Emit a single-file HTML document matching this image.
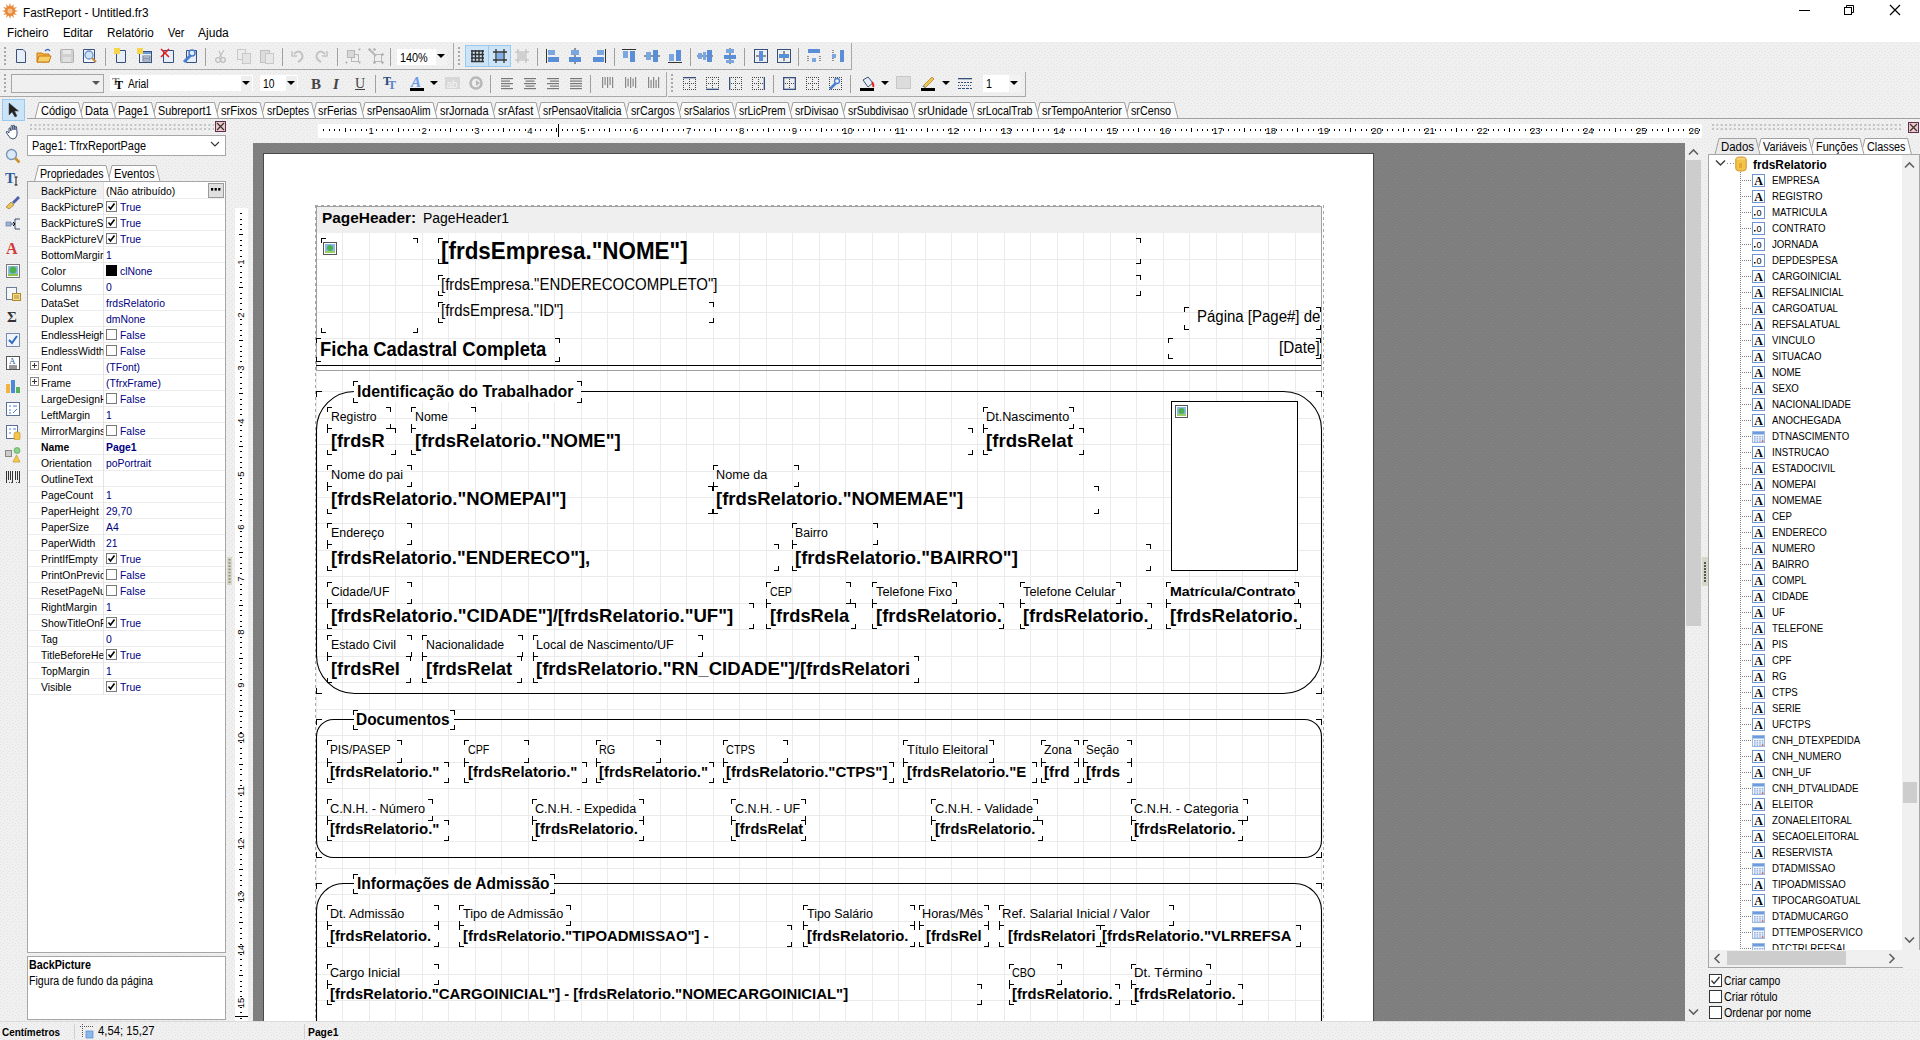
<!DOCTYPE html><html><head><meta charset="utf-8"><style>
html,body{margin:0;padding:0;width:1920px;height:1040px;overflow:hidden;background:#f0f0f0;position:relative;font-family:'Liberation Sans', sans-serif;}
</style></head><body>
<div style="position:absolute;left:0px;top:0px;width:1920px;height:42px;background:#ffffff;z-index:0;"></div><svg style="position:absolute;left:2px;top:3px;z-index:3;" width="16" height="16" viewBox="0 0 16 16"><g fill="#e8893c"><circle cx="8" cy="8" r="5"/><polygon points="8,0 9.5,5 6.5,5" transform="rotate(0 8 8)"/><polygon points="8,0 9.5,5 6.5,5" transform="rotate(30 8 8)"/><polygon points="8,0 9.5,5 6.5,5" transform="rotate(60 8 8)"/><polygon points="8,0 9.5,5 6.5,5" transform="rotate(90 8 8)"/><polygon points="8,0 9.5,5 6.5,5" transform="rotate(120 8 8)"/><polygon points="8,0 9.5,5 6.5,5" transform="rotate(150 8 8)"/><polygon points="8,0 9.5,5 6.5,5" transform="rotate(180 8 8)"/><polygon points="8,0 9.5,5 6.5,5" transform="rotate(210 8 8)"/><polygon points="8,0 9.5,5 6.5,5" transform="rotate(240 8 8)"/><polygon points="8,0 9.5,5 6.5,5" transform="rotate(270 8 8)"/><polygon points="8,0 9.5,5 6.5,5" transform="rotate(300 8 8)"/><polygon points="8,0 9.5,5 6.5,5" transform="rotate(330 8 8)"/></g><circle cx="8" cy="8" r="2.5" fill="#f6c28f"/></svg><div style="position:absolute;left:23px;top:7.14px;font:normal 12px 'Liberation Sans', sans-serif;line-height:13.40px;color:#000;white-space:pre;z-index:5;transform:scaleX(0.9801);transform-origin:0 0;">FastReport - Untitled.fr3</div><div style="position:absolute;left:1799px;top:10px;width:11px;height:1px;background:#000;z-index:2;"></div><svg style="position:absolute;left:1843px;top:4px;z-index:3;" width="12" height="12" viewBox="0 0 12 12"><rect x="1.5" y="3.5" width="7" height="7" fill="none" stroke="#000"/><path d="M3.5 3.5V1.5H10.5V8.5H8.5" fill="none" stroke="#000"/></svg><svg style="position:absolute;left:1889px;top:4px;z-index:3;" width="12" height="12" viewBox="0 0 12 12"><path d="M1 1L11 11M11 1L1 11" stroke="#000" stroke-width="1.2"/></svg><div style="position:absolute;left:7.3px;top:27.14px;font:normal 12px 'Liberation Sans', sans-serif;line-height:13.40px;color:#000;white-space:pre;z-index:5;transform:scaleX(0.9722);transform-origin:0 0;">Ficheiro</div><div style="position:absolute;left:63.3px;top:27.14px;font:normal 12px 'Liberation Sans', sans-serif;line-height:13.40px;color:#000;white-space:pre;z-index:5;transform:scaleX(0.9503);transform-origin:0 0;">Editar</div><div style="position:absolute;left:107px;top:27.14px;font:normal 12px 'Liberation Sans', sans-serif;line-height:13.40px;color:#000;white-space:pre;z-index:5;transform:scaleX(0.9744);transform-origin:0 0;">Relatório</div><div style="position:absolute;left:168px;top:27.14px;font:normal 12px 'Liberation Sans', sans-serif;line-height:13.40px;color:#000;white-space:pre;z-index:5;transform:scaleX(0.9048);transform-origin:0 0;">Ver</div><div style="position:absolute;left:198px;top:27.14px;font:normal 12px 'Liberation Sans', sans-serif;line-height:13.40px;color:#000;white-space:pre;z-index:5;transform:scaleX(1.0032);transform-origin:0 0;">Ajuda</div><div style="position:absolute;left:0px;top:42px;width:454px;height:28px;background:#f0f0f0;z-index:0;"></div><div style="position:absolute;left:0px;top:69px;width:454px;height:1px;background:#a9a9a9;z-index:1;"></div><div style="position:absolute;left:453px;top:43px;width:1px;height:27px;background:#a9a9a9;z-index:1;"></div><div style="position:absolute;left:455px;top:42px;width:397px;height:28px;background:#f0f0f0;z-index:0;"></div><div style="position:absolute;left:455px;top:69px;width:397px;height:1px;background:#a9a9a9;z-index:1;"></div><div style="position:absolute;left:851px;top:43px;width:1px;height:27px;background:#a9a9a9;z-index:1;"></div><div style="position:absolute;left:0px;top:71px;width:667px;height:26px;background:#f0f0f0;z-index:0;"></div><div style="position:absolute;left:0px;top:96px;width:667px;height:1px;background:#a9a9a9;z-index:1;"></div><div style="position:absolute;left:666px;top:72px;width:1px;height:25px;background:#a9a9a9;z-index:1;"></div><div style="position:absolute;left:668px;top:71px;width:358px;height:26px;background:#f0f0f0;z-index:0;"></div><div style="position:absolute;left:668px;top:96px;width:358px;height:1px;background:#a9a9a9;z-index:1;"></div><div style="position:absolute;left:1025px;top:72px;width:1px;height:25px;background:#a9a9a9;z-index:1;"></div><svg style="position:absolute;left:4px;top:47px;z-index:3;" width="3" height="20" viewBox="0 0 3 20"><rect x="0" y="0" width="2" height="2" fill="#a8a8a8"/><rect x="0" y="4" width="2" height="2" fill="#a8a8a8"/><rect x="0" y="8" width="2" height="2" fill="#a8a8a8"/><rect x="0" y="12" width="2" height="2" fill="#a8a8a8"/><rect x="0" y="16" width="2" height="2" fill="#a8a8a8"/></svg><svg style="position:absolute;left:458px;top:47px;z-index:3;" width="3" height="20" viewBox="0 0 3 20"><rect x="0" y="0" width="2" height="2" fill="#a8a8a8"/><rect x="0" y="4" width="2" height="2" fill="#a8a8a8"/><rect x="0" y="8" width="2" height="2" fill="#a8a8a8"/><rect x="0" y="12" width="2" height="2" fill="#a8a8a8"/><rect x="0" y="16" width="2" height="2" fill="#a8a8a8"/></svg><svg style="position:absolute;left:4px;top:74px;z-index:3;" width="3" height="20" viewBox="0 0 3 20"><rect x="0" y="0" width="2" height="2" fill="#a8a8a8"/><rect x="0" y="4" width="2" height="2" fill="#a8a8a8"/><rect x="0" y="8" width="2" height="2" fill="#a8a8a8"/><rect x="0" y="12" width="2" height="2" fill="#a8a8a8"/><rect x="0" y="16" width="2" height="2" fill="#a8a8a8"/></svg><svg style="position:absolute;left:671px;top:74px;z-index:3;" width="3" height="20" viewBox="0 0 3 20"><rect x="0" y="0" width="2" height="2" fill="#a8a8a8"/><rect x="0" y="4" width="2" height="2" fill="#a8a8a8"/><rect x="0" y="8" width="2" height="2" fill="#a8a8a8"/><rect x="0" y="12" width="2" height="2" fill="#a8a8a8"/><rect x="0" y="16" width="2" height="2" fill="#a8a8a8"/></svg><svg style="position:absolute;left:13px;top:48px;z-index:3;" width="16" height="16" viewBox="0 0 16 16"><path d="M3.5 1.5H10L12.5 4V14.5H3.5Z" fill="#e8eef8" stroke="#35507a"/></svg><svg style="position:absolute;left:36px;top:48px;z-index:3;" width="16" height="16" viewBox="0 0 16 16"><path d="M1 5H6L7 6H13V14H1Z" fill="#f3b43f" stroke="#c97a12"/><path d="M1 14L3 8H15L13 14Z" fill="#f8d06a" stroke="#c97a12"/><path d="M9 3Q12 0 14 3" fill="none" stroke="#3a6fc0" stroke-width="1.3"/></svg><svg style="position:absolute;left:59px;top:48px;z-index:3;" width="16" height="16" viewBox="0 0 16 16"><rect x="1.5" y="1.5" width="13" height="13" rx="1" fill="#d0d0d0" stroke="#b0b0b0"/><rect x="4" y="2" width="8" height="4" fill="#e8e8e8"/><rect x="4" y="9" width="8" height="5" fill="#e0e0e0"/></svg><svg style="position:absolute;left:82px;top:48px;z-index:3;" width="16" height="16" viewBox="0 0 16 16"><path d="M1.5 1.5H12.5V14.5H1.5Z" fill="#f4f7fc" stroke="#35507a"/><circle cx="7" cy="7" r="4" fill="#cfe3f8" stroke="#6b95c9" stroke-width="1.3"/><path d="M10 10L14 14" stroke="#c88a3a" stroke-width="2"/></svg><div style="position:absolute;left:105px;top:48px;width:1px;height:18px;background:#a0a0a0;z-index:2;"></div><svg style="position:absolute;left:113px;top:48px;z-index:3;" width="16" height="16" viewBox="0 0 16 16"><path d="M3.5 2.5H12.5V14.5H3.5Z" fill="#e8eef8" stroke="#35507a"/><rect x="1" y="0" width="6" height="6" fill="#f7d54a"/></svg><svg style="position:absolute;left:137px;top:48px;z-index:3;" width="16" height="16" viewBox="0 0 16 16"><rect x="2.5" y="3.5" width="12" height="11" fill="#e8eef8" stroke="#35507a"/><rect x="3" y="4" width="11" height="2" fill="#6b9bd8"/><rect x="6" y="8" width="7" height="2" fill="none" stroke="#6b7c95"/><rect x="6" y="11" width="7" height="2" fill="none" stroke="#6b7c95"/><rect x="0" y="0" width="6" height="6" fill="#f7d54a"/></svg><svg style="position:absolute;left:160px;top:48px;z-index:3;" width="16" height="16" viewBox="0 0 16 16"><path d="M3.5 2.5H13.5V14.5H3.5Z" fill="#e8eef8" stroke="#35507a"/><path d="M1 1L9 9M9 1L1 9" stroke="#e02020" stroke-width="1.6"/></svg><svg style="position:absolute;left:182px;top:48px;z-index:3;" width="16" height="16" viewBox="0 0 16 16"><path d="M4.5 2.5H14.5V14.5H4.5Z" fill="#e8eef8" stroke="#35507a"/><path d="M2 14L9 7" stroke="#4a7fd0" stroke-width="3"/><circle cx="10" cy="5" r="3" fill="none" stroke="#4a7fd0" stroke-width="1.5"/></svg><div style="position:absolute;left:205px;top:48px;width:1px;height:18px;background:#a0a0a0;z-index:2;"></div><svg style="position:absolute;left:213px;top:48px;z-index:3;" width="16" height="16" viewBox="0 0 16 16"><circle cx="5" cy="12" r="2.3" fill="none" stroke="#bdbdbd" stroke-width="1.3"/><circle cx="10" cy="12" r="2.3" fill="none" stroke="#bdbdbd" stroke-width="1.3"/><path d="M6 10L11 2M9 10L6 3" stroke="#c4c4c4" stroke-width="1.3"/></svg><svg style="position:absolute;left:236px;top:48px;z-index:3;" width="16" height="16" viewBox="0 0 16 16"><rect x="1.5" y="1.5" width="8" height="10" fill="#ececec" stroke="#c8c8c8"/><rect x="6.5" y="5.5" width="8" height="10" fill="#e4e4e4" stroke="#c8c8c8"/></svg><svg style="position:absolute;left:259px;top:48px;z-index:3;" width="16" height="16" viewBox="0 0 16 16"><rect x="1.5" y="2.5" width="9" height="12" fill="#dcdcdc" stroke="#c0c0c0"/><rect x="6.5" y="5.5" width="8" height="10" fill="#e8e8e8" stroke="#c8c8c8"/></svg><div style="position:absolute;left:282px;top:48px;width:1px;height:18px;background:#a0a0a0;z-index:2;"></div><svg style="position:absolute;left:290px;top:48px;z-index:3;" width="16" height="16" viewBox="0 0 16 16"><path d="M4 6Q9 1 12 6Q14 11 8 14" fill="none" stroke="#c4c4c4" stroke-width="2"/><path d="M2 3V8H7" fill="none" stroke="#c4c4c4" stroke-width="1.5"/></svg><svg style="position:absolute;left:313px;top:48px;z-index:3;" width="16" height="16" viewBox="0 0 16 16"><path d="M12 6Q7 1 4 6Q2 11 8 14" fill="none" stroke="#c4c4c4" stroke-width="2"/><path d="M14 3V8H9" fill="none" stroke="#c4c4c4" stroke-width="1.5"/></svg><div style="position:absolute;left:337px;top:48px;width:1px;height:18px;background:#a0a0a0;z-index:2;"></div><svg style="position:absolute;left:345px;top:48px;z-index:3;" width="16" height="16" viewBox="0 0 16 16"><rect x="6.5" y="6.5" width="7" height="7" fill="none" stroke="#b8b8b8"/><rect x="2.5" y="2.5" width="7" height="7" fill="#d8d8d8" stroke="#b8b8b8"/><circle cx="1.5" cy="14.5" r="1" fill="#aaa"/><circle cx="14.5" cy="1.5" r="1" fill="#aaa"/><circle cx="14.5" cy="14.5" r="1" fill="#aaa"/></svg><svg style="position:absolute;left:368px;top:48px;z-index:3;" width="16" height="16" viewBox="0 0 16 16"><rect x="6.5" y="6.5" width="7" height="7" fill="none" stroke="#b8b8b8"/><path d="M2 2L8 8" stroke="#b8b8b8" stroke-width="2"/><circle cx="1.5" cy="1.5" r="1.2" fill="#aaa"/><circle cx="6.5" cy="1.5" r="1.2" fill="#aaa"/><circle cx="6.5" cy="14.5" r="1.2" fill="#aaa"/><circle cx="14.5" cy="14.5" r="1.2" fill="#aaa"/><circle cx="14.5" cy="6.5" r="1.2" fill="#aaa"/></svg><div style="position:absolute;left:390px;top:48px;width:1px;height:18px;background:#a0a0a0;z-index:2;"></div><div style="position:absolute;left:397px;top:49px;width:50px;height:16px;background:#ffffff;z-index:1;"></div><div style="position:absolute;left:436px;top:49px;width:11px;height:16px;background:#f2f2f2;z-index:1;"></div><div style="position:absolute;left:400px;top:52.14px;font:normal 12px 'Liberation Sans', sans-serif;line-height:13.40px;color:#000;white-space:pre;z-index:5;transform:scaleX(0.9022);transform-origin:0 0;">140%</div><svg style="position:absolute;left:437px;top:54px;z-index:3;" width="8" height="5" viewBox="0 0 8 5"><path d="M0 0H8L4 4Z" fill="#000"/></svg><div style="position:absolute;left:465px;top:45px;width:46px;height:22px;background:#cce4f7;border:1px solid #99c9ef;box-sizing:border-box;z-index:1;"></div><div style="position:absolute;left:488px;top:45px;width:1px;height:22px;background:#99c9ef;z-index:2;"></div><svg style="position:absolute;left:469px;top:48px;z-index:3;" width="16" height="16" viewBox="0 0 16 16"><path d="M3 2V14M6.5 2V14M10 2V14M13.5 2V14M2 3H15M2 6.5H15M2 10H15M2 13.5H15" stroke="#333" stroke-width="1.4"/></svg><svg style="position:absolute;left:492px;top:48px;z-index:3;" width="16" height="16" viewBox="0 0 16 16"><path d="M1 4H15M1 12H15M4 1V15M12 1V15" stroke="#333" stroke-width="1.3"/><rect x="5" y="5" width="6" height="6" fill="#7fb0ea"/></svg><svg style="position:absolute;left:514px;top:48px;z-index:3;" width="16" height="16" viewBox="0 0 16 16"><path d="M1 4H15M1 12H15M4 1V15M12 1V15" stroke="#b8b8b8" stroke-width="1"/><rect x="5" y="5" width="6" height="6" fill="#d0d0d0"/></svg><div style="position:absolute;left:537px;top:48px;width:1px;height:18px;background:#a0a0a0;z-index:2;"></div><svg style="position:absolute;left:545px;top:48px;z-index:3;" width="16" height="16" viewBox="0 0 16 16"><path d="M1.5 1V15" stroke="#333"/><rect x="3" y="2" width="7" height="5" fill="#7aa7e0"/><rect x="3" y="9" width="11" height="5" fill="#5a8ed6"/></svg><svg style="position:absolute;left:567px;top:48px;z-index:3;" width="16" height="16" viewBox="0 0 16 16"><path d="M8 0V16" stroke="#333"/><rect x="4" y="2" width="8" height="5" fill="#7aa7e0"/><rect x="2" y="9" width="12" height="5" fill="#5a8ed6"/></svg><svg style="position:absolute;left:591px;top:48px;z-index:3;" width="16" height="16" viewBox="0 0 16 16"><path d="M14.5 1V15" stroke="#333"/><rect x="6" y="2" width="7" height="5" fill="#7aa7e0"/><rect x="2" y="9" width="11" height="5" fill="#5a8ed6"/></svg><div style="position:absolute;left:614px;top:48px;width:1px;height:18px;background:#a0a0a0;z-index:2;"></div><svg style="position:absolute;left:621px;top:48px;z-index:3;" width="16" height="16" viewBox="0 0 16 16"><path d="M1 1.5H15" stroke="#333"/><rect x="2" y="3" width="5" height="7" fill="#7aa7e0"/><rect x="9" y="3" width="5" height="11" fill="#5a8ed6"/></svg><svg style="position:absolute;left:644px;top:48px;z-index:3;" width="16" height="16" viewBox="0 0 16 16"><path d="M0 8H16" stroke="#333"/><rect x="2" y="4" width="5" height="8" fill="#7aa7e0"/><rect x="9" y="2" width="5" height="12" fill="#5a8ed6"/></svg><svg style="position:absolute;left:667px;top:48px;z-index:3;" width="16" height="16" viewBox="0 0 16 16"><path d="M1 14.5H15" stroke="#333"/><rect x="2" y="6" width="5" height="7" fill="#7aa7e0"/><rect x="9" y="2" width="5" height="11" fill="#5a8ed6"/></svg><div style="position:absolute;left:690px;top:48px;width:1px;height:18px;background:#a0a0a0;z-index:2;"></div><svg style="position:absolute;left:697px;top:48px;z-index:3;" width="16" height="16" viewBox="0 0 16 16"><path d="M0 8H16" stroke="#333"/><rect x="1" y="5" width="4" height="6" fill="#7aa7e0"/><rect x="10" y="2" width="5" height="12" fill="#5a8ed6"/><rect x="6" y="4" width="3" height="8" fill="#7aa7e0"/></svg><svg style="position:absolute;left:722px;top:48px;z-index:3;" width="16" height="16" viewBox="0 0 16 16"><path d="M8 0V16" stroke="#333"/><rect x="4" y="1" width="8" height="4" fill="#7aa7e0"/><rect x="2" y="7" width="12" height="4" fill="#5a8ed6"/><rect x="4" y="12" width="8" height="3" fill="#7aa7e0"/></svg><div style="position:absolute;left:744px;top:48px;width:1px;height:18px;background:#a0a0a0;z-index:2;"></div><svg style="position:absolute;left:753px;top:48px;z-index:3;" width="16" height="16" viewBox="0 0 16 16"><rect x="1.5" y="1.5" width="13" height="13" fill="none" stroke="#35507a"/><path d="M3 8H13" stroke="#333"/><rect x="6" y="3" width="4" height="10" fill="#5a8ed6"/></svg><svg style="position:absolute;left:776px;top:48px;z-index:3;" width="16" height="16" viewBox="0 0 16 16"><rect x="1.5" y="1.5" width="13" height="13" fill="none" stroke="#35507a"/><path d="M8 3V13" stroke="#333"/><rect x="3" y="6" width="10" height="4" fill="#5a8ed6"/></svg><div style="position:absolute;left:798px;top:48px;width:1px;height:18px;background:#a0a0a0;z-index:2;"></div><svg style="position:absolute;left:806px;top:48px;z-index:3;" width="16" height="16" viewBox="0 0 16 16"><rect x="2" y="1" width="12" height="4" fill="#5a8ed6"/><path d="M2 8V14M14 8V14" stroke="#333" stroke-dasharray="1 1"/><rect x="6" y="10" width="4" height="4" fill="#7aa7e0"/></svg><svg style="position:absolute;left:830px;top:48px;z-index:3;" width="16" height="16" viewBox="0 0 16 16"><rect x="10" y="2" width="4" height="12" fill="#5a8ed6"/><path d="M3 2V14" stroke="#333" stroke-dasharray="1 1"/><rect x="2" y="6" width="4" height="4" fill="#7aa7e0"/></svg><div style="position:absolute;left:11px;top:74px;width:93px;height:19px;background:#f0f0f0;border:1px solid #a6a6a6;box-sizing:border-box;z-index:1;"></div><svg style="position:absolute;left:92px;top:81px;z-index:3;" width="8" height="5" viewBox="0 0 8 5"><path d="M0 0H8L4 4Z" fill="#555"/></svg><div style="position:absolute;left:110px;top:75px;width:143px;height:16px;background:#ffffff;z-index:1;"></div><div style="position:absolute;left:241px;top:76px;width:11px;height:15px;background:#eeeeee;z-index:1;"></div><svg style="position:absolute;left:242px;top:81px;z-index:3;" width="8" height="5" viewBox="0 0 8 5"><path d="M0 0H8L4 4Z" fill="#000"/></svg><svg style="position:absolute;left:112px;top:75px;z-index:3;" width="14" height="15" viewBox="0 0 14 15"><text x="0" y="10" font-family="Liberation Serif" font-weight="bold" font-size="11" fill="#777">T</text><text x="3" y="14" font-family="Liberation Serif" font-weight="bold" font-size="12" fill="#000">T</text></svg><div style="position:absolute;left:128px;top:78.14px;font:normal 12px 'Liberation Sans', sans-serif;line-height:13.40px;color:#000;white-space:pre;z-index:5;transform:scaleX(0.8536);transform-origin:0 0;">Arial</div><div style="position:absolute;left:260px;top:75px;width:38px;height:16px;background:#ffffff;z-index:1;"></div><div style="position:absolute;left:286px;top:76px;width:11px;height:15px;background:#eeeeee;z-index:1;"></div><svg style="position:absolute;left:287px;top:81px;z-index:3;" width="8" height="5" viewBox="0 0 8 5"><path d="M0 0H8L4 4Z" fill="#000"/></svg><div style="position:absolute;left:262.5px;top:78.14px;font:normal 12px 'Liberation Sans', sans-serif;line-height:13.40px;color:#000;white-space:pre;z-index:5;transform:scaleX(0.8608);transform-origin:0 0;">10</div><div style="position:absolute;left:311px;top:76.42px;font:bold 15px 'Liberation Serif', serif;line-height:16.75px;color:#444;white-space:pre;z-index:5;">B</div><div style="position:absolute;left:333px;top:76.42px;font:italic bold 15px 'Liberation Serif', serif;line-height:16.75px;color:#444;white-space:pre;z-index:5;">I</div><div style="position:absolute;left:355px;top:76.33px;font:normal 14px 'Liberation Serif', serif;line-height:15.64px;color:#444;white-space:pre;z-index:5;">U</div><div style="position:absolute;left:355px;top:89px;width:10px;height:1px;background:#444;z-index:4;"></div><div style="position:absolute;left:375px;top:75px;width:1px;height:18px;background:#a0a0a0;z-index:2;"></div><svg style="position:absolute;left:383px;top:75px;z-index:3;" width="16" height="16" viewBox="0 0 16 16"><text x="0" y="10" font-family="Liberation Serif" font-weight="bold" font-size="12" fill="#2a4a7a">T</text><text x="5" y="14" font-family="Liberation Serif" font-weight="bold" font-size="12" fill="#5a86c4">T</text></svg><svg style="position:absolute;left:409px;top:75px;z-index:3;" width="16" height="17" viewBox="0 0 16 17"><text x="2" y="12" font-family="Liberation Serif" font-style="italic" font-weight="bold" font-size="15" fill="#6a9be8">A</text><rect x="1" y="13" width="14" height="3" fill="#000"/></svg><svg style="position:absolute;left:430px;top:81px;z-index:3;" width="8" height="5" viewBox="0 0 8 5"><path d="M0 0H8L4 4Z" fill="#000"/></svg><div style="position:absolute;left:445px;top:77px;width:15px;height:12px;background:#d8d8d8;z-index:2;"></div><div style="position:absolute;left:446.5px;top:78.95px;font:normal 10px 'Liberation Sans', sans-serif;line-height:11.17px;color:#f4f4f4;white-space:pre;z-index:5;">ab</div><svg style="position:absolute;left:468px;top:75px;z-index:3;" width="16" height="16" viewBox="0 0 16 16"><circle cx="8" cy="8" r="5.5" fill="none" stroke="#b8b8b8" stroke-width="2.5"/><path d="M8 5L12 8L8 11Z" fill="#b8b8b8"/></svg><div style="position:absolute;left:490px;top:75px;width:1px;height:18px;background:#a0a0a0;z-index:2;"></div><svg style="position:absolute;left:499px;top:75px;z-index:3;" width="16" height="16" viewBox="0 0 16 16"><rect x="2" y="3.0" width="12" height="1.2" fill="#777"/><rect x="2" y="5.5" width="9" height="1.2" fill="#777"/><rect x="2" y="8.0" width="12" height="1.2" fill="#777"/><rect x="2" y="10.5" width="9" height="1.2" fill="#777"/><rect x="2" y="13.0" width="12" height="1.2" fill="#777"/></svg><svg style="position:absolute;left:522px;top:75px;z-index:3;" width="16" height="16" viewBox="0 0 16 16"><rect x="2.0" y="3.0" width="12" height="1.2" fill="#777"/><rect x="3.5" y="5.5" width="9" height="1.2" fill="#777"/><rect x="2.0" y="8.0" width="12" height="1.2" fill="#777"/><rect x="3.5" y="10.5" width="9" height="1.2" fill="#777"/><rect x="2.0" y="13.0" width="12" height="1.2" fill="#777"/></svg><svg style="position:absolute;left:545px;top:75px;z-index:3;" width="16" height="16" viewBox="0 0 16 16"><rect x="2" y="3.0" width="12" height="1.2" fill="#777"/><rect x="5" y="5.5" width="9" height="1.2" fill="#777"/><rect x="2" y="8.0" width="12" height="1.2" fill="#777"/><rect x="5" y="10.5" width="9" height="1.2" fill="#777"/><rect x="2" y="13.0" width="12" height="1.2" fill="#777"/></svg><svg style="position:absolute;left:568px;top:75px;z-index:3;" width="16" height="16" viewBox="0 0 16 16"><rect x="2" y="3.0" width="12" height="1.2" fill="#777"/><rect x="2" y="5.5" width="12" height="1.2" fill="#777"/><rect x="2" y="8.0" width="12" height="1.2" fill="#777"/><rect x="2" y="10.5" width="12" height="1.2" fill="#777"/><rect x="2" y="13.0" width="12" height="1.2" fill="#777"/></svg><div style="position:absolute;left:590px;top:75px;width:1px;height:18px;background:#a0a0a0;z-index:2;"></div><svg style="position:absolute;left:599px;top:75px;z-index:3;" width="16" height="16" viewBox="0 0 16 16"><rect x="3.0" y="2" width="1.2" height="11" fill="#888"/><rect x="5.5" y="2" width="1.2" height="8" fill="#888"/><rect x="8.0" y="2" width="1.2" height="11" fill="#888"/><rect x="10.5" y="2" width="1.2" height="8" fill="#888"/><rect x="13.0" y="2" width="1.2" height="11" fill="#888"/></svg><svg style="position:absolute;left:622px;top:75px;z-index:3;" width="16" height="16" viewBox="0 0 16 16"><rect x="3.0" y="2.0" width="1.2" height="11" fill="#888"/><rect x="5.5" y="3.5" width="1.2" height="8" fill="#888"/><rect x="8.0" y="2.0" width="1.2" height="11" fill="#888"/><rect x="10.5" y="3.5" width="1.2" height="8" fill="#888"/><rect x="13.0" y="2.0" width="1.2" height="11" fill="#888"/></svg><svg style="position:absolute;left:645px;top:75px;z-index:3;" width="16" height="16" viewBox="0 0 16 16"><rect x="3.0" y="2" width="1.2" height="11" fill="#888"/><rect x="5.5" y="5" width="1.2" height="8" fill="#888"/><rect x="8.0" y="2" width="1.2" height="11" fill="#888"/><rect x="10.5" y="5" width="1.2" height="8" fill="#888"/><rect x="13.0" y="2" width="1.2" height="11" fill="#888"/></svg><svg style="position:absolute;left:681px;top:75px;z-index:3;" width="16" height="16" viewBox="0 0 16 16"><rect x="2" y="2" width="1" height="1" fill="#444"/><rect x="2" y="14" width="1" height="1" fill="#444"/><rect x="2" y="2" width="1" height="1" fill="#444"/><rect x="14" y="2" width="1" height="1" fill="#444"/><rect x="2" y="8" width="1" height="1" fill="#444"/><rect x="8" y="2" width="1" height="1" fill="#444"/><rect x="4" y="2" width="1" height="1" fill="#444"/><rect x="4" y="14" width="1" height="1" fill="#444"/><rect x="2" y="4" width="1" height="1" fill="#444"/><rect x="14" y="4" width="1" height="1" fill="#444"/><rect x="4" y="8" width="1" height="1" fill="#444"/><rect x="8" y="4" width="1" height="1" fill="#444"/><rect x="6" y="2" width="1" height="1" fill="#444"/><rect x="6" y="14" width="1" height="1" fill="#444"/><rect x="2" y="6" width="1" height="1" fill="#444"/><rect x="14" y="6" width="1" height="1" fill="#444"/><rect x="6" y="8" width="1" height="1" fill="#444"/><rect x="8" y="6" width="1" height="1" fill="#444"/><rect x="8" y="2" width="1" height="1" fill="#444"/><rect x="8" y="14" width="1" height="1" fill="#444"/><rect x="2" y="8" width="1" height="1" fill="#444"/><rect x="14" y="8" width="1" height="1" fill="#444"/><rect x="8" y="8" width="1" height="1" fill="#444"/><rect x="8" y="8" width="1" height="1" fill="#444"/><rect x="10" y="2" width="1" height="1" fill="#444"/><rect x="10" y="14" width="1" height="1" fill="#444"/><rect x="2" y="10" width="1" height="1" fill="#444"/><rect x="14" y="10" width="1" height="1" fill="#444"/><rect x="10" y="8" width="1" height="1" fill="#444"/><rect x="8" y="10" width="1" height="1" fill="#444"/><rect x="12" y="2" width="1" height="1" fill="#444"/><rect x="12" y="14" width="1" height="1" fill="#444"/><rect x="2" y="12" width="1" height="1" fill="#444"/><rect x="14" y="12" width="1" height="1" fill="#444"/><rect x="12" y="8" width="1" height="1" fill="#444"/><rect x="8" y="12" width="1" height="1" fill="#444"/><rect x="14" y="2" width="1" height="1" fill="#444"/><rect x="14" y="14" width="1" height="1" fill="#444"/><rect x="2" y="14" width="1" height="1" fill="#444"/><rect x="14" y="14" width="1" height="1" fill="#444"/><rect x="14" y="8" width="1" height="1" fill="#444"/><rect x="8" y="14" width="1" height="1" fill="#444"/><rect x="2" y="2" width="13" height="1.3" fill="#3a5080"/></svg><svg style="position:absolute;left:704px;top:75px;z-index:3;" width="16" height="16" viewBox="0 0 16 16"><rect x="2" y="2" width="1" height="1" fill="#444"/><rect x="2" y="14" width="1" height="1" fill="#444"/><rect x="2" y="2" width="1" height="1" fill="#444"/><rect x="14" y="2" width="1" height="1" fill="#444"/><rect x="2" y="8" width="1" height="1" fill="#444"/><rect x="8" y="2" width="1" height="1" fill="#444"/><rect x="4" y="2" width="1" height="1" fill="#444"/><rect x="4" y="14" width="1" height="1" fill="#444"/><rect x="2" y="4" width="1" height="1" fill="#444"/><rect x="14" y="4" width="1" height="1" fill="#444"/><rect x="4" y="8" width="1" height="1" fill="#444"/><rect x="8" y="4" width="1" height="1" fill="#444"/><rect x="6" y="2" width="1" height="1" fill="#444"/><rect x="6" y="14" width="1" height="1" fill="#444"/><rect x="2" y="6" width="1" height="1" fill="#444"/><rect x="14" y="6" width="1" height="1" fill="#444"/><rect x="6" y="8" width="1" height="1" fill="#444"/><rect x="8" y="6" width="1" height="1" fill="#444"/><rect x="8" y="2" width="1" height="1" fill="#444"/><rect x="8" y="14" width="1" height="1" fill="#444"/><rect x="2" y="8" width="1" height="1" fill="#444"/><rect x="14" y="8" width="1" height="1" fill="#444"/><rect x="8" y="8" width="1" height="1" fill="#444"/><rect x="8" y="8" width="1" height="1" fill="#444"/><rect x="10" y="2" width="1" height="1" fill="#444"/><rect x="10" y="14" width="1" height="1" fill="#444"/><rect x="2" y="10" width="1" height="1" fill="#444"/><rect x="14" y="10" width="1" height="1" fill="#444"/><rect x="10" y="8" width="1" height="1" fill="#444"/><rect x="8" y="10" width="1" height="1" fill="#444"/><rect x="12" y="2" width="1" height="1" fill="#444"/><rect x="12" y="14" width="1" height="1" fill="#444"/><rect x="2" y="12" width="1" height="1" fill="#444"/><rect x="14" y="12" width="1" height="1" fill="#444"/><rect x="12" y="8" width="1" height="1" fill="#444"/><rect x="8" y="12" width="1" height="1" fill="#444"/><rect x="14" y="2" width="1" height="1" fill="#444"/><rect x="14" y="14" width="1" height="1" fill="#444"/><rect x="2" y="14" width="1" height="1" fill="#444"/><rect x="14" y="14" width="1" height="1" fill="#444"/><rect x="14" y="8" width="1" height="1" fill="#444"/><rect x="8" y="14" width="1" height="1" fill="#444"/><rect x="2" y="13.7" width="13" height="1.3" fill="#3a5080"/></svg><svg style="position:absolute;left:727px;top:75px;z-index:3;" width="16" height="16" viewBox="0 0 16 16"><rect x="2" y="2" width="1" height="1" fill="#444"/><rect x="2" y="14" width="1" height="1" fill="#444"/><rect x="2" y="2" width="1" height="1" fill="#444"/><rect x="14" y="2" width="1" height="1" fill="#444"/><rect x="2" y="8" width="1" height="1" fill="#444"/><rect x="8" y="2" width="1" height="1" fill="#444"/><rect x="4" y="2" width="1" height="1" fill="#444"/><rect x="4" y="14" width="1" height="1" fill="#444"/><rect x="2" y="4" width="1" height="1" fill="#444"/><rect x="14" y="4" width="1" height="1" fill="#444"/><rect x="4" y="8" width="1" height="1" fill="#444"/><rect x="8" y="4" width="1" height="1" fill="#444"/><rect x="6" y="2" width="1" height="1" fill="#444"/><rect x="6" y="14" width="1" height="1" fill="#444"/><rect x="2" y="6" width="1" height="1" fill="#444"/><rect x="14" y="6" width="1" height="1" fill="#444"/><rect x="6" y="8" width="1" height="1" fill="#444"/><rect x="8" y="6" width="1" height="1" fill="#444"/><rect x="8" y="2" width="1" height="1" fill="#444"/><rect x="8" y="14" width="1" height="1" fill="#444"/><rect x="2" y="8" width="1" height="1" fill="#444"/><rect x="14" y="8" width="1" height="1" fill="#444"/><rect x="8" y="8" width="1" height="1" fill="#444"/><rect x="8" y="8" width="1" height="1" fill="#444"/><rect x="10" y="2" width="1" height="1" fill="#444"/><rect x="10" y="14" width="1" height="1" fill="#444"/><rect x="2" y="10" width="1" height="1" fill="#444"/><rect x="14" y="10" width="1" height="1" fill="#444"/><rect x="10" y="8" width="1" height="1" fill="#444"/><rect x="8" y="10" width="1" height="1" fill="#444"/><rect x="12" y="2" width="1" height="1" fill="#444"/><rect x="12" y="14" width="1" height="1" fill="#444"/><rect x="2" y="12" width="1" height="1" fill="#444"/><rect x="14" y="12" width="1" height="1" fill="#444"/><rect x="12" y="8" width="1" height="1" fill="#444"/><rect x="8" y="12" width="1" height="1" fill="#444"/><rect x="14" y="2" width="1" height="1" fill="#444"/><rect x="14" y="14" width="1" height="1" fill="#444"/><rect x="2" y="14" width="1" height="1" fill="#444"/><rect x="14" y="14" width="1" height="1" fill="#444"/><rect x="14" y="8" width="1" height="1" fill="#444"/><rect x="8" y="14" width="1" height="1" fill="#444"/><rect x="2" y="2" width="1.3" height="13" fill="#3a5080"/></svg><svg style="position:absolute;left:750px;top:75px;z-index:3;" width="16" height="16" viewBox="0 0 16 16"><rect x="2" y="2" width="1" height="1" fill="#444"/><rect x="2" y="14" width="1" height="1" fill="#444"/><rect x="2" y="2" width="1" height="1" fill="#444"/><rect x="14" y="2" width="1" height="1" fill="#444"/><rect x="2" y="8" width="1" height="1" fill="#444"/><rect x="8" y="2" width="1" height="1" fill="#444"/><rect x="4" y="2" width="1" height="1" fill="#444"/><rect x="4" y="14" width="1" height="1" fill="#444"/><rect x="2" y="4" width="1" height="1" fill="#444"/><rect x="14" y="4" width="1" height="1" fill="#444"/><rect x="4" y="8" width="1" height="1" fill="#444"/><rect x="8" y="4" width="1" height="1" fill="#444"/><rect x="6" y="2" width="1" height="1" fill="#444"/><rect x="6" y="14" width="1" height="1" fill="#444"/><rect x="2" y="6" width="1" height="1" fill="#444"/><rect x="14" y="6" width="1" height="1" fill="#444"/><rect x="6" y="8" width="1" height="1" fill="#444"/><rect x="8" y="6" width="1" height="1" fill="#444"/><rect x="8" y="2" width="1" height="1" fill="#444"/><rect x="8" y="14" width="1" height="1" fill="#444"/><rect x="2" y="8" width="1" height="1" fill="#444"/><rect x="14" y="8" width="1" height="1" fill="#444"/><rect x="8" y="8" width="1" height="1" fill="#444"/><rect x="8" y="8" width="1" height="1" fill="#444"/><rect x="10" y="2" width="1" height="1" fill="#444"/><rect x="10" y="14" width="1" height="1" fill="#444"/><rect x="2" y="10" width="1" height="1" fill="#444"/><rect x="14" y="10" width="1" height="1" fill="#444"/><rect x="10" y="8" width="1" height="1" fill="#444"/><rect x="8" y="10" width="1" height="1" fill="#444"/><rect x="12" y="2" width="1" height="1" fill="#444"/><rect x="12" y="14" width="1" height="1" fill="#444"/><rect x="2" y="12" width="1" height="1" fill="#444"/><rect x="14" y="12" width="1" height="1" fill="#444"/><rect x="12" y="8" width="1" height="1" fill="#444"/><rect x="8" y="12" width="1" height="1" fill="#444"/><rect x="14" y="2" width="1" height="1" fill="#444"/><rect x="14" y="14" width="1" height="1" fill="#444"/><rect x="2" y="14" width="1" height="1" fill="#444"/><rect x="14" y="14" width="1" height="1" fill="#444"/><rect x="14" y="8" width="1" height="1" fill="#444"/><rect x="8" y="14" width="1" height="1" fill="#444"/><rect x="13.7" y="2" width="1.3" height="13" fill="#3a5080"/></svg><div style="position:absolute;left:773px;top:75px;width:1px;height:18px;background:#a0a0a0;z-index:2;"></div><svg style="position:absolute;left:781px;top:75px;z-index:3;" width="16" height="16" viewBox="0 0 16 16"><rect x="2" y="2" width="1" height="1" fill="#444"/><rect x="2" y="14" width="1" height="1" fill="#444"/><rect x="2" y="2" width="1" height="1" fill="#444"/><rect x="14" y="2" width="1" height="1" fill="#444"/><rect x="2" y="8" width="1" height="1" fill="#444"/><rect x="8" y="2" width="1" height="1" fill="#444"/><rect x="4" y="2" width="1" height="1" fill="#444"/><rect x="4" y="14" width="1" height="1" fill="#444"/><rect x="2" y="4" width="1" height="1" fill="#444"/><rect x="14" y="4" width="1" height="1" fill="#444"/><rect x="4" y="8" width="1" height="1" fill="#444"/><rect x="8" y="4" width="1" height="1" fill="#444"/><rect x="6" y="2" width="1" height="1" fill="#444"/><rect x="6" y="14" width="1" height="1" fill="#444"/><rect x="2" y="6" width="1" height="1" fill="#444"/><rect x="14" y="6" width="1" height="1" fill="#444"/><rect x="6" y="8" width="1" height="1" fill="#444"/><rect x="8" y="6" width="1" height="1" fill="#444"/><rect x="8" y="2" width="1" height="1" fill="#444"/><rect x="8" y="14" width="1" height="1" fill="#444"/><rect x="2" y="8" width="1" height="1" fill="#444"/><rect x="14" y="8" width="1" height="1" fill="#444"/><rect x="8" y="8" width="1" height="1" fill="#444"/><rect x="8" y="8" width="1" height="1" fill="#444"/><rect x="10" y="2" width="1" height="1" fill="#444"/><rect x="10" y="14" width="1" height="1" fill="#444"/><rect x="2" y="10" width="1" height="1" fill="#444"/><rect x="14" y="10" width="1" height="1" fill="#444"/><rect x="10" y="8" width="1" height="1" fill="#444"/><rect x="8" y="10" width="1" height="1" fill="#444"/><rect x="12" y="2" width="1" height="1" fill="#444"/><rect x="12" y="14" width="1" height="1" fill="#444"/><rect x="2" y="12" width="1" height="1" fill="#444"/><rect x="14" y="12" width="1" height="1" fill="#444"/><rect x="12" y="8" width="1" height="1" fill="#444"/><rect x="8" y="12" width="1" height="1" fill="#444"/><rect x="14" y="2" width="1" height="1" fill="#444"/><rect x="14" y="14" width="1" height="1" fill="#444"/><rect x="2" y="14" width="1" height="1" fill="#444"/><rect x="14" y="14" width="1" height="1" fill="#444"/><rect x="14" y="8" width="1" height="1" fill="#444"/><rect x="8" y="14" width="1" height="1" fill="#444"/><rect x="2" y="2" width="13" height="1.3" fill="#3a5080"/><rect x="2" y="13.7" width="13" height="1.3" fill="#3a5080"/><rect x="2" y="2" width="1.3" height="13" fill="#3a5080"/><rect x="13.7" y="2" width="1.3" height="13" fill="#3a5080"/></svg><svg style="position:absolute;left:804px;top:75px;z-index:3;" width="16" height="16" viewBox="0 0 16 16"><rect x="2" y="2" width="1" height="1" fill="#444"/><rect x="2" y="14" width="1" height="1" fill="#444"/><rect x="2" y="2" width="1" height="1" fill="#444"/><rect x="14" y="2" width="1" height="1" fill="#444"/><rect x="2" y="8" width="1" height="1" fill="#444"/><rect x="8" y="2" width="1" height="1" fill="#444"/><rect x="4" y="2" width="1" height="1" fill="#444"/><rect x="4" y="14" width="1" height="1" fill="#444"/><rect x="2" y="4" width="1" height="1" fill="#444"/><rect x="14" y="4" width="1" height="1" fill="#444"/><rect x="4" y="8" width="1" height="1" fill="#444"/><rect x="8" y="4" width="1" height="1" fill="#444"/><rect x="6" y="2" width="1" height="1" fill="#444"/><rect x="6" y="14" width="1" height="1" fill="#444"/><rect x="2" y="6" width="1" height="1" fill="#444"/><rect x="14" y="6" width="1" height="1" fill="#444"/><rect x="6" y="8" width="1" height="1" fill="#444"/><rect x="8" y="6" width="1" height="1" fill="#444"/><rect x="8" y="2" width="1" height="1" fill="#444"/><rect x="8" y="14" width="1" height="1" fill="#444"/><rect x="2" y="8" width="1" height="1" fill="#444"/><rect x="14" y="8" width="1" height="1" fill="#444"/><rect x="8" y="8" width="1" height="1" fill="#444"/><rect x="8" y="8" width="1" height="1" fill="#444"/><rect x="10" y="2" width="1" height="1" fill="#444"/><rect x="10" y="14" width="1" height="1" fill="#444"/><rect x="2" y="10" width="1" height="1" fill="#444"/><rect x="14" y="10" width="1" height="1" fill="#444"/><rect x="10" y="8" width="1" height="1" fill="#444"/><rect x="8" y="10" width="1" height="1" fill="#444"/><rect x="12" y="2" width="1" height="1" fill="#444"/><rect x="12" y="14" width="1" height="1" fill="#444"/><rect x="2" y="12" width="1" height="1" fill="#444"/><rect x="14" y="12" width="1" height="1" fill="#444"/><rect x="12" y="8" width="1" height="1" fill="#444"/><rect x="8" y="12" width="1" height="1" fill="#444"/><rect x="14" y="2" width="1" height="1" fill="#444"/><rect x="14" y="14" width="1" height="1" fill="#444"/><rect x="2" y="14" width="1" height="1" fill="#444"/><rect x="14" y="14" width="1" height="1" fill="#444"/><rect x="14" y="8" width="1" height="1" fill="#444"/><rect x="8" y="14" width="1" height="1" fill="#444"/></svg><svg style="position:absolute;left:827px;top:75px;z-index:3;" width="16" height="16" viewBox="0 0 16 16"><rect x="2" y="2" width="1" height="1" fill="#444"/><rect x="2" y="14" width="1" height="1" fill="#444"/><rect x="2" y="2" width="1" height="1" fill="#444"/><rect x="14" y="2" width="1" height="1" fill="#444"/><rect x="4" y="2" width="1" height="1" fill="#444"/><rect x="4" y="14" width="1" height="1" fill="#444"/><rect x="2" y="4" width="1" height="1" fill="#444"/><rect x="14" y="4" width="1" height="1" fill="#444"/><rect x="6" y="2" width="1" height="1" fill="#444"/><rect x="6" y="14" width="1" height="1" fill="#444"/><rect x="2" y="6" width="1" height="1" fill="#444"/><rect x="14" y="6" width="1" height="1" fill="#444"/><rect x="8" y="2" width="1" height="1" fill="#444"/><rect x="8" y="14" width="1" height="1" fill="#444"/><rect x="2" y="8" width="1" height="1" fill="#444"/><rect x="14" y="8" width="1" height="1" fill="#444"/><rect x="10" y="2" width="1" height="1" fill="#444"/><rect x="10" y="14" width="1" height="1" fill="#444"/><rect x="2" y="10" width="1" height="1" fill="#444"/><rect x="14" y="10" width="1" height="1" fill="#444"/><rect x="12" y="2" width="1" height="1" fill="#444"/><rect x="12" y="14" width="1" height="1" fill="#444"/><rect x="2" y="12" width="1" height="1" fill="#444"/><rect x="14" y="12" width="1" height="1" fill="#444"/><rect x="14" y="2" width="1" height="1" fill="#444"/><rect x="14" y="14" width="1" height="1" fill="#444"/><rect x="2" y="14" width="1" height="1" fill="#444"/><rect x="14" y="14" width="1" height="1" fill="#444"/><path d="M3 14L9 8" stroke="#4a7fd0" stroke-width="2.5"/><circle cx="10" cy="6" r="2.5" fill="none" stroke="#4a7fd0" stroke-width="1.3"/></svg><div style="position:absolute;left:850px;top:75px;width:1px;height:18px;background:#a0a0a0;z-index:2;"></div><svg style="position:absolute;left:859px;top:75px;z-index:3;" width="16" height="16" viewBox="0 0 16 16"><path d="M4 5L9 2L14 8L9 12Z" fill="#e8eef8" stroke="#35507a"/><path d="M13 7Q15 10 14 12" stroke="#e02020" stroke-width="2" fill="none"/><rect x="1" y="13" width="14" height="3" fill="#000"/></svg><svg style="position:absolute;left:881px;top:81px;z-index:3;" width="8" height="5" viewBox="0 0 8 5"><path d="M0 0H8L4 4Z" fill="#000"/></svg><div style="position:absolute;left:896px;top:76px;width:15px;height:13px;background:#dcdcdc;border:1px solid #c8c8c8;box-sizing:border-box;z-index:2;"></div><svg style="position:absolute;left:920px;top:75px;z-index:3;" width="16" height="16" viewBox="0 0 16 16"><path d="M3 11L12 2L14 4L5 13Z" fill="#f3c64a" stroke="#8a6a20" stroke-width=".6"/><path d="M2 12L4 10L5 12Z" fill="#6b95c9"/><rect x="1" y="13" width="14" height="3" fill="#000"/></svg><svg style="position:absolute;left:942px;top:81px;z-index:3;" width="8" height="5" viewBox="0 0 8 5"><path d="M0 0H8L4 4Z" fill="#000"/></svg><svg style="position:absolute;left:957px;top:75px;z-index:3;" width="16" height="16" viewBox="0 0 16 16"><rect x="1" y="3" width="14" height="1.3" fill="#35507a"/><path d="M1 7.5H15" stroke="#35507a" stroke-dasharray="2 1"/><path d="M1 10.5H15" stroke="#35507a" stroke-dasharray="1 1"/><path d="M1 13.5H15" stroke="#35507a" stroke-dasharray="3 1"/></svg><div style="position:absolute;left:983px;top:75px;width:38px;height:17px;background:#ffffff;z-index:1;"></div><div style="position:absolute;left:1009px;top:75px;width:12px;height:17px;background:#f2f2f2;z-index:1;"></div><svg style="position:absolute;left:1010px;top:81px;z-index:3;" width="8" height="5" viewBox="0 0 8 5"><path d="M0 0H8L4 4Z" fill="#000"/></svg><div style="position:absolute;left:985.5px;top:78.14px;font:normal 12px 'Liberation Sans', sans-serif;line-height:13.40px;color:#000;white-space:pre;z-index:5;transform:scaleX(0.8972);transform-origin:0 0;">1</div><div style="position:absolute;left:0px;top:97px;width:1920px;height:24px;background:#f0f0f0;z-index:0;"></div><div style="position:absolute;left:27px;top:118px;width:1893px;height:1px;background:#a0a0a0;z-index:2;"></div><div style="position:absolute;left:2px;top:99px;width:23px;height:22px;background:#cce4f7;border:1px solid #99c9ef;box-sizing:border-box;z-index:1;"></div><svg style="position:absolute;left:6px;top:102px;z-index:3;" width="14" height="16" viewBox="0 0 14 16"><path d="M3 1V13L6 10L9 15L11 14L8.5 9H12.5Z" fill="#222" stroke="#444" stroke-width=".5"/></svg><svg style="position:absolute;left:27px;top:97px;z-index:1;" width="1152" height="23" viewBox="0 0 1152 23"><path d="M1098.5 21.5L1102.5 5.5H1147.0L1151.0 21.5" fill="#fcfcfc" stroke="#a0a0a0"/><path d="M1009.0 21.5L1013.0 5.5H1097.5L1101.5 21.5" fill="#fcfcfc" stroke="#a0a0a0"/><path d="M944.0 21.5L948.0 5.5H1008.0L1012.0 21.5" fill="#fcfcfc" stroke="#a0a0a0"/><path d="M885.0 21.5L889.0 5.5H943.0L947.0 21.5" fill="#fcfcfc" stroke="#a0a0a0"/><path d="M815.0 21.5L819.0 5.5H884.0L888.0 21.5" fill="#fcfcfc" stroke="#a0a0a0"/><path d="M762.0 21.5L766.0 5.5H814.0L818.0 21.5" fill="#fcfcfc" stroke="#a0a0a0"/><path d="M706.0 21.5L710.0 5.5H761.0L765.0 21.5" fill="#fcfcfc" stroke="#a0a0a0"/><path d="M651.0 21.5L655.0 5.5H705.0L709.0 21.5" fill="#fcfcfc" stroke="#a0a0a0"/><path d="M598.0 21.5L602.0 5.5H650.0L654.0 21.5" fill="#fcfcfc" stroke="#a0a0a0"/><path d="M510.0 21.5L514.0 5.5H597.0L601.0 21.5" fill="#fcfcfc" stroke="#a0a0a0"/><path d="M465.0 21.5L469.0 5.5H509.0L513.0 21.5" fill="#fcfcfc" stroke="#a0a0a0"/><path d="M407.0 21.5L411.0 5.5H464.0L468.0 21.5" fill="#fcfcfc" stroke="#a0a0a0"/><path d="M334.0 21.5L338.0 5.5H406.0L410.0 21.5" fill="#fcfcfc" stroke="#a0a0a0"/><path d="M285.5 21.5L289.5 5.5H333.0L337.0 21.5" fill="#fcfcfc" stroke="#a0a0a0"/><path d="M234.0 21.5L238.0 5.5H284.5L288.5 21.5" fill="#fcfcfc" stroke="#a0a0a0"/><path d="M188.5 21.5L192.5 5.5H233.0L237.0 21.5" fill="#fcfcfc" stroke="#a0a0a0"/><path d="M125.5 21.5L129.5 5.5H187.5L191.5 21.5" fill="#fcfcfc" stroke="#a0a0a0"/><path d="M85.5 21.5L89.5 5.5H124.5L128.5 21.5" fill="#fcfcfc" stroke="#a0a0a0"/><path d="M52.5 21.5L56.5 5.5H84.5L88.5 21.5" fill="#fcfcfc" stroke="#a0a0a0"/><path d="M8.0 21.5L12.0 5.5H51.5L55.5 21.5" fill="#fcfcfc" stroke="#a0a0a0"/></svg><div style="position:absolute;left:40.5px;top:105.14px;font:normal 12px 'Liberation Sans', sans-serif;line-height:13.40px;color:#000;white-space:pre;z-index:4;transform:scaleX(0.9203);transform-origin:0 0;">Código</div><div style="position:absolute;left:85.0px;top:105.14px;font:normal 12px 'Liberation Sans', sans-serif;line-height:13.40px;color:#000;white-space:pre;z-index:4;transform:scaleX(0.9267);transform-origin:0 0;">Data</div><div style="position:absolute;left:118.0px;top:105.14px;font:normal 12px 'Liberation Sans', sans-serif;line-height:13.40px;color:#000;white-space:pre;z-index:4;transform:scaleX(0.8789);transform-origin:0 0;">Page1</div><div style="position:absolute;left:158.0px;top:105.14px;font:normal 12px 'Liberation Sans', sans-serif;line-height:13.40px;color:#000;white-space:pre;z-index:4;transform:scaleX(0.9011);transform-origin:0 0;">Subreport1</div><div style="position:absolute;left:221.0px;top:105.14px;font:normal 12px 'Liberation Sans', sans-serif;line-height:13.40px;color:#000;white-space:pre;z-index:4;transform:scaleX(0.9309);transform-origin:0 0;">srFixos</div><div style="position:absolute;left:266.5px;top:105.14px;font:normal 12px 'Liberation Sans', sans-serif;line-height:13.40px;color:#000;white-space:pre;z-index:4;transform:scaleX(0.8744);transform-origin:0 0;">srDeptes</div><div style="position:absolute;left:318.0px;top:105.14px;font:normal 12px 'Liberation Sans', sans-serif;line-height:13.40px;color:#000;white-space:pre;z-index:4;transform:scaleX(0.8998);transform-origin:0 0;">srFerias</div><div style="position:absolute;left:366.5px;top:105.14px;font:normal 12px 'Liberation Sans', sans-serif;line-height:13.40px;color:#000;white-space:pre;z-index:4;transform:scaleX(0.8577);transform-origin:0 0;">srPensaoAlim</div><div style="position:absolute;left:439.5px;top:105.14px;font:normal 12px 'Liberation Sans', sans-serif;line-height:13.40px;color:#000;white-space:pre;z-index:4;transform:scaleX(0.9087);transform-origin:0 0;">srJornada</div><div style="position:absolute;left:497.5px;top:105.14px;font:normal 12px 'Liberation Sans', sans-serif;line-height:13.40px;color:#000;white-space:pre;z-index:4;transform:scaleX(0.9506);transform-origin:0 0;">srAfast</div><div style="position:absolute;left:542.5px;top:105.14px;font:normal 12px 'Liberation Sans', sans-serif;line-height:13.40px;color:#000;white-space:pre;z-index:4;transform:scaleX(0.8549);transform-origin:0 0;">srPensaoVitalicia</div><div style="position:absolute;left:630.5px;top:105.14px;font:normal 12px 'Liberation Sans', sans-serif;line-height:13.40px;color:#000;white-space:pre;z-index:4;transform:scaleX(0.8935);transform-origin:0 0;">srCargos</div><div style="position:absolute;left:683.5px;top:105.14px;font:normal 12px 'Liberation Sans', sans-serif;line-height:13.40px;color:#000;white-space:pre;z-index:4;transform:scaleX(0.8527);transform-origin:0 0;">srSalarios</div><div style="position:absolute;left:738.5px;top:105.14px;font:normal 12px 'Liberation Sans', sans-serif;line-height:13.40px;color:#000;white-space:pre;z-index:4;transform:scaleX(0.8609);transform-origin:0 0;">srLicPrem</div><div style="position:absolute;left:794.5px;top:105.14px;font:normal 12px 'Liberation Sans', sans-serif;line-height:13.40px;color:#000;white-space:pre;z-index:4;transform:scaleX(0.8816);transform-origin:0 0;">srDivisao</div><div style="position:absolute;left:847.5px;top:105.14px;font:normal 12px 'Liberation Sans', sans-serif;line-height:13.40px;color:#000;white-space:pre;z-index:4;transform:scaleX(0.8806);transform-origin:0 0;">srSubdivisao</div><div style="position:absolute;left:917.5px;top:105.14px;font:normal 12px 'Liberation Sans', sans-serif;line-height:13.40px;color:#000;white-space:pre;z-index:4;transform:scaleX(0.9049);transform-origin:0 0;">srUnidade</div><div style="position:absolute;left:976.5px;top:105.14px;font:normal 12px 'Liberation Sans', sans-serif;line-height:13.40px;color:#000;white-space:pre;z-index:4;transform:scaleX(0.8820);transform-origin:0 0;">srLocalTrab</div><div style="position:absolute;left:1041.5px;top:105.14px;font:normal 12px 'Liberation Sans', sans-serif;line-height:13.40px;color:#000;white-space:pre;z-index:4;transform:scaleX(0.9088);transform-origin:0 0;">srTempoAnterior</div><div style="position:absolute;left:1131.0px;top:105.14px;font:normal 12px 'Liberation Sans', sans-serif;line-height:13.40px;color:#000;white-space:pre;z-index:4;transform:scaleX(0.8951);transform-origin:0 0;">srCenso</div><div style="position:absolute;left:0px;top:121px;width:26px;height:900px;background:#f0f0f0;z-index:0;"></div><svg style="position:absolute;left:5px;top:124px;z-index:3;" width="16" height="16" viewBox="0 0 16 16"><path d="M4 9V5Q4 3.5 5 4L6 7V2.5Q6 1 7.3 1.5L8 6V2Q8 .8 9.3 1.3L10 6V3Q10.5 2 11.5 2.7L12 8V11Q11 15 8 15Q5 15 3 11L1 8Q1.5 7 3 8Z" fill="#fff" stroke="#3a4f73"/></svg><svg style="position:absolute;left:5px;top:148px;z-index:3;" width="16" height="16" viewBox="0 0 16 16"><circle cx="6.5" cy="6.5" r="5" fill="#dbe9f8" stroke="#7a96b8" stroke-width="1.4"/><path d="M10 10L14.5 14.5" stroke="#c8952f" stroke-width="2.6"/></svg><svg style="position:absolute;left:5px;top:170px;z-index:3;" width="16" height="16" viewBox="0 0 16 16"><text x="0" y="13" font-family="Liberation Serif" font-weight="bold" font-size="15" fill="#2c5d9c">T</text><path d="M11 7V15M9.5 7H12.5M9.5 15H12.5" stroke="#000" stroke-width=".9"/></svg><svg style="position:absolute;left:5px;top:194px;z-index:3;" width="16" height="16" viewBox="0 0 16 16"><path d="M1 13L6 8L9 11L4 15Z" fill="#e8c45a" stroke="#8a6a20" stroke-width=".6"/><path d="M7 8L13 2L15 4L9 10Z" fill="#4a5fa8"/></svg><svg style="position:absolute;left:5px;top:216px;z-index:3;" width="16" height="16" viewBox="0 0 16 16"><rect x="1" y="6" width="5" height="4" fill="#9fb4d8" stroke="#5a6f98" stroke-width=".6"/><path d="M6 8H10M10 3V13M10 3H15M10 13H15" stroke="#3a4f73"/><path d="M8 6L10 8L8 10" fill="none" stroke="#000"/></svg><svg style="position:absolute;left:5px;top:240px;z-index:3;" width="16" height="16" viewBox="0 0 16 16"><text x="1" y="14" font-family="Liberation Serif" font-weight="bold" font-size="16" fill="#d03a3a">A</text></svg><svg style="position:absolute;left:5px;top:263px;z-index:3;" width="16" height="16" viewBox="0 0 16 16"><rect x="1.5" y="1.5" width="13" height="13" fill="#fff" stroke="#777"/><rect x="3" y="3" width="10" height="10" fill="#8ab8e8"/><circle cx="8" cy="7" r="3.5" fill="#4caf50"/><rect x="3" y="11" width="10" height="2" fill="#8bc34a"/></svg><svg style="position:absolute;left:5px;top:286px;z-index:3;" width="16" height="16" viewBox="0 0 16 16"><rect x="1.5" y="1.5" width="10" height="12" fill="#f4f6fa" stroke="#6b7c95"/><rect x="7.5" y="7.5" width="8" height="7" fill="#f7dc8a" stroke="#b08a2a"/><path d="M9 10H14M9 12H14" stroke="#8a6a20" stroke-width=".7"/></svg><svg style="position:absolute;left:5px;top:309px;z-index:3;" width="16" height="16" viewBox="0 0 16 16"><text x="2" y="13" font-family="Liberation Serif" font-weight="bold" font-size="15" fill="#333">Σ</text></svg><svg style="position:absolute;left:5px;top:332px;z-index:3;" width="16" height="16" viewBox="0 0 16 16"><rect x="1.5" y="1.5" width="13" height="13" fill="#f0f4fa" stroke="#7a8aa8"/><path d="M4 8L7 11L12 4" fill="none" stroke="#2d6cc0" stroke-width="2"/></svg><svg style="position:absolute;left:5px;top:355px;z-index:3;" width="16" height="16" viewBox="0 0 16 16"><rect x="1.5" y="1.5" width="13" height="13" fill="#fff" stroke="#555"/><text x="4" y="9" font-family="Liberation Serif" font-size="9" fill="#2c5d9c">A</text><path d="M4 11H12M4 13H12" stroke="#333"/></svg><svg style="position:absolute;left:5px;top:378px;z-index:3;" width="16" height="16" viewBox="0 0 16 16"><rect x="1" y="6" width="4" height="9" fill="#f3b43f"/><rect x="6" y="2" width="4" height="13" fill="#4a8ad8"/><rect x="11" y="9" width="4" height="6" fill="#5bb05b"/></svg><svg style="position:absolute;left:5px;top:401px;z-index:3;" width="16" height="16" viewBox="0 0 16 16"><rect x="1.5" y="1.5" width="13" height="13" fill="#fff" stroke="#5a6f98"/><path d="M4 5H6M8 5H12M4 9H6M4 12H6M8 12L12 8" stroke="#4a7fd0"/></svg><svg style="position:absolute;left:5px;top:424px;z-index:3;" width="16" height="16" viewBox="0 0 16 16"><rect x="1.5" y="1.5" width="11" height="13" fill="#fff" stroke="#5a6f98"/><path d="M4 5H6M8 5H11M4 9H6" stroke="#4a7fd0"/><rect x="9" y="8" width="6" height="8" rx="2" fill="#f3c64a" stroke="#b08a2a" stroke-width=".6"/></svg><svg style="position:absolute;left:5px;top:447px;z-index:3;" width="16" height="16" viewBox="0 0 16 16"><rect x="0.5" y="3.5" width="6" height="6" fill="#ccc" stroke="#888"/><circle cx="12" cy="3.5" r="3" fill="#8bd08b" stroke="#4a9a4a" stroke-width=".6"/><path d="M8 15L11.5 8L15 15Z" fill="#f7c94a" stroke="#c08a20" stroke-width=".6"/></svg><svg style="position:absolute;left:5px;top:469px;z-index:3;" width="16" height="16" viewBox="0 0 16 16"><path d="M1.5 2V14M3.5 2V11M5.5 2V11M7.5 2V14M10.5 2V11M12.5 2V11M14.5 2V14" stroke="#333" stroke-width="1"/><path d="M4.5 13V14M6.5 13V14M11.5 13V14M13.5 13V14" stroke="#555"/></svg><div style="position:absolute;left:26px;top:121px;width:204px;height:900px;background:#f0f0f0;z-index:0;"></div><svg style="position:absolute;left:30px;top:123px;z-index:3;" width="184" height="8" viewBox="0 0 184 8"><rect x="0.0" y="1" width="2" height="2" fill="#c4c4c4"/><rect x="0.0" y="5" width="2" height="2" fill="#c4c4c4"/><rect x="4.35" y="1" width="2" height="2" fill="#c4c4c4"/><rect x="4.35" y="5" width="2" height="2" fill="#c4c4c4"/><rect x="8.7" y="1" width="2" height="2" fill="#c4c4c4"/><rect x="8.7" y="5" width="2" height="2" fill="#c4c4c4"/><rect x="13.049999999999999" y="1" width="2" height="2" fill="#c4c4c4"/><rect x="13.049999999999999" y="5" width="2" height="2" fill="#c4c4c4"/><rect x="17.4" y="1" width="2" height="2" fill="#c4c4c4"/><rect x="17.4" y="5" width="2" height="2" fill="#c4c4c4"/><rect x="21.75" y="1" width="2" height="2" fill="#c4c4c4"/><rect x="21.75" y="5" width="2" height="2" fill="#c4c4c4"/><rect x="26.099999999999998" y="1" width="2" height="2" fill="#c4c4c4"/><rect x="26.099999999999998" y="5" width="2" height="2" fill="#c4c4c4"/><rect x="30.449999999999996" y="1" width="2" height="2" fill="#c4c4c4"/><rect x="30.449999999999996" y="5" width="2" height="2" fill="#c4c4c4"/><rect x="34.8" y="1" width="2" height="2" fill="#c4c4c4"/><rect x="34.8" y="5" width="2" height="2" fill="#c4c4c4"/><rect x="39.15" y="1" width="2" height="2" fill="#c4c4c4"/><rect x="39.15" y="5" width="2" height="2" fill="#c4c4c4"/><rect x="43.5" y="1" width="2" height="2" fill="#c4c4c4"/><rect x="43.5" y="5" width="2" height="2" fill="#c4c4c4"/><rect x="47.849999999999994" y="1" width="2" height="2" fill="#c4c4c4"/><rect x="47.849999999999994" y="5" width="2" height="2" fill="#c4c4c4"/><rect x="52.199999999999996" y="1" width="2" height="2" fill="#c4c4c4"/><rect x="52.199999999999996" y="5" width="2" height="2" fill="#c4c4c4"/><rect x="56.55" y="1" width="2" height="2" fill="#c4c4c4"/><rect x="56.55" y="5" width="2" height="2" fill="#c4c4c4"/><rect x="60.89999999999999" y="1" width="2" height="2" fill="#c4c4c4"/><rect x="60.89999999999999" y="5" width="2" height="2" fill="#c4c4c4"/><rect x="65.25" y="1" width="2" height="2" fill="#c4c4c4"/><rect x="65.25" y="5" width="2" height="2" fill="#c4c4c4"/><rect x="69.6" y="1" width="2" height="2" fill="#c4c4c4"/><rect x="69.6" y="5" width="2" height="2" fill="#c4c4c4"/><rect x="73.94999999999999" y="1" width="2" height="2" fill="#c4c4c4"/><rect x="73.94999999999999" y="5" width="2" height="2" fill="#c4c4c4"/><rect x="78.3" y="1" width="2" height="2" fill="#c4c4c4"/><rect x="78.3" y="5" width="2" height="2" fill="#c4c4c4"/><rect x="82.64999999999999" y="1" width="2" height="2" fill="#c4c4c4"/><rect x="82.64999999999999" y="5" width="2" height="2" fill="#c4c4c4"/><rect x="87.0" y="1" width="2" height="2" fill="#c4c4c4"/><rect x="87.0" y="5" width="2" height="2" fill="#c4c4c4"/><rect x="91.35" y="1" width="2" height="2" fill="#c4c4c4"/><rect x="91.35" y="5" width="2" height="2" fill="#c4c4c4"/><rect x="95.69999999999999" y="1" width="2" height="2" fill="#c4c4c4"/><rect x="95.69999999999999" y="5" width="2" height="2" fill="#c4c4c4"/><rect x="100.05" y="1" width="2" height="2" fill="#c4c4c4"/><rect x="100.05" y="5" width="2" height="2" fill="#c4c4c4"/><rect x="104.39999999999999" y="1" width="2" height="2" fill="#c4c4c4"/><rect x="104.39999999999999" y="5" width="2" height="2" fill="#c4c4c4"/><rect x="108.74999999999999" y="1" width="2" height="2" fill="#c4c4c4"/><rect x="108.74999999999999" y="5" width="2" height="2" fill="#c4c4c4"/><rect x="113.1" y="1" width="2" height="2" fill="#c4c4c4"/><rect x="113.1" y="5" width="2" height="2" fill="#c4c4c4"/><rect x="117.44999999999999" y="1" width="2" height="2" fill="#c4c4c4"/><rect x="117.44999999999999" y="5" width="2" height="2" fill="#c4c4c4"/><rect x="121.79999999999998" y="1" width="2" height="2" fill="#c4c4c4"/><rect x="121.79999999999998" y="5" width="2" height="2" fill="#c4c4c4"/><rect x="126.14999999999999" y="1" width="2" height="2" fill="#c4c4c4"/><rect x="126.14999999999999" y="5" width="2" height="2" fill="#c4c4c4"/><rect x="130.5" y="1" width="2" height="2" fill="#c4c4c4"/><rect x="130.5" y="5" width="2" height="2" fill="#c4c4c4"/><rect x="134.85" y="1" width="2" height="2" fill="#c4c4c4"/><rect x="134.85" y="5" width="2" height="2" fill="#c4c4c4"/><rect x="139.2" y="1" width="2" height="2" fill="#c4c4c4"/><rect x="139.2" y="5" width="2" height="2" fill="#c4c4c4"/><rect x="143.54999999999998" y="1" width="2" height="2" fill="#c4c4c4"/><rect x="143.54999999999998" y="5" width="2" height="2" fill="#c4c4c4"/><rect x="147.89999999999998" y="1" width="2" height="2" fill="#c4c4c4"/><rect x="147.89999999999998" y="5" width="2" height="2" fill="#c4c4c4"/><rect x="152.25" y="1" width="2" height="2" fill="#c4c4c4"/><rect x="152.25" y="5" width="2" height="2" fill="#c4c4c4"/><rect x="156.6" y="1" width="2" height="2" fill="#c4c4c4"/><rect x="156.6" y="5" width="2" height="2" fill="#c4c4c4"/><rect x="160.95" y="1" width="2" height="2" fill="#c4c4c4"/><rect x="160.95" y="5" width="2" height="2" fill="#c4c4c4"/><rect x="165.29999999999998" y="1" width="2" height="2" fill="#c4c4c4"/><rect x="165.29999999999998" y="5" width="2" height="2" fill="#c4c4c4"/><rect x="169.64999999999998" y="1" width="2" height="2" fill="#c4c4c4"/><rect x="169.64999999999998" y="5" width="2" height="2" fill="#c4c4c4"/><rect x="174.0" y="1" width="2" height="2" fill="#c4c4c4"/><rect x="174.0" y="5" width="2" height="2" fill="#c4c4c4"/><rect x="178.35" y="1" width="2" height="2" fill="#c4c4c4"/><rect x="178.35" y="5" width="2" height="2" fill="#c4c4c4"/><rect x="182.7" y="1" width="2" height="2" fill="#c4c4c4"/><rect x="182.7" y="5" width="2" height="2" fill="#c4c4c4"/></svg><svg style="position:absolute;left:215px;top:121px;z-index:3;" width="11" height="11" viewBox="0 0 11 11"><rect x=".5" y=".5" width="10" height="10" fill="#f0c8c8" stroke="#5a3050"/><path d="M2 2L9 9M9 2L2 9" stroke="#333" stroke-width="1.2"/></svg><div style="position:absolute;left:27px;top:135px;width:199px;height:21px;background:#ffffff;border:1px solid #a6a6a6;box-sizing:border-box;z-index:1;"></div><div style="position:absolute;left:31.5px;top:140.14px;font:normal 12px 'Liberation Sans', sans-serif;line-height:13.40px;color:#000;white-space:pre;z-index:5;transform:scaleX(0.9058);transform-origin:0 0;">Page1: TfrxReportPage</div><svg style="position:absolute;left:210px;top:141px;z-index:3;" width="10" height="7" viewBox="0 0 10 7"><path d="M1 1L5 5L9 1" fill="none" stroke="#333" stroke-width="1.1"/></svg><svg style="position:absolute;left:27px;top:163px;z-index:1;" width="140" height="19" viewBox="0 0 140 19"><path d="M81 18.5L85 2.5H129L133 18.5" fill="#fcfcfc" stroke="#a0a0a0"/><path d="M7.5 18.5L11.5 2.5H79L83 18.5" fill="#fcfcfc" stroke="#a0a0a0"/></svg><div style="position:absolute;left:40px;top:168.14px;font:normal 12px 'Liberation Sans', sans-serif;line-height:13.40px;color:#000;white-space:pre;z-index:5;transform:scaleX(0.8895);transform-origin:0 0;">Propriedades</div><div style="position:absolute;left:113.5px;top:168.14px;font:normal 12px 'Liberation Sans', sans-serif;line-height:13.40px;color:#000;white-space:pre;z-index:5;transform:scaleX(0.9341);transform-origin:0 0;">Eventos</div><div style="position:absolute;left:27px;top:181px;width:199px;height:772px;background:#ffffff;border:1px solid #a6a6a6;box-sizing:border-box;z-index:1;"></div><div style="position:absolute;left:28px;top:182px;width:75px;height:16px;background:#f0f0f0;z-index:2;"></div><div style="position:absolute;left:28px;top:198px;width:197px;height:1px;background:#ececec;z-index:2;"></div><div style="position:absolute;left:103px;top:182px;width:1px;height:16px;background:#e4e4e4;z-index:2;"></div><div style="position:absolute;left:41px;top:185.04px;font:normal 11px 'Liberation Sans', sans-serif;line-height:12.29px;color:#000;white-space:pre;z-index:5;transform:scaleX(0.9450);transform-origin:0 0;width:66px;overflow:hidden;">BackPicture</div><div style="position:absolute;left:106px;top:185.04px;font:normal 11px 'Liberation Sans', sans-serif;line-height:12.29px;color:#000;white-space:pre;z-index:5;transform:scaleX(0.9450);transform-origin:0 0;">(Não atribuído)</div><div style="position:absolute;left:208px;top:183px;width:16px;height:15px;background:#e0e0e0;border:1px solid #9a9a9a;box-sizing:border-box;z-index:4;"></div><svg style="position:absolute;left:211px;top:188px;z-index:5;" width="10" height="4" viewBox="0 0 10 4"><rect x="0" y="0" width="2.2" height="2.6" fill="#000"/><rect x="3.6" y="0" width="2.2" height="2.6" fill="#000"/><rect x="7.2" y="0" width="2.2" height="2.6" fill="#000"/></svg><div style="position:absolute;left:28px;top:214px;width:197px;height:1px;background:#ececec;z-index:2;"></div><div style="position:absolute;left:103px;top:198px;width:1px;height:16px;background:#e4e4e4;z-index:2;"></div><div style="position:absolute;left:41px;top:201.04px;font:normal 11px 'Liberation Sans', sans-serif;line-height:12.29px;color:#000;white-space:pre;z-index:5;transform:scaleX(0.9450);transform-origin:0 0;width:66px;overflow:hidden;">BackPicturePrint</div><svg style="position:absolute;left:106px;top:201px;z-index:4;" width="11" height="11" viewBox="0 0 11 11"><rect x=".5" y=".5" width="10" height="10" fill="#fff" stroke="#777"/><path d="M2.5 5.5L4.5 8L8.5 2.5" fill="none" stroke="#000" stroke-width="1.6"/></svg><div style="position:absolute;left:119.5px;top:201.04px;font:normal 11px 'Liberation Sans', sans-serif;line-height:12.29px;color:#00007f;white-space:pre;z-index:5;transform:scaleX(0.9450);transform-origin:0 0;">True</div><div style="position:absolute;left:28px;top:230px;width:197px;height:1px;background:#ececec;z-index:2;"></div><div style="position:absolute;left:103px;top:214px;width:1px;height:16px;background:#e4e4e4;z-index:2;"></div><div style="position:absolute;left:41px;top:217.04px;font:normal 11px 'Liberation Sans', sans-serif;line-height:12.29px;color:#000;white-space:pre;z-index:5;transform:scaleX(0.9450);transform-origin:0 0;width:66px;overflow:hidden;">BackPictureStretched</div><svg style="position:absolute;left:106px;top:217px;z-index:4;" width="11" height="11" viewBox="0 0 11 11"><rect x=".5" y=".5" width="10" height="10" fill="#fff" stroke="#777"/><path d="M2.5 5.5L4.5 8L8.5 2.5" fill="none" stroke="#000" stroke-width="1.6"/></svg><div style="position:absolute;left:119.5px;top:217.04px;font:normal 11px 'Liberation Sans', sans-serif;line-height:12.29px;color:#00007f;white-space:pre;z-index:5;transform:scaleX(0.9450);transform-origin:0 0;">True</div><div style="position:absolute;left:28px;top:246px;width:197px;height:1px;background:#ececec;z-index:2;"></div><div style="position:absolute;left:103px;top:230px;width:1px;height:16px;background:#e4e4e4;z-index:2;"></div><div style="position:absolute;left:41px;top:233.04px;font:normal 11px 'Liberation Sans', sans-serif;line-height:12.29px;color:#000;white-space:pre;z-index:5;transform:scaleX(0.9450);transform-origin:0 0;width:66px;overflow:hidden;">BackPictureVisible</div><svg style="position:absolute;left:106px;top:233px;z-index:4;" width="11" height="11" viewBox="0 0 11 11"><rect x=".5" y=".5" width="10" height="10" fill="#fff" stroke="#777"/><path d="M2.5 5.5L4.5 8L8.5 2.5" fill="none" stroke="#000" stroke-width="1.6"/></svg><div style="position:absolute;left:119.5px;top:233.04px;font:normal 11px 'Liberation Sans', sans-serif;line-height:12.29px;color:#00007f;white-space:pre;z-index:5;transform:scaleX(0.9450);transform-origin:0 0;">True</div><div style="position:absolute;left:28px;top:262px;width:197px;height:1px;background:#ececec;z-index:2;"></div><div style="position:absolute;left:103px;top:246px;width:1px;height:16px;background:#e4e4e4;z-index:2;"></div><div style="position:absolute;left:41px;top:249.04px;font:normal 11px 'Liberation Sans', sans-serif;line-height:12.29px;color:#000;white-space:pre;z-index:5;transform:scaleX(0.9450);transform-origin:0 0;width:66px;overflow:hidden;">BottomMargin</div><div style="position:absolute;left:106px;top:249.04px;font:normal 11px 'Liberation Sans', sans-serif;line-height:12.29px;color:#00007f;white-space:pre;z-index:5;transform:scaleX(0.9450);transform-origin:0 0;">1</div><div style="position:absolute;left:28px;top:278px;width:197px;height:1px;background:#ececec;z-index:2;"></div><div style="position:absolute;left:103px;top:262px;width:1px;height:16px;background:#e4e4e4;z-index:2;"></div><div style="position:absolute;left:41px;top:265.04px;font:normal 11px 'Liberation Sans', sans-serif;line-height:12.29px;color:#000;white-space:pre;z-index:5;transform:scaleX(0.9450);transform-origin:0 0;width:66px;overflow:hidden;">Color</div><div style="position:absolute;left:106px;top:265px;width:11px;height:11px;background:#000;z-index:4;"></div><div style="position:absolute;left:119.5px;top:265.04px;font:normal 11px 'Liberation Sans', sans-serif;line-height:12.29px;color:#00007f;white-space:pre;z-index:5;transform:scaleX(0.9450);transform-origin:0 0;">clNone</div><div style="position:absolute;left:28px;top:294px;width:197px;height:1px;background:#ececec;z-index:2;"></div><div style="position:absolute;left:103px;top:278px;width:1px;height:16px;background:#e4e4e4;z-index:2;"></div><div style="position:absolute;left:41px;top:281.04px;font:normal 11px 'Liberation Sans', sans-serif;line-height:12.29px;color:#000;white-space:pre;z-index:5;transform:scaleX(0.9450);transform-origin:0 0;width:66px;overflow:hidden;">Columns</div><div style="position:absolute;left:106px;top:281.04px;font:normal 11px 'Liberation Sans', sans-serif;line-height:12.29px;color:#00007f;white-space:pre;z-index:5;transform:scaleX(0.9450);transform-origin:0 0;">0</div><div style="position:absolute;left:28px;top:310px;width:197px;height:1px;background:#ececec;z-index:2;"></div><div style="position:absolute;left:103px;top:294px;width:1px;height:16px;background:#e4e4e4;z-index:2;"></div><div style="position:absolute;left:41px;top:297.04px;font:normal 11px 'Liberation Sans', sans-serif;line-height:12.29px;color:#000;white-space:pre;z-index:5;transform:scaleX(0.9450);transform-origin:0 0;width:66px;overflow:hidden;">DataSet</div><div style="position:absolute;left:106px;top:297.04px;font:normal 11px 'Liberation Sans', sans-serif;line-height:12.29px;color:#00007f;white-space:pre;z-index:5;transform:scaleX(0.9450);transform-origin:0 0;">frdsRelatorio</div><div style="position:absolute;left:28px;top:326px;width:197px;height:1px;background:#ececec;z-index:2;"></div><div style="position:absolute;left:103px;top:310px;width:1px;height:16px;background:#e4e4e4;z-index:2;"></div><div style="position:absolute;left:41px;top:313.04px;font:normal 11px 'Liberation Sans', sans-serif;line-height:12.29px;color:#000;white-space:pre;z-index:5;transform:scaleX(0.9450);transform-origin:0 0;width:66px;overflow:hidden;">Duplex</div><div style="position:absolute;left:106px;top:313.04px;font:normal 11px 'Liberation Sans', sans-serif;line-height:12.29px;color:#00007f;white-space:pre;z-index:5;transform:scaleX(0.9450);transform-origin:0 0;">dmNone</div><div style="position:absolute;left:28px;top:342px;width:197px;height:1px;background:#ececec;z-index:2;"></div><div style="position:absolute;left:103px;top:326px;width:1px;height:16px;background:#e4e4e4;z-index:2;"></div><div style="position:absolute;left:41px;top:329.04px;font:normal 11px 'Liberation Sans', sans-serif;line-height:12.29px;color:#000;white-space:pre;z-index:5;transform:scaleX(0.9450);transform-origin:0 0;width:66px;overflow:hidden;">EndlessHeight</div><svg style="position:absolute;left:106px;top:329px;z-index:4;" width="11" height="11" viewBox="0 0 11 11"><rect x=".5" y=".5" width="10" height="10" fill="#fff" stroke="#777"/></svg><div style="position:absolute;left:119.5px;top:329.04px;font:normal 11px 'Liberation Sans', sans-serif;line-height:12.29px;color:#00007f;white-space:pre;z-index:5;transform:scaleX(0.9450);transform-origin:0 0;">False</div><div style="position:absolute;left:28px;top:358px;width:197px;height:1px;background:#ececec;z-index:2;"></div><div style="position:absolute;left:103px;top:342px;width:1px;height:16px;background:#e4e4e4;z-index:2;"></div><div style="position:absolute;left:41px;top:345.04px;font:normal 11px 'Liberation Sans', sans-serif;line-height:12.29px;color:#000;white-space:pre;z-index:5;transform:scaleX(0.9450);transform-origin:0 0;width:66px;overflow:hidden;">EndlessWidth</div><svg style="position:absolute;left:106px;top:345px;z-index:4;" width="11" height="11" viewBox="0 0 11 11"><rect x=".5" y=".5" width="10" height="10" fill="#fff" stroke="#777"/></svg><div style="position:absolute;left:119.5px;top:345.04px;font:normal 11px 'Liberation Sans', sans-serif;line-height:12.29px;color:#00007f;white-space:pre;z-index:5;transform:scaleX(0.9450);transform-origin:0 0;">False</div><div style="position:absolute;left:28px;top:374px;width:197px;height:1px;background:#ececec;z-index:2;"></div><div style="position:absolute;left:103px;top:358px;width:1px;height:16px;background:#e4e4e4;z-index:2;"></div><div style="position:absolute;left:41px;top:361.04px;font:normal 11px 'Liberation Sans', sans-serif;line-height:12.29px;color:#000;white-space:pre;z-index:5;transform:scaleX(0.9450);transform-origin:0 0;width:66px;overflow:hidden;">Font</div><svg style="position:absolute;left:30px;top:361px;z-index:4;" width="9" height="9" viewBox="0 0 9 9"><rect x=".5" y=".5" width="8" height="8" fill="#fff" stroke="#888"/><path d="M2 4.5H7M4.5 2V7" stroke="#333"/></svg><div style="position:absolute;left:106px;top:361.04px;font:normal 11px 'Liberation Sans', sans-serif;line-height:12.29px;color:#00007f;white-space:pre;z-index:5;transform:scaleX(0.9450);transform-origin:0 0;">(TFont)</div><div style="position:absolute;left:28px;top:390px;width:197px;height:1px;background:#ececec;z-index:2;"></div><div style="position:absolute;left:103px;top:374px;width:1px;height:16px;background:#e4e4e4;z-index:2;"></div><div style="position:absolute;left:41px;top:377.04px;font:normal 11px 'Liberation Sans', sans-serif;line-height:12.29px;color:#000;white-space:pre;z-index:5;transform:scaleX(0.9450);transform-origin:0 0;width:66px;overflow:hidden;">Frame</div><svg style="position:absolute;left:30px;top:377px;z-index:4;" width="9" height="9" viewBox="0 0 9 9"><rect x=".5" y=".5" width="8" height="8" fill="#fff" stroke="#888"/><path d="M2 4.5H7M4.5 2V7" stroke="#333"/></svg><div style="position:absolute;left:106px;top:377.04px;font:normal 11px 'Liberation Sans', sans-serif;line-height:12.29px;color:#00007f;white-space:pre;z-index:5;transform:scaleX(0.9450);transform-origin:0 0;">(TfrxFrame)</div><div style="position:absolute;left:28px;top:406px;width:197px;height:1px;background:#ececec;z-index:2;"></div><div style="position:absolute;left:103px;top:390px;width:1px;height:16px;background:#e4e4e4;z-index:2;"></div><div style="position:absolute;left:41px;top:393.04px;font:normal 11px 'Liberation Sans', sans-serif;line-height:12.29px;color:#000;white-space:pre;z-index:5;transform:scaleX(0.9450);transform-origin:0 0;width:66px;overflow:hidden;">LargeDesignHeight</div><svg style="position:absolute;left:106px;top:393px;z-index:4;" width="11" height="11" viewBox="0 0 11 11"><rect x=".5" y=".5" width="10" height="10" fill="#fff" stroke="#777"/></svg><div style="position:absolute;left:119.5px;top:393.04px;font:normal 11px 'Liberation Sans', sans-serif;line-height:12.29px;color:#00007f;white-space:pre;z-index:5;transform:scaleX(0.9450);transform-origin:0 0;">False</div><div style="position:absolute;left:28px;top:422px;width:197px;height:1px;background:#ececec;z-index:2;"></div><div style="position:absolute;left:103px;top:406px;width:1px;height:16px;background:#e4e4e4;z-index:2;"></div><div style="position:absolute;left:41px;top:409.04px;font:normal 11px 'Liberation Sans', sans-serif;line-height:12.29px;color:#000;white-space:pre;z-index:5;transform:scaleX(0.9450);transform-origin:0 0;width:66px;overflow:hidden;">LeftMargin</div><div style="position:absolute;left:106px;top:409.04px;font:normal 11px 'Liberation Sans', sans-serif;line-height:12.29px;color:#00007f;white-space:pre;z-index:5;transform:scaleX(0.9450);transform-origin:0 0;">1</div><div style="position:absolute;left:28px;top:438px;width:197px;height:1px;background:#ececec;z-index:2;"></div><div style="position:absolute;left:103px;top:422px;width:1px;height:16px;background:#e4e4e4;z-index:2;"></div><div style="position:absolute;left:41px;top:425.04px;font:normal 11px 'Liberation Sans', sans-serif;line-height:12.29px;color:#000;white-space:pre;z-index:5;transform:scaleX(0.9450);transform-origin:0 0;width:66px;overflow:hidden;">MirrorMargins</div><svg style="position:absolute;left:106px;top:425px;z-index:4;" width="11" height="11" viewBox="0 0 11 11"><rect x=".5" y=".5" width="10" height="10" fill="#fff" stroke="#777"/></svg><div style="position:absolute;left:119.5px;top:425.04px;font:normal 11px 'Liberation Sans', sans-serif;line-height:12.29px;color:#00007f;white-space:pre;z-index:5;transform:scaleX(0.9450);transform-origin:0 0;">False</div><div style="position:absolute;left:28px;top:454px;width:197px;height:1px;background:#ececec;z-index:2;"></div><div style="position:absolute;left:103px;top:438px;width:1px;height:16px;background:#e4e4e4;z-index:2;"></div><div style="position:absolute;left:41px;top:441.04px;font:bold 11px 'Liberation Sans', sans-serif;line-height:12.29px;color:#000;white-space:pre;z-index:5;transform:scaleX(0.9450);transform-origin:0 0;width:66px;overflow:hidden;">Name</div><div style="position:absolute;left:106px;top:441.04px;font:bold 11px 'Liberation Sans', sans-serif;line-height:12.29px;color:#00007f;white-space:pre;z-index:5;transform:scaleX(0.9450);transform-origin:0 0;">Page1</div><div style="position:absolute;left:28px;top:470px;width:197px;height:1px;background:#ececec;z-index:2;"></div><div style="position:absolute;left:103px;top:454px;width:1px;height:16px;background:#e4e4e4;z-index:2;"></div><div style="position:absolute;left:41px;top:457.04px;font:normal 11px 'Liberation Sans', sans-serif;line-height:12.29px;color:#000;white-space:pre;z-index:5;transform:scaleX(0.9450);transform-origin:0 0;width:66px;overflow:hidden;">Orientation</div><div style="position:absolute;left:106px;top:457.04px;font:normal 11px 'Liberation Sans', sans-serif;line-height:12.29px;color:#00007f;white-space:pre;z-index:5;transform:scaleX(0.9450);transform-origin:0 0;">poPortrait</div><div style="position:absolute;left:28px;top:486px;width:197px;height:1px;background:#ececec;z-index:2;"></div><div style="position:absolute;left:103px;top:470px;width:1px;height:16px;background:#e4e4e4;z-index:2;"></div><div style="position:absolute;left:41px;top:473.04px;font:normal 11px 'Liberation Sans', sans-serif;line-height:12.29px;color:#000;white-space:pre;z-index:5;transform:scaleX(0.9450);transform-origin:0 0;width:66px;overflow:hidden;">OutlineText</div><div style="position:absolute;left:28px;top:502px;width:197px;height:1px;background:#ececec;z-index:2;"></div><div style="position:absolute;left:103px;top:486px;width:1px;height:16px;background:#e4e4e4;z-index:2;"></div><div style="position:absolute;left:41px;top:489.04px;font:normal 11px 'Liberation Sans', sans-serif;line-height:12.29px;color:#000;white-space:pre;z-index:5;transform:scaleX(0.9450);transform-origin:0 0;width:66px;overflow:hidden;">PageCount</div><div style="position:absolute;left:106px;top:489.04px;font:normal 11px 'Liberation Sans', sans-serif;line-height:12.29px;color:#00007f;white-space:pre;z-index:5;transform:scaleX(0.9450);transform-origin:0 0;">1</div><div style="position:absolute;left:28px;top:518px;width:197px;height:1px;background:#ececec;z-index:2;"></div><div style="position:absolute;left:103px;top:502px;width:1px;height:16px;background:#e4e4e4;z-index:2;"></div><div style="position:absolute;left:41px;top:505.04px;font:normal 11px 'Liberation Sans', sans-serif;line-height:12.29px;color:#000;white-space:pre;z-index:5;transform:scaleX(0.9450);transform-origin:0 0;width:66px;overflow:hidden;">PaperHeight</div><div style="position:absolute;left:106px;top:505.04px;font:normal 11px 'Liberation Sans', sans-serif;line-height:12.29px;color:#00007f;white-space:pre;z-index:5;transform:scaleX(0.9450);transform-origin:0 0;">29,70</div><div style="position:absolute;left:28px;top:534px;width:197px;height:1px;background:#ececec;z-index:2;"></div><div style="position:absolute;left:103px;top:518px;width:1px;height:16px;background:#e4e4e4;z-index:2;"></div><div style="position:absolute;left:41px;top:521.04px;font:normal 11px 'Liberation Sans', sans-serif;line-height:12.29px;color:#000;white-space:pre;z-index:5;transform:scaleX(0.9450);transform-origin:0 0;width:66px;overflow:hidden;">PaperSize</div><div style="position:absolute;left:106px;top:521.04px;font:normal 11px 'Liberation Sans', sans-serif;line-height:12.29px;color:#00007f;white-space:pre;z-index:5;transform:scaleX(0.9450);transform-origin:0 0;">A4</div><div style="position:absolute;left:28px;top:550px;width:197px;height:1px;background:#ececec;z-index:2;"></div><div style="position:absolute;left:103px;top:534px;width:1px;height:16px;background:#e4e4e4;z-index:2;"></div><div style="position:absolute;left:41px;top:537.04px;font:normal 11px 'Liberation Sans', sans-serif;line-height:12.29px;color:#000;white-space:pre;z-index:5;transform:scaleX(0.9450);transform-origin:0 0;width:66px;overflow:hidden;">PaperWidth</div><div style="position:absolute;left:106px;top:537.04px;font:normal 11px 'Liberation Sans', sans-serif;line-height:12.29px;color:#00007f;white-space:pre;z-index:5;transform:scaleX(0.9450);transform-origin:0 0;">21</div><div style="position:absolute;left:28px;top:566px;width:197px;height:1px;background:#ececec;z-index:2;"></div><div style="position:absolute;left:103px;top:550px;width:1px;height:16px;background:#e4e4e4;z-index:2;"></div><div style="position:absolute;left:41px;top:553.04px;font:normal 11px 'Liberation Sans', sans-serif;line-height:12.29px;color:#000;white-space:pre;z-index:5;transform:scaleX(0.9450);transform-origin:0 0;width:66px;overflow:hidden;">PrintIfEmpty</div><svg style="position:absolute;left:106px;top:553px;z-index:4;" width="11" height="11" viewBox="0 0 11 11"><rect x=".5" y=".5" width="10" height="10" fill="#fff" stroke="#777"/><path d="M2.5 5.5L4.5 8L8.5 2.5" fill="none" stroke="#000" stroke-width="1.6"/></svg><div style="position:absolute;left:119.5px;top:553.04px;font:normal 11px 'Liberation Sans', sans-serif;line-height:12.29px;color:#00007f;white-space:pre;z-index:5;transform:scaleX(0.9450);transform-origin:0 0;">True</div><div style="position:absolute;left:28px;top:582px;width:197px;height:1px;background:#ececec;z-index:2;"></div><div style="position:absolute;left:103px;top:566px;width:1px;height:16px;background:#e4e4e4;z-index:2;"></div><div style="position:absolute;left:41px;top:569.04px;font:normal 11px 'Liberation Sans', sans-serif;line-height:12.29px;color:#000;white-space:pre;z-index:5;transform:scaleX(0.9450);transform-origin:0 0;width:66px;overflow:hidden;">PrintOnPreviousPage</div><svg style="position:absolute;left:106px;top:569px;z-index:4;" width="11" height="11" viewBox="0 0 11 11"><rect x=".5" y=".5" width="10" height="10" fill="#fff" stroke="#777"/></svg><div style="position:absolute;left:119.5px;top:569.04px;font:normal 11px 'Liberation Sans', sans-serif;line-height:12.29px;color:#00007f;white-space:pre;z-index:5;transform:scaleX(0.9450);transform-origin:0 0;">False</div><div style="position:absolute;left:28px;top:598px;width:197px;height:1px;background:#ececec;z-index:2;"></div><div style="position:absolute;left:103px;top:582px;width:1px;height:16px;background:#e4e4e4;z-index:2;"></div><div style="position:absolute;left:41px;top:585.04px;font:normal 11px 'Liberation Sans', sans-serif;line-height:12.29px;color:#000;white-space:pre;z-index:5;transform:scaleX(0.9450);transform-origin:0 0;width:66px;overflow:hidden;">ResetPageNumbers</div><svg style="position:absolute;left:106px;top:585px;z-index:4;" width="11" height="11" viewBox="0 0 11 11"><rect x=".5" y=".5" width="10" height="10" fill="#fff" stroke="#777"/></svg><div style="position:absolute;left:119.5px;top:585.04px;font:normal 11px 'Liberation Sans', sans-serif;line-height:12.29px;color:#00007f;white-space:pre;z-index:5;transform:scaleX(0.9450);transform-origin:0 0;">False</div><div style="position:absolute;left:28px;top:614px;width:197px;height:1px;background:#ececec;z-index:2;"></div><div style="position:absolute;left:103px;top:598px;width:1px;height:16px;background:#e4e4e4;z-index:2;"></div><div style="position:absolute;left:41px;top:601.04px;font:normal 11px 'Liberation Sans', sans-serif;line-height:12.29px;color:#000;white-space:pre;z-index:5;transform:scaleX(0.9450);transform-origin:0 0;width:66px;overflow:hidden;">RightMargin</div><div style="position:absolute;left:106px;top:601.04px;font:normal 11px 'Liberation Sans', sans-serif;line-height:12.29px;color:#00007f;white-space:pre;z-index:5;transform:scaleX(0.9450);transform-origin:0 0;">1</div><div style="position:absolute;left:28px;top:630px;width:197px;height:1px;background:#ececec;z-index:2;"></div><div style="position:absolute;left:103px;top:614px;width:1px;height:16px;background:#e4e4e4;z-index:2;"></div><div style="position:absolute;left:41px;top:617.04px;font:normal 11px 'Liberation Sans', sans-serif;line-height:12.29px;color:#000;white-space:pre;z-index:5;transform:scaleX(0.9450);transform-origin:0 0;width:66px;overflow:hidden;">ShowTitleOnPreviousPage</div><svg style="position:absolute;left:106px;top:617px;z-index:4;" width="11" height="11" viewBox="0 0 11 11"><rect x=".5" y=".5" width="10" height="10" fill="#fff" stroke="#777"/><path d="M2.5 5.5L4.5 8L8.5 2.5" fill="none" stroke="#000" stroke-width="1.6"/></svg><div style="position:absolute;left:119.5px;top:617.04px;font:normal 11px 'Liberation Sans', sans-serif;line-height:12.29px;color:#00007f;white-space:pre;z-index:5;transform:scaleX(0.9450);transform-origin:0 0;">True</div><div style="position:absolute;left:28px;top:646px;width:197px;height:1px;background:#ececec;z-index:2;"></div><div style="position:absolute;left:103px;top:630px;width:1px;height:16px;background:#e4e4e4;z-index:2;"></div><div style="position:absolute;left:41px;top:633.04px;font:normal 11px 'Liberation Sans', sans-serif;line-height:12.29px;color:#000;white-space:pre;z-index:5;transform:scaleX(0.9450);transform-origin:0 0;width:66px;overflow:hidden;">Tag</div><div style="position:absolute;left:106px;top:633.04px;font:normal 11px 'Liberation Sans', sans-serif;line-height:12.29px;color:#00007f;white-space:pre;z-index:5;transform:scaleX(0.9450);transform-origin:0 0;">0</div><div style="position:absolute;left:28px;top:662px;width:197px;height:1px;background:#ececec;z-index:2;"></div><div style="position:absolute;left:103px;top:646px;width:1px;height:16px;background:#e4e4e4;z-index:2;"></div><div style="position:absolute;left:41px;top:649.04px;font:normal 11px 'Liberation Sans', sans-serif;line-height:12.29px;color:#000;white-space:pre;z-index:5;transform:scaleX(0.9450);transform-origin:0 0;width:66px;overflow:hidden;">TitleBeforeHeader</div><svg style="position:absolute;left:106px;top:649px;z-index:4;" width="11" height="11" viewBox="0 0 11 11"><rect x=".5" y=".5" width="10" height="10" fill="#fff" stroke="#777"/><path d="M2.5 5.5L4.5 8L8.5 2.5" fill="none" stroke="#000" stroke-width="1.6"/></svg><div style="position:absolute;left:119.5px;top:649.04px;font:normal 11px 'Liberation Sans', sans-serif;line-height:12.29px;color:#00007f;white-space:pre;z-index:5;transform:scaleX(0.9450);transform-origin:0 0;">True</div><div style="position:absolute;left:28px;top:678px;width:197px;height:1px;background:#ececec;z-index:2;"></div><div style="position:absolute;left:103px;top:662px;width:1px;height:16px;background:#e4e4e4;z-index:2;"></div><div style="position:absolute;left:41px;top:665.04px;font:normal 11px 'Liberation Sans', sans-serif;line-height:12.29px;color:#000;white-space:pre;z-index:5;transform:scaleX(0.9450);transform-origin:0 0;width:66px;overflow:hidden;">TopMargin</div><div style="position:absolute;left:106px;top:665.04px;font:normal 11px 'Liberation Sans', sans-serif;line-height:12.29px;color:#00007f;white-space:pre;z-index:5;transform:scaleX(0.9450);transform-origin:0 0;">1</div><div style="position:absolute;left:28px;top:694px;width:197px;height:1px;background:#ececec;z-index:2;"></div><div style="position:absolute;left:103px;top:678px;width:1px;height:16px;background:#e4e4e4;z-index:2;"></div><div style="position:absolute;left:41px;top:681.04px;font:normal 11px 'Liberation Sans', sans-serif;line-height:12.29px;color:#000;white-space:pre;z-index:5;transform:scaleX(0.9450);transform-origin:0 0;width:66px;overflow:hidden;">Visible</div><svg style="position:absolute;left:106px;top:681px;z-index:4;" width="11" height="11" viewBox="0 0 11 11"><rect x=".5" y=".5" width="10" height="10" fill="#fff" stroke="#777"/><path d="M2.5 5.5L4.5 8L8.5 2.5" fill="none" stroke="#000" stroke-width="1.6"/></svg><div style="position:absolute;left:119.5px;top:681.04px;font:normal 11px 'Liberation Sans', sans-serif;line-height:12.29px;color:#00007f;white-space:pre;z-index:5;transform:scaleX(0.9450);transform-origin:0 0;">True</div><svg style="position:absolute;left:227px;top:557px;z-index:2;" width="5" height="28" viewBox="0 0 5 28"><rect x="0" y="0" width="5" height="28" fill="#d8d8c8"/><rect x="1.5" y="2.0" width="2" height="1.5" fill="#8a8a7a"/><rect x="1.5" y="5.2" width="2" height="1.5" fill="#8a8a7a"/><rect x="1.5" y="8.4" width="2" height="1.5" fill="#8a8a7a"/><rect x="1.5" y="11.600000000000001" width="2" height="1.5" fill="#8a8a7a"/><rect x="1.5" y="14.8" width="2" height="1.5" fill="#8a8a7a"/><rect x="1.5" y="18.0" width="2" height="1.5" fill="#8a8a7a"/><rect x="1.5" y="21.200000000000003" width="2" height="1.5" fill="#8a8a7a"/><rect x="1.5" y="24.400000000000002" width="2" height="1.5" fill="#8a8a7a"/></svg><div style="position:absolute;left:27px;top:956px;width:199px;height:64px;background:#ffffff;border:1px solid #a6a6a6;box-sizing:border-box;z-index:1;"></div><div style="position:absolute;left:29px;top:959.14px;font:bold 12px 'Liberation Sans', sans-serif;line-height:13.40px;color:#000;white-space:pre;z-index:5;transform:scaleX(0.8937);transform-origin:0 0;">BackPicture</div><div style="position:absolute;left:29px;top:975.14px;font:normal 12px 'Liberation Sans', sans-serif;line-height:13.40px;color:#000;white-space:pre;z-index:5;transform:scaleX(0.8850);transform-origin:0 0;">Figura de fundo da página</div><div style="position:absolute;left:0px;top:1021px;width:1920px;height:19px;background:#f0f0f0;z-index:0;"></div><div style="position:absolute;left:0px;top:1021px;width:1920px;height:1px;background:#dadada;z-index:1;"></div><div style="position:absolute;left:2px;top:1026.04px;font:bold 11px 'Liberation Sans', sans-serif;line-height:12.29px;color:#000;white-space:pre;z-index:5;transform:scaleX(0.9036);transform-origin:0 0;">Centímetros</div><div style="position:absolute;left:74px;top:1024px;width:1px;height:15px;background:#d0d0d0;z-index:2;"></div><svg style="position:absolute;left:80px;top:1024px;z-index:3;" width="16" height="15" viewBox="0 0 16 15"><path d="M2.5 0V13M0 2.5H13" stroke="#555" stroke-dasharray="1 1"/><rect x="6" y="7" width="7" height="7" fill="#8ab8e8" stroke="#4a7fd0" stroke-width=".6"/></svg><div style="position:absolute;left:98.3px;top:1025.14px;font:normal 12px 'Liberation Sans', sans-serif;line-height:13.40px;color:#000;white-space:pre;z-index:5;transform:scaleX(0.9407);transform-origin:0 0;">4,54; 15,27</div><div style="position:absolute;left:304px;top:1024px;width:1px;height:15px;background:#d0d0d0;z-index:2;"></div><div style="position:absolute;left:308.3px;top:1026.04px;font:bold 11px 'Liberation Sans', sans-serif;line-height:12.29px;color:#000;white-space:pre;z-index:5;transform:scaleX(0.9376);transform-origin:0 0;">Page1</div><div style="position:absolute;left:318px;top:124px;width:1384px;height:14px;background:#ffffff;z-index:1;"></div><svg style="position:absolute;left:318px;top:124px;z-index:2;" width="1384" height="14" viewBox="0 0 1384 14"><rect x="5" y="5" width="1" height="2" fill="#000"/><rect x="11" y="5" width="1" height="2" fill="#000"/><rect x="16" y="5" width="1" height="2" fill="#000"/><rect x="21" y="5" width="1" height="2" fill="#000"/><rect x="27" y="4" width="1" height="4" fill="#000"/><rect x="32" y="5" width="1" height="2" fill="#000"/><rect x="37" y="5" width="1" height="2" fill="#000"/><rect x="43" y="5" width="1" height="2" fill="#000"/><rect x="48" y="5" width="1" height="2" fill="#000"/><rect x="58" y="5" width="1" height="2" fill="#000"/><rect x="64" y="5" width="1" height="2" fill="#000"/><rect x="69" y="5" width="1" height="2" fill="#000"/><rect x="74" y="5" width="1" height="2" fill="#000"/><rect x="80" y="4" width="1" height="4" fill="#000"/><rect x="85" y="5" width="1" height="2" fill="#000"/><rect x="90" y="5" width="1" height="2" fill="#000"/><rect x="95" y="5" width="1" height="2" fill="#000"/><rect x="101" y="5" width="1" height="2" fill="#000"/><rect x="111" y="5" width="1" height="2" fill="#000"/><rect x="117" y="5" width="1" height="2" fill="#000"/><rect x="122" y="5" width="1" height="2" fill="#000"/><rect x="127" y="5" width="1" height="2" fill="#000"/><rect x="132" y="4" width="1" height="4" fill="#000"/><rect x="138" y="5" width="1" height="2" fill="#000"/><rect x="143" y="5" width="1" height="2" fill="#000"/><rect x="148" y="5" width="1" height="2" fill="#000"/><rect x="154" y="5" width="1" height="2" fill="#000"/><rect x="164" y="5" width="1" height="2" fill="#000"/><rect x="170" y="5" width="1" height="2" fill="#000"/><rect x="175" y="5" width="1" height="2" fill="#000"/><rect x="180" y="5" width="1" height="2" fill="#000"/><rect x="185" y="4" width="1" height="4" fill="#000"/><rect x="191" y="5" width="1" height="2" fill="#000"/><rect x="196" y="5" width="1" height="2" fill="#000"/><rect x="201" y="5" width="1" height="2" fill="#000"/><rect x="207" y="5" width="1" height="2" fill="#000"/><rect x="217" y="5" width="1" height="2" fill="#000"/><rect x="222" y="5" width="1" height="2" fill="#000"/><rect x="228" y="5" width="1" height="2" fill="#000"/><rect x="233" y="5" width="1" height="2" fill="#000"/><rect x="238" y="4" width="1" height="4" fill="#000"/><rect x="244" y="5" width="1" height="2" fill="#000"/><rect x="249" y="5" width="1" height="2" fill="#000"/><rect x="254" y="5" width="1" height="2" fill="#000"/><rect x="259" y="5" width="1" height="2" fill="#000"/><rect x="270" y="5" width="1" height="2" fill="#000"/><rect x="275" y="5" width="1" height="2" fill="#000"/><rect x="281" y="5" width="1" height="2" fill="#000"/><rect x="286" y="5" width="1" height="2" fill="#000"/><rect x="291" y="4" width="1" height="4" fill="#000"/><rect x="297" y="5" width="1" height="2" fill="#000"/><rect x="302" y="5" width="1" height="2" fill="#000"/><rect x="307" y="5" width="1" height="2" fill="#000"/><rect x="312" y="5" width="1" height="2" fill="#000"/><rect x="323" y="5" width="1" height="2" fill="#000"/><rect x="328" y="5" width="1" height="2" fill="#000"/><rect x="334" y="5" width="1" height="2" fill="#000"/><rect x="339" y="5" width="1" height="2" fill="#000"/><rect x="344" y="4" width="1" height="4" fill="#000"/><rect x="349" y="5" width="1" height="2" fill="#000"/><rect x="355" y="5" width="1" height="2" fill="#000"/><rect x="360" y="5" width="1" height="2" fill="#000"/><rect x="365" y="5" width="1" height="2" fill="#000"/><rect x="376" y="5" width="1" height="2" fill="#000"/><rect x="381" y="5" width="1" height="2" fill="#000"/><rect x="386" y="5" width="1" height="2" fill="#000"/><rect x="392" y="5" width="1" height="2" fill="#000"/><rect x="397" y="4" width="1" height="4" fill="#000"/><rect x="402" y="5" width="1" height="2" fill="#000"/><rect x="408" y="5" width="1" height="2" fill="#000"/><rect x="413" y="5" width="1" height="2" fill="#000"/><rect x="418" y="5" width="1" height="2" fill="#000"/><rect x="429" y="5" width="1" height="2" fill="#000"/><rect x="434" y="5" width="1" height="2" fill="#000"/><rect x="439" y="5" width="1" height="2" fill="#000"/><rect x="445" y="5" width="1" height="2" fill="#000"/><rect x="450" y="4" width="1" height="4" fill="#000"/><rect x="455" y="5" width="1" height="2" fill="#000"/><rect x="461" y="5" width="1" height="2" fill="#000"/><rect x="466" y="5" width="1" height="2" fill="#000"/><rect x="471" y="5" width="1" height="2" fill="#000"/><rect x="482" y="5" width="1" height="2" fill="#000"/><rect x="487" y="5" width="1" height="2" fill="#000"/><rect x="492" y="5" width="1" height="2" fill="#000"/><rect x="498" y="5" width="1" height="2" fill="#000"/><rect x="503" y="4" width="1" height="4" fill="#000"/><rect x="508" y="5" width="1" height="2" fill="#000"/><rect x="513" y="5" width="1" height="2" fill="#000"/><rect x="519" y="5" width="1" height="2" fill="#000"/><rect x="524" y="5" width="1" height="2" fill="#000"/><rect x="535" y="5" width="1" height="2" fill="#000"/><rect x="540" y="5" width="1" height="2" fill="#000"/><rect x="545" y="5" width="1" height="2" fill="#000"/><rect x="551" y="5" width="1" height="2" fill="#000"/><rect x="556" y="4" width="1" height="4" fill="#000"/><rect x="561" y="5" width="1" height="2" fill="#000"/><rect x="566" y="5" width="1" height="2" fill="#000"/><rect x="572" y="5" width="1" height="2" fill="#000"/><rect x="577" y="5" width="1" height="2" fill="#000"/><rect x="588" y="5" width="1" height="2" fill="#000"/><rect x="593" y="5" width="1" height="2" fill="#000"/><rect x="598" y="5" width="1" height="2" fill="#000"/><rect x="603" y="5" width="1" height="2" fill="#000"/><rect x="609" y="4" width="1" height="4" fill="#000"/><rect x="614" y="5" width="1" height="2" fill="#000"/><rect x="619" y="5" width="1" height="2" fill="#000"/><rect x="625" y="5" width="1" height="2" fill="#000"/><rect x="630" y="5" width="1" height="2" fill="#000"/><rect x="640" y="5" width="1" height="2" fill="#000"/><rect x="646" y="5" width="1" height="2" fill="#000"/><rect x="651" y="5" width="1" height="2" fill="#000"/><rect x="656" y="5" width="1" height="2" fill="#000"/><rect x="662" y="4" width="1" height="4" fill="#000"/><rect x="667" y="5" width="1" height="2" fill="#000"/><rect x="672" y="5" width="1" height="2" fill="#000"/><rect x="678" y="5" width="1" height="2" fill="#000"/><rect x="683" y="5" width="1" height="2" fill="#000"/><rect x="693" y="5" width="1" height="2" fill="#000"/><rect x="699" y="5" width="1" height="2" fill="#000"/><rect x="704" y="5" width="1" height="2" fill="#000"/><rect x="709" y="5" width="1" height="2" fill="#000"/><rect x="715" y="4" width="1" height="4" fill="#000"/><rect x="720" y="5" width="1" height="2" fill="#000"/><rect x="725" y="5" width="1" height="2" fill="#000"/><rect x="730" y="5" width="1" height="2" fill="#000"/><rect x="736" y="5" width="1" height="2" fill="#000"/><rect x="746" y="5" width="1" height="2" fill="#000"/><rect x="752" y="5" width="1" height="2" fill="#000"/><rect x="757" y="5" width="1" height="2" fill="#000"/><rect x="762" y="5" width="1" height="2" fill="#000"/><rect x="767" y="4" width="1" height="4" fill="#000"/><rect x="773" y="5" width="1" height="2" fill="#000"/><rect x="778" y="5" width="1" height="2" fill="#000"/><rect x="783" y="5" width="1" height="2" fill="#000"/><rect x="789" y="5" width="1" height="2" fill="#000"/><rect x="799" y="5" width="1" height="2" fill="#000"/><rect x="805" y="5" width="1" height="2" fill="#000"/><rect x="810" y="5" width="1" height="2" fill="#000"/><rect x="815" y="5" width="1" height="2" fill="#000"/><rect x="820" y="4" width="1" height="4" fill="#000"/><rect x="826" y="5" width="1" height="2" fill="#000"/><rect x="831" y="5" width="1" height="2" fill="#000"/><rect x="836" y="5" width="1" height="2" fill="#000"/><rect x="842" y="5" width="1" height="2" fill="#000"/><rect x="852" y="5" width="1" height="2" fill="#000"/><rect x="857" y="5" width="1" height="2" fill="#000"/><rect x="863" y="5" width="1" height="2" fill="#000"/><rect x="868" y="5" width="1" height="2" fill="#000"/><rect x="873" y="4" width="1" height="4" fill="#000"/><rect x="879" y="5" width="1" height="2" fill="#000"/><rect x="884" y="5" width="1" height="2" fill="#000"/><rect x="889" y="5" width="1" height="2" fill="#000"/><rect x="894" y="5" width="1" height="2" fill="#000"/><rect x="905" y="5" width="1" height="2" fill="#000"/><rect x="910" y="5" width="1" height="2" fill="#000"/><rect x="916" y="5" width="1" height="2" fill="#000"/><rect x="921" y="5" width="1" height="2" fill="#000"/><rect x="926" y="4" width="1" height="4" fill="#000"/><rect x="932" y="5" width="1" height="2" fill="#000"/><rect x="937" y="5" width="1" height="2" fill="#000"/><rect x="942" y="5" width="1" height="2" fill="#000"/><rect x="947" y="5" width="1" height="2" fill="#000"/><rect x="958" y="5" width="1" height="2" fill="#000"/><rect x="963" y="5" width="1" height="2" fill="#000"/><rect x="969" y="5" width="1" height="2" fill="#000"/><rect x="974" y="5" width="1" height="2" fill="#000"/><rect x="979" y="4" width="1" height="4" fill="#000"/><rect x="984" y="5" width="1" height="2" fill="#000"/><rect x="990" y="5" width="1" height="2" fill="#000"/><rect x="995" y="5" width="1" height="2" fill="#000"/><rect x="1000" y="5" width="1" height="2" fill="#000"/><rect x="1011" y="5" width="1" height="2" fill="#000"/><rect x="1016" y="5" width="1" height="2" fill="#000"/><rect x="1021" y="5" width="1" height="2" fill="#000"/><rect x="1027" y="5" width="1" height="2" fill="#000"/><rect x="1032" y="4" width="1" height="4" fill="#000"/><rect x="1037" y="5" width="1" height="2" fill="#000"/><rect x="1043" y="5" width="1" height="2" fill="#000"/><rect x="1048" y="5" width="1" height="2" fill="#000"/><rect x="1053" y="5" width="1" height="2" fill="#000"/><rect x="1064" y="5" width="1" height="2" fill="#000"/><rect x="1069" y="5" width="1" height="2" fill="#000"/><rect x="1074" y="5" width="1" height="2" fill="#000"/><rect x="1080" y="5" width="1" height="2" fill="#000"/><rect x="1085" y="4" width="1" height="4" fill="#000"/><rect x="1090" y="5" width="1" height="2" fill="#000"/><rect x="1096" y="5" width="1" height="2" fill="#000"/><rect x="1101" y="5" width="1" height="2" fill="#000"/><rect x="1106" y="5" width="1" height="2" fill="#000"/><rect x="1117" y="5" width="1" height="2" fill="#000"/><rect x="1122" y="5" width="1" height="2" fill="#000"/><rect x="1127" y="5" width="1" height="2" fill="#000"/><rect x="1133" y="5" width="1" height="2" fill="#000"/><rect x="1138" y="4" width="1" height="4" fill="#000"/><rect x="1143" y="5" width="1" height="2" fill="#000"/><rect x="1148" y="5" width="1" height="2" fill="#000"/><rect x="1154" y="5" width="1" height="2" fill="#000"/><rect x="1159" y="5" width="1" height="2" fill="#000"/><rect x="1170" y="5" width="1" height="2" fill="#000"/><rect x="1175" y="5" width="1" height="2" fill="#000"/><rect x="1180" y="5" width="1" height="2" fill="#000"/><rect x="1186" y="5" width="1" height="2" fill="#000"/><rect x="1191" y="4" width="1" height="4" fill="#000"/><rect x="1196" y="5" width="1" height="2" fill="#000"/><rect x="1201" y="5" width="1" height="2" fill="#000"/><rect x="1207" y="5" width="1" height="2" fill="#000"/><rect x="1212" y="5" width="1" height="2" fill="#000"/><rect x="1223" y="5" width="1" height="2" fill="#000"/><rect x="1228" y="5" width="1" height="2" fill="#000"/><rect x="1233" y="5" width="1" height="2" fill="#000"/><rect x="1238" y="5" width="1" height="2" fill="#000"/><rect x="1244" y="4" width="1" height="4" fill="#000"/><rect x="1249" y="5" width="1" height="2" fill="#000"/><rect x="1254" y="5" width="1" height="2" fill="#000"/><rect x="1260" y="5" width="1" height="2" fill="#000"/><rect x="1265" y="5" width="1" height="2" fill="#000"/><rect x="1275" y="5" width="1" height="2" fill="#000"/><rect x="1281" y="5" width="1" height="2" fill="#000"/><rect x="1286" y="5" width="1" height="2" fill="#000"/><rect x="1291" y="5" width="1" height="2" fill="#000"/><rect x="1297" y="4" width="1" height="4" fill="#000"/><rect x="1302" y="5" width="1" height="2" fill="#000"/><rect x="1307" y="5" width="1" height="2" fill="#000"/><rect x="1313" y="5" width="1" height="2" fill="#000"/><rect x="1318" y="5" width="1" height="2" fill="#000"/><rect x="1328" y="5" width="1" height="2" fill="#000"/><rect x="1334" y="5" width="1" height="2" fill="#000"/><rect x="1339" y="5" width="1" height="2" fill="#000"/><rect x="1344" y="5" width="1" height="2" fill="#000"/><rect x="1350" y="4" width="1" height="4" fill="#000"/><rect x="1355" y="5" width="1" height="2" fill="#000"/><rect x="1360" y="5" width="1" height="2" fill="#000"/><rect x="1365" y="5" width="1" height="2" fill="#000"/><rect x="1371" y="5" width="1" height="2" fill="#000"/><rect x="1381" y="5" width="1" height="2" fill="#000"/></svg><div style="position:absolute;left:368.51699999999994px;top:126.40px;font:normal 9.5px 'Liberation Sans', sans-serif;line-height:10.61px;color:#000;white-space:pre;z-index:4;">1</div><div style="position:absolute;left:421.43399999999997px;top:126.40px;font:normal 9.5px 'Liberation Sans', sans-serif;line-height:10.61px;color:#000;white-space:pre;z-index:4;">2</div><div style="position:absolute;left:474.35099999999994px;top:126.40px;font:normal 9.5px 'Liberation Sans', sans-serif;line-height:10.61px;color:#000;white-space:pre;z-index:4;">3</div><div style="position:absolute;left:527.2679999999999px;top:126.40px;font:normal 9.5px 'Liberation Sans', sans-serif;line-height:10.61px;color:#000;white-space:pre;z-index:4;">4</div><div style="position:absolute;left:580.185px;top:126.40px;font:normal 9.5px 'Liberation Sans', sans-serif;line-height:10.61px;color:#000;white-space:pre;z-index:4;">5</div><div style="position:absolute;left:633.102px;top:126.40px;font:normal 9.5px 'Liberation Sans', sans-serif;line-height:10.61px;color:#000;white-space:pre;z-index:4;">6</div><div style="position:absolute;left:686.0189999999999px;top:126.40px;font:normal 9.5px 'Liberation Sans', sans-serif;line-height:10.61px;color:#000;white-space:pre;z-index:4;">7</div><div style="position:absolute;left:738.9359999999999px;top:126.40px;font:normal 9.5px 'Liberation Sans', sans-serif;line-height:10.61px;color:#000;white-space:pre;z-index:4;">8</div><div style="position:absolute;left:791.853px;top:126.40px;font:normal 9.5px 'Liberation Sans', sans-serif;line-height:10.61px;color:#000;white-space:pre;z-index:4;">9</div><div style="position:absolute;left:842.1699999999998px;top:126.40px;font:normal 9.5px 'Liberation Sans', sans-serif;line-height:10.61px;color:#000;white-space:pre;z-index:4;">10</div><div style="position:absolute;left:895.087px;top:126.40px;font:normal 9.5px 'Liberation Sans', sans-serif;line-height:10.61px;color:#000;white-space:pre;z-index:4;">11</div><div style="position:absolute;left:948.0039999999999px;top:126.40px;font:normal 9.5px 'Liberation Sans', sans-serif;line-height:10.61px;color:#000;white-space:pre;z-index:4;">12</div><div style="position:absolute;left:1000.9209999999998px;top:126.40px;font:normal 9.5px 'Liberation Sans', sans-serif;line-height:10.61px;color:#000;white-space:pre;z-index:4;">13</div><div style="position:absolute;left:1053.838px;top:126.40px;font:normal 9.5px 'Liberation Sans', sans-serif;line-height:10.61px;color:#000;white-space:pre;z-index:4;">14</div><div style="position:absolute;left:1106.7549999999999px;top:126.40px;font:normal 9.5px 'Liberation Sans', sans-serif;line-height:10.61px;color:#000;white-space:pre;z-index:4;">15</div><div style="position:absolute;left:1159.6719999999998px;top:126.40px;font:normal 9.5px 'Liberation Sans', sans-serif;line-height:10.61px;color:#000;white-space:pre;z-index:4;">16</div><div style="position:absolute;left:1212.589px;top:126.40px;font:normal 9.5px 'Liberation Sans', sans-serif;line-height:10.61px;color:#000;white-space:pre;z-index:4;">17</div><div style="position:absolute;left:1265.5059999999999px;top:126.40px;font:normal 9.5px 'Liberation Sans', sans-serif;line-height:10.61px;color:#000;white-space:pre;z-index:4;">18</div><div style="position:absolute;left:1318.4229999999998px;top:126.40px;font:normal 9.5px 'Liberation Sans', sans-serif;line-height:10.61px;color:#000;white-space:pre;z-index:4;">19</div><div style="position:absolute;left:1371.34px;top:126.40px;font:normal 9.5px 'Liberation Sans', sans-serif;line-height:10.61px;color:#000;white-space:pre;z-index:4;">20</div><div style="position:absolute;left:1424.2569999999998px;top:126.40px;font:normal 9.5px 'Liberation Sans', sans-serif;line-height:10.61px;color:#000;white-space:pre;z-index:4;">21</div><div style="position:absolute;left:1477.174px;top:126.40px;font:normal 9.5px 'Liberation Sans', sans-serif;line-height:10.61px;color:#000;white-space:pre;z-index:4;">22</div><div style="position:absolute;left:1530.091px;top:126.40px;font:normal 9.5px 'Liberation Sans', sans-serif;line-height:10.61px;color:#000;white-space:pre;z-index:4;">23</div><div style="position:absolute;left:1583.0079999999998px;top:126.40px;font:normal 9.5px 'Liberation Sans', sans-serif;line-height:10.61px;color:#000;white-space:pre;z-index:4;">24</div><div style="position:absolute;left:1635.925px;top:126.40px;font:normal 9.5px 'Liberation Sans', sans-serif;line-height:10.61px;color:#000;white-space:pre;z-index:4;">25</div><div style="position:absolute;left:1688.8419999999999px;top:126.40px;font:normal 9.5px 'Liberation Sans', sans-serif;line-height:10.61px;color:#000;white-space:pre;z-index:4;">26</div><div style="position:absolute;left:235px;top:208px;width:13px;height:813px;background:#ffffff;z-index:1;"></div><svg style="position:absolute;left:235px;top:208px;z-index:2;" width="14" height="813" viewBox="0 0 14 813"><rect x="5" y="5" width="2" height="1" fill="#000"/><rect x="5" y="11" width="2" height="1" fill="#000"/><rect x="5" y="16" width="2" height="1" fill="#000"/><rect x="5" y="21" width="2" height="1" fill="#000"/><rect x="4" y="26" width="4" height="1" fill="#000"/><rect x="5" y="32" width="2" height="1" fill="#000"/><rect x="5" y="37" width="2" height="1" fill="#000"/><rect x="5" y="42" width="2" height="1" fill="#000"/><rect x="5" y="48" width="2" height="1" fill="#000"/><rect x="5" y="58" width="2" height="1" fill="#000"/><rect x="5" y="64" width="2" height="1" fill="#000"/><rect x="5" y="69" width="2" height="1" fill="#000"/><rect x="5" y="74" width="2" height="1" fill="#000"/><rect x="4" y="79" width="4" height="1" fill="#000"/><rect x="5" y="85" width="2" height="1" fill="#000"/><rect x="5" y="90" width="2" height="1" fill="#000"/><rect x="5" y="95" width="2" height="1" fill="#000"/><rect x="5" y="101" width="2" height="1" fill="#000"/><rect x="5" y="111" width="2" height="1" fill="#000"/><rect x="5" y="116" width="2" height="1" fill="#000"/><rect x="5" y="122" width="2" height="1" fill="#000"/><rect x="5" y="127" width="2" height="1" fill="#000"/><rect x="4" y="132" width="4" height="1" fill="#000"/><rect x="5" y="138" width="2" height="1" fill="#000"/><rect x="5" y="143" width="2" height="1" fill="#000"/><rect x="5" y="148" width="2" height="1" fill="#000"/><rect x="5" y="153" width="2" height="1" fill="#000"/><rect x="5" y="164" width="2" height="1" fill="#000"/><rect x="5" y="169" width="2" height="1" fill="#000"/><rect x="5" y="175" width="2" height="1" fill="#000"/><rect x="5" y="180" width="2" height="1" fill="#000"/><rect x="4" y="185" width="4" height="1" fill="#000"/><rect x="5" y="191" width="2" height="1" fill="#000"/><rect x="5" y="196" width="2" height="1" fill="#000"/><rect x="5" y="201" width="2" height="1" fill="#000"/><rect x="5" y="206" width="2" height="1" fill="#000"/><rect x="5" y="217" width="2" height="1" fill="#000"/><rect x="5" y="222" width="2" height="1" fill="#000"/><rect x="5" y="228" width="2" height="1" fill="#000"/><rect x="5" y="233" width="2" height="1" fill="#000"/><rect x="4" y="238" width="4" height="1" fill="#000"/><rect x="5" y="243" width="2" height="1" fill="#000"/><rect x="5" y="249" width="2" height="1" fill="#000"/><rect x="5" y="254" width="2" height="1" fill="#000"/><rect x="5" y="259" width="2" height="1" fill="#000"/><rect x="5" y="270" width="2" height="1" fill="#000"/><rect x="5" y="275" width="2" height="1" fill="#000"/><rect x="5" y="280" width="2" height="1" fill="#000"/><rect x="5" y="286" width="2" height="1" fill="#000"/><rect x="4" y="291" width="4" height="1" fill="#000"/><rect x="5" y="296" width="2" height="1" fill="#000"/><rect x="5" y="302" width="2" height="1" fill="#000"/><rect x="5" y="307" width="2" height="1" fill="#000"/><rect x="5" y="312" width="2" height="1" fill="#000"/><rect x="5" y="323" width="2" height="1" fill="#000"/><rect x="5" y="328" width="2" height="1" fill="#000"/><rect x="5" y="333" width="2" height="1" fill="#000"/><rect x="5" y="339" width="2" height="1" fill="#000"/><rect x="4" y="344" width="4" height="1" fill="#000"/><rect x="5" y="349" width="2" height="1" fill="#000"/><rect x="5" y="355" width="2" height="1" fill="#000"/><rect x="5" y="360" width="2" height="1" fill="#000"/><rect x="5" y="365" width="2" height="1" fill="#000"/><rect x="5" y="376" width="2" height="1" fill="#000"/><rect x="5" y="381" width="2" height="1" fill="#000"/><rect x="5" y="386" width="2" height="1" fill="#000"/><rect x="5" y="392" width="2" height="1" fill="#000"/><rect x="4" y="397" width="4" height="1" fill="#000"/><rect x="5" y="402" width="2" height="1" fill="#000"/><rect x="5" y="407" width="2" height="1" fill="#000"/><rect x="5" y="413" width="2" height="1" fill="#000"/><rect x="5" y="418" width="2" height="1" fill="#000"/><rect x="5" y="429" width="2" height="1" fill="#000"/><rect x="5" y="434" width="2" height="1" fill="#000"/><rect x="5" y="439" width="2" height="1" fill="#000"/><rect x="5" y="445" width="2" height="1" fill="#000"/><rect x="4" y="450" width="4" height="1" fill="#000"/><rect x="5" y="455" width="2" height="1" fill="#000"/><rect x="5" y="460" width="2" height="1" fill="#000"/><rect x="5" y="466" width="2" height="1" fill="#000"/><rect x="5" y="471" width="2" height="1" fill="#000"/><rect x="5" y="482" width="2" height="1" fill="#000"/><rect x="5" y="487" width="2" height="1" fill="#000"/><rect x="5" y="492" width="2" height="1" fill="#000"/><rect x="5" y="497" width="2" height="1" fill="#000"/><rect x="4" y="503" width="4" height="1" fill="#000"/><rect x="5" y="508" width="2" height="1" fill="#000"/><rect x="5" y="513" width="2" height="1" fill="#000"/><rect x="5" y="519" width="2" height="1" fill="#000"/><rect x="5" y="524" width="2" height="1" fill="#000"/><rect x="5" y="534" width="2" height="1" fill="#000"/><rect x="5" y="540" width="2" height="1" fill="#000"/><rect x="5" y="545" width="2" height="1" fill="#000"/><rect x="5" y="550" width="2" height="1" fill="#000"/><rect x="4" y="556" width="4" height="1" fill="#000"/><rect x="5" y="561" width="2" height="1" fill="#000"/><rect x="5" y="566" width="2" height="1" fill="#000"/><rect x="5" y="572" width="2" height="1" fill="#000"/><rect x="5" y="577" width="2" height="1" fill="#000"/><rect x="5" y="587" width="2" height="1" fill="#000"/><rect x="5" y="593" width="2" height="1" fill="#000"/><rect x="5" y="598" width="2" height="1" fill="#000"/><rect x="5" y="603" width="2" height="1" fill="#000"/><rect x="4" y="609" width="4" height="1" fill="#000"/><rect x="5" y="614" width="2" height="1" fill="#000"/><rect x="5" y="619" width="2" height="1" fill="#000"/><rect x="5" y="624" width="2" height="1" fill="#000"/><rect x="5" y="630" width="2" height="1" fill="#000"/><rect x="5" y="640" width="2" height="1" fill="#000"/><rect x="5" y="646" width="2" height="1" fill="#000"/><rect x="5" y="651" width="2" height="1" fill="#000"/><rect x="5" y="656" width="2" height="1" fill="#000"/><rect x="4" y="661" width="4" height="1" fill="#000"/><rect x="5" y="667" width="2" height="1" fill="#000"/><rect x="5" y="672" width="2" height="1" fill="#000"/><rect x="5" y="677" width="2" height="1" fill="#000"/><rect x="5" y="683" width="2" height="1" fill="#000"/><rect x="5" y="693" width="2" height="1" fill="#000"/><rect x="5" y="699" width="2" height="1" fill="#000"/><rect x="5" y="704" width="2" height="1" fill="#000"/><rect x="5" y="709" width="2" height="1" fill="#000"/><rect x="4" y="714" width="4" height="1" fill="#000"/><rect x="5" y="720" width="2" height="1" fill="#000"/><rect x="5" y="725" width="2" height="1" fill="#000"/><rect x="5" y="730" width="2" height="1" fill="#000"/><rect x="5" y="736" width="2" height="1" fill="#000"/><rect x="5" y="746" width="2" height="1" fill="#000"/><rect x="5" y="751" width="2" height="1" fill="#000"/><rect x="5" y="757" width="2" height="1" fill="#000"/><rect x="5" y="762" width="2" height="1" fill="#000"/><rect x="4" y="767" width="4" height="1" fill="#000"/><rect x="5" y="773" width="2" height="1" fill="#000"/><rect x="5" y="778" width="2" height="1" fill="#000"/><rect x="5" y="783" width="2" height="1" fill="#000"/><rect x="5" y="788" width="2" height="1" fill="#000"/><rect x="5" y="799" width="2" height="1" fill="#000"/><rect x="5" y="804" width="2" height="1" fill="#000"/><rect x="5" y="810" width="2" height="1" fill="#000"/></svg><div style="position:absolute;left:235px;top:255.9px;width:12px;height:12px;z-index:4;"><div style="position:absolute;left:6px;top:6px;transform:translate(-50%,-50%) rotate(-90deg);font:9.5px 'Liberation Sans',sans-serif;line-height:10px;white-space:pre;color:#000;">1</div></div><div style="position:absolute;left:235px;top:308.8px;width:12px;height:12px;z-index:4;"><div style="position:absolute;left:6px;top:6px;transform:translate(-50%,-50%) rotate(-90deg);font:9.5px 'Liberation Sans',sans-serif;line-height:10px;white-space:pre;color:#000;">2</div></div><div style="position:absolute;left:235px;top:361.8px;width:12px;height:12px;z-index:4;"><div style="position:absolute;left:6px;top:6px;transform:translate(-50%,-50%) rotate(-90deg);font:9.5px 'Liberation Sans',sans-serif;line-height:10px;white-space:pre;color:#000;">3</div></div><div style="position:absolute;left:235px;top:414.7px;width:12px;height:12px;z-index:4;"><div style="position:absolute;left:6px;top:6px;transform:translate(-50%,-50%) rotate(-90deg);font:9.5px 'Liberation Sans',sans-serif;line-height:10px;white-space:pre;color:#000;">4</div></div><div style="position:absolute;left:235px;top:467.6px;width:12px;height:12px;z-index:4;"><div style="position:absolute;left:6px;top:6px;transform:translate(-50%,-50%) rotate(-90deg);font:9.5px 'Liberation Sans',sans-serif;line-height:10px;white-space:pre;color:#000;">5</div></div><div style="position:absolute;left:235px;top:520.5px;width:12px;height:12px;z-index:4;"><div style="position:absolute;left:6px;top:6px;transform:translate(-50%,-50%) rotate(-90deg);font:9.5px 'Liberation Sans',sans-serif;line-height:10px;white-space:pre;color:#000;">6</div></div><div style="position:absolute;left:235px;top:573.4px;width:12px;height:12px;z-index:4;"><div style="position:absolute;left:6px;top:6px;transform:translate(-50%,-50%) rotate(-90deg);font:9.5px 'Liberation Sans',sans-serif;line-height:10px;white-space:pre;color:#000;">7</div></div><div style="position:absolute;left:235px;top:626.3px;width:12px;height:12px;z-index:4;"><div style="position:absolute;left:6px;top:6px;transform:translate(-50%,-50%) rotate(-90deg);font:9.5px 'Liberation Sans',sans-serif;line-height:10px;white-space:pre;color:#000;">8</div></div><div style="position:absolute;left:235px;top:679.3px;width:12px;height:12px;z-index:4;"><div style="position:absolute;left:6px;top:6px;transform:translate(-50%,-50%) rotate(-90deg);font:9.5px 'Liberation Sans',sans-serif;line-height:10px;white-space:pre;color:#000;">9</div></div><div style="position:absolute;left:235px;top:732.2px;width:12px;height:12px;z-index:4;"><div style="position:absolute;left:6px;top:6px;transform:translate(-50%,-50%) rotate(-90deg);font:9.5px 'Liberation Sans',sans-serif;line-height:10px;white-space:pre;color:#000;">10</div></div><div style="position:absolute;left:235px;top:785.1px;width:12px;height:12px;z-index:4;"><div style="position:absolute;left:6px;top:6px;transform:translate(-50%,-50%) rotate(-90deg);font:9.5px 'Liberation Sans',sans-serif;line-height:10px;white-space:pre;color:#000;">11</div></div><div style="position:absolute;left:235px;top:838.0px;width:12px;height:12px;z-index:4;"><div style="position:absolute;left:6px;top:6px;transform:translate(-50%,-50%) rotate(-90deg);font:9.5px 'Liberation Sans',sans-serif;line-height:10px;white-space:pre;color:#000;">12</div></div><div style="position:absolute;left:235px;top:890.9px;width:12px;height:12px;z-index:4;"><div style="position:absolute;left:6px;top:6px;transform:translate(-50%,-50%) rotate(-90deg);font:9.5px 'Liberation Sans',sans-serif;line-height:10px;white-space:pre;color:#000;">13</div></div><div style="position:absolute;left:235px;top:943.8px;width:12px;height:12px;z-index:4;"><div style="position:absolute;left:6px;top:6px;transform:translate(-50%,-50%) rotate(-90deg);font:9.5px 'Liberation Sans',sans-serif;line-height:10px;white-space:pre;color:#000;">14</div></div><div style="position:absolute;left:235px;top:996.8px;width:12px;height:12px;z-index:4;"><div style="position:absolute;left:6px;top:6px;transform:translate(-50%,-50%) rotate(-90deg);font:9.5px 'Liberation Sans',sans-serif;line-height:10px;white-space:pre;color:#000;">15</div></div><div style="position:absolute;left:558px;top:124px;width:1px;height:13px;background:#000;z-index:3;"></div><div style="position:absolute;left:235px;top:1016px;width:13px;height:1px;background:#000;z-index:3;"></div><div style="position:absolute;left:253px;top:143px;width:1432px;height:878px;background:#808080;z-index:0;"></div><div style="position:absolute;left:263px;top:153px;width:1111px;height:868px;background:#ffffff;border:1px solid #4a4a4a;box-sizing:border-box;z-index:1;"></div><div style="position:absolute;left:264px;top:154px;width:1109px;height:867px;background:#ffffff;z-index:1;"></div><div style="position:absolute;left:1685px;top:143px;width:17px;height:878px;background:#f0f0f0;z-index:0;"></div><div style="position:absolute;left:1686px;top:160px;width:15px;height:466px;background:#cdcdcd;z-index:1;"></div><svg style="position:absolute;left:1688px;top:148px;z-index:3;" width="11" height="8" viewBox="0 0 11 8"><path d="M1 6.5L5.5 2L10 6.5" fill="none" stroke="#606060" stroke-width="1.6"/></svg><svg style="position:absolute;left:1688px;top:1008px;z-index:3;" width="11" height="8" viewBox="0 0 11 8"><path d="M1 1.5L5.5 6L10 1.5" fill="none" stroke="#606060" stroke-width="1.6"/></svg><div style="position:absolute;left:321.5px;top:211.33px;font:bold 14px 'Liberation Sans', sans-serif;line-height:15.64px;color:#000;white-space:pre;z-index:6;transform:scaleX(1.1005);transform-origin:0 0;">PageHeader:</div><div style="position:absolute;left:423px;top:211.33px;font:normal 14px 'Liberation Sans', sans-serif;line-height:15.64px;color:#000;white-space:pre;z-index:6;transform:scaleX(0.9965);transform-origin:0 0;">PageHeader1</div><svg style="position:absolute;left:323px;top:242px;z-index:6;" width="14" height="13" viewBox="0 0 14 13"><rect x=".5" y=".5" width="13" height="12" fill="#fff" stroke="#555"/><rect x="2" y="2" width="10" height="9" fill="#8ab8e8"/><circle cx="7" cy="6" r="3" fill="#4caf50"/><rect x="2" y="9" width="10" height="2" fill="#9ccc65"/></svg><svg style="position:absolute;left:1175px;top:405px;z-index:6;" width="13" height="13" viewBox="0 0 13 13"><rect x=".5" y=".5" width="12" height="12" fill="#fff" stroke="#555"/><rect x="2" y="2" width="9" height="9" fill="#8ab8e8"/><circle cx="6.5" cy="6" r="3" fill="#4caf50"/><rect x="2" y="9" width="9" height="2" fill="#9ccc65"/></svg><div style="position:absolute;left:441px;top:239.18px;font:bold 23px 'Liberation Sans', sans-serif;line-height:25.69px;color:#000;white-space:pre;z-index:6;transform:scaleX(0.9742);transform-origin:0 0;">[frdsEmpresa.&quot;NOME&quot;]</div><div style="position:absolute;left:441px;top:276.02px;font:normal 16px 'Liberation Sans', sans-serif;line-height:17.87px;color:#000;white-space:pre;z-index:6;transform:scaleX(0.9351);transform-origin:0 0;">[frdsEmpresa.&quot;ENDERECOCOMPLETO&quot;]</div><div style="position:absolute;left:441px;top:302.02px;font:normal 16px 'Liberation Sans', sans-serif;line-height:17.87px;color:#000;white-space:pre;z-index:6;transform:scaleX(0.9323);transform-origin:0 0;">[frdsEmpresa.&quot;ID&quot;]</div><div style="position:absolute;left:320px;top:338.44px;font:bold 20.5px 'Liberation Sans', sans-serif;line-height:22.90px;color:#000;white-space:pre;z-index:6;transform:scaleX(0.8989);transform-origin:0 0;">Ficha Cadastral Completa</div><div style="position:absolute;left:1196.7px;top:307.52px;font:normal 16px 'Liberation Sans', sans-serif;line-height:17.87px;color:#000;white-space:pre;z-index:6;transform:scaleX(0.9364);transform-origin:0 0;">Página [Page#] de</div><div style="position:absolute;left:1279.3px;top:338.52px;font:normal 16px 'Liberation Sans', sans-serif;line-height:17.87px;color:#000;white-space:pre;z-index:6;transform:scaleX(0.9534);transform-origin:0 0;">[Date]</div><div style="position:absolute;left:356.7px;top:383.42px;font:bold 16px 'Liberation Sans', sans-serif;line-height:17.87px;color:#000;white-space:pre;z-index:6;transform:scaleX(0.9939);transform-origin:0 0;">Identificação do Trabalhador</div><div style="position:absolute;left:330.8px;top:411.14px;font:normal 12px 'Liberation Sans', sans-serif;line-height:13.40px;color:#000;white-space:pre;z-index:6;transform:scaleX(1.0182);transform-origin:0 0;">Registro</div><div style="position:absolute;left:330.8px;top:430.40px;font:bold 19px 'Liberation Sans', sans-serif;line-height:21.22px;color:#000;white-space:pre;z-index:6;transform:scaleX(0.9579);transform-origin:0 0;">[frdsR</div><div style="position:absolute;left:414.6px;top:411.14px;font:normal 12px 'Liberation Sans', sans-serif;line-height:13.40px;color:#000;white-space:pre;z-index:6;transform:scaleX(1.0245);transform-origin:0 0;">Nome</div><div style="position:absolute;left:414.6px;top:430.40px;font:bold 19px 'Liberation Sans', sans-serif;line-height:21.22px;color:#000;white-space:pre;z-index:6;transform:scaleX(0.9735);transform-origin:0 0;">[frdsRelatorio.&quot;NOME&quot;]</div><div style="position:absolute;left:986.4px;top:411.14px;font:normal 12px 'Liberation Sans', sans-serif;line-height:13.40px;color:#000;white-space:pre;z-index:6;transform:scaleX(1.0571);transform-origin:0 0;">Dt.Nascimento</div><div style="position:absolute;left:986.4px;top:430.40px;font:bold 19px 'Liberation Sans', sans-serif;line-height:21.22px;color:#000;white-space:pre;z-index:6;transform:scaleX(0.9798);transform-origin:0 0;">[frdsRelat</div><div style="position:absolute;left:330.8px;top:469.14px;font:normal 12px 'Liberation Sans', sans-serif;line-height:13.40px;color:#000;white-space:pre;z-index:6;transform:scaleX(1.0610);transform-origin:0 0;">Nome do pai</div><div style="position:absolute;left:330.8px;top:488.40px;font:bold 19px 'Liberation Sans', sans-serif;line-height:21.22px;color:#000;white-space:pre;z-index:6;transform:scaleX(0.9741);transform-origin:0 0;">[frdsRelatorio.&quot;NOMEPAI&quot;]</div><div style="position:absolute;left:716.3px;top:469.14px;font:normal 12px 'Liberation Sans', sans-serif;line-height:13.40px;color:#000;white-space:pre;z-index:6;transform:scaleX(1.0554);transform-origin:0 0;">Nome da</div><div style="position:absolute;left:716.3px;top:488.40px;font:bold 19px 'Liberation Sans', sans-serif;line-height:21.22px;color:#000;white-space:pre;z-index:6;transform:scaleX(0.9754);transform-origin:0 0;">[frdsRelatorio.&quot;NOMEMAE&quot;]</div><div style="position:absolute;left:330.8px;top:527.14px;font:normal 12px 'Liberation Sans', sans-serif;line-height:13.40px;color:#000;white-space:pre;z-index:6;transform:scaleX(1.0355);transform-origin:0 0;">Endereço</div><div style="position:absolute;left:330.8px;top:546.80px;font:bold 19px 'Liberation Sans', sans-serif;line-height:21.22px;color:#000;white-space:pre;z-index:6;transform:scaleX(0.9702);transform-origin:0 0;">[frdsRelatorio.&quot;ENDERECO&quot;],</div><div style="position:absolute;left:795.4px;top:527.14px;font:normal 12px 'Liberation Sans', sans-serif;line-height:13.40px;color:#000;white-space:pre;z-index:6;transform:scaleX(1.0245);transform-origin:0 0;">Bairro</div><div style="position:absolute;left:795.4px;top:546.80px;font:bold 19px 'Liberation Sans', sans-serif;line-height:21.22px;color:#000;white-space:pre;z-index:6;transform:scaleX(0.9723);transform-origin:0 0;">[frdsRelatorio.&quot;BAIRRO&quot;]</div><div style="position:absolute;left:330.8px;top:586.34px;font:normal 12px 'Liberation Sans', sans-serif;line-height:13.40px;color:#000;white-space:pre;z-index:6;transform:scaleX(1.0181);transform-origin:0 0;">Cidade/UF</div><div style="position:absolute;left:330.8px;top:605.40px;font:bold 19px 'Liberation Sans', sans-serif;line-height:21.22px;color:#000;white-space:pre;z-index:6;transform:scaleX(0.9766);transform-origin:0 0;">[frdsRelatorio.&quot;CIDADE&quot;]/[frdsRelatorio.&quot;UF&quot;]</div><div style="position:absolute;left:769.5px;top:586.34px;font:normal 12px 'Liberation Sans', sans-serif;line-height:13.40px;color:#000;white-space:pre;z-index:6;transform:scaleX(0.8871);transform-origin:0 0;">CEP</div><div style="position:absolute;left:769.5px;top:605.40px;font:bold 19px 'Liberation Sans', sans-serif;line-height:21.22px;color:#000;white-space:pre;z-index:6;transform:scaleX(0.9616);transform-origin:0 0;">[frdsRela</div><div style="position:absolute;left:875.6px;top:586.34px;font:normal 12px 'Liberation Sans', sans-serif;line-height:13.40px;color:#000;white-space:pre;z-index:6;transform:scaleX(1.0662);transform-origin:0 0;">Telefone Fixo</div><div style="position:absolute;left:875.6px;top:605.40px;font:bold 19px 'Liberation Sans', sans-serif;line-height:21.22px;color:#000;white-space:pre;z-index:6;transform:scaleX(0.9687);transform-origin:0 0;">[frdsRelatorio.</div><div style="position:absolute;left:1023.3px;top:586.34px;font:normal 12px 'Liberation Sans', sans-serif;line-height:13.40px;color:#000;white-space:pre;z-index:6;transform:scaleX(1.0667);transform-origin:0 0;">Telefone Celular</div><div style="position:absolute;left:1023.3px;top:605.40px;font:bold 19px 'Liberation Sans', sans-serif;line-height:21.22px;color:#000;white-space:pre;z-index:6;transform:scaleX(0.9680);transform-origin:0 0;">[frdsRelatorio.</div><div style="position:absolute;left:1169.8px;top:586.34px;font:bold 12px 'Liberation Sans', sans-serif;line-height:13.40px;color:#000;white-space:pre;z-index:6;transform:scaleX(1.1828);transform-origin:0 0;">Matrícula/Contrato</div><div style="position:absolute;left:1169.8px;top:605.40px;font:bold 19px 'Liberation Sans', sans-serif;line-height:21.22px;color:#000;white-space:pre;z-index:6;transform:scaleX(0.9857);transform-origin:0 0;">[frdsRelatorio.</div><div style="position:absolute;left:330.8px;top:638.74px;font:normal 12px 'Liberation Sans', sans-serif;line-height:13.40px;color:#000;white-space:pre;z-index:6;transform:scaleX(1.0259);transform-origin:0 0;">Estado Civil</div><div style="position:absolute;left:330.8px;top:658.30px;font:bold 19px 'Liberation Sans', sans-serif;line-height:21.22px;color:#000;white-space:pre;z-index:6;transform:scaleX(0.9597);transform-origin:0 0;">[frdsRel</div><div style="position:absolute;left:425.5px;top:638.74px;font:normal 12px 'Liberation Sans', sans-serif;line-height:13.40px;color:#000;white-space:pre;z-index:6;transform:scaleX(1.0268);transform-origin:0 0;">Nacionalidade</div><div style="position:absolute;left:425.5px;top:658.30px;font:bold 19px 'Liberation Sans', sans-serif;line-height:21.22px;color:#000;white-space:pre;z-index:6;transform:scaleX(0.9720);transform-origin:0 0;">[frdsRelat</div><div style="position:absolute;left:536.4px;top:638.74px;font:normal 12px 'Liberation Sans', sans-serif;line-height:13.40px;color:#000;white-space:pre;z-index:6;transform:scaleX(1.0488);transform-origin:0 0;">Local de Nascimento/UF</div><div style="position:absolute;left:536.4px;top:658.30px;font:bold 19px 'Liberation Sans', sans-serif;line-height:21.22px;color:#000;white-space:pre;z-index:6;transform:scaleX(0.9763);transform-origin:0 0;">[frdsRelatorio.&quot;RN_CIDADE&quot;]/[frdsRelatori</div><div style="position:absolute;left:356.4px;top:711.22px;font:bold 16px 'Liberation Sans', sans-serif;line-height:17.87px;color:#000;white-space:pre;z-index:6;transform:scaleX(0.9659);transform-origin:0 0;">Documentos</div><div style="position:absolute;left:330.3px;top:743.74px;font:normal 12px 'Liberation Sans', sans-serif;line-height:13.40px;color:#000;white-space:pre;z-index:6;transform:scaleX(0.9804);transform-origin:0 0;">PIS/PASEP</div><div style="position:absolute;left:330.3px;top:763.87px;font:bold 14.5px 'Liberation Sans', sans-serif;line-height:16.20px;color:#000;white-space:pre;z-index:6;transform:scaleX(1.0324);transform-origin:0 0;">[frdsRelatorio.&quot;</div><div style="position:absolute;left:467.5px;top:743.74px;font:normal 12px 'Liberation Sans', sans-serif;line-height:13.40px;color:#000;white-space:pre;z-index:6;transform:scaleX(0.8917);transform-origin:0 0;">CPF</div><div style="position:absolute;left:467.5px;top:763.87px;font:bold 14.5px 'Liberation Sans', sans-serif;line-height:16.20px;color:#000;white-space:pre;z-index:6;transform:scaleX(1.0324);transform-origin:0 0;">[frdsRelatorio.&quot;</div><div style="position:absolute;left:599px;top:743.74px;font:normal 12px 'Liberation Sans', sans-serif;line-height:13.40px;color:#000;white-space:pre;z-index:6;transform:scaleX(0.9056);transform-origin:0 0;">RG</div><div style="position:absolute;left:599.4px;top:763.87px;font:bold 14.5px 'Liberation Sans', sans-serif;line-height:16.20px;color:#000;white-space:pre;z-index:6;transform:scaleX(1.0286);transform-origin:0 0;">[frdsRelatorio.&quot;</div><div style="position:absolute;left:726.3px;top:743.74px;font:normal 12px 'Liberation Sans', sans-serif;line-height:13.40px;color:#000;white-space:pre;z-index:6;transform:scaleX(0.9089);transform-origin:0 0;">CTPS</div><div style="position:absolute;left:726.3px;top:763.87px;font:bold 14.5px 'Liberation Sans', sans-serif;line-height:16.20px;color:#000;white-space:pre;z-index:6;transform:scaleX(1.0323);transform-origin:0 0;">[frdsRelatorio.&quot;CTPS&quot;]</div><div style="position:absolute;left:906.7px;top:743.74px;font:normal 12px 'Liberation Sans', sans-serif;line-height:13.40px;color:#000;white-space:pre;z-index:6;transform:scaleX(1.0560);transform-origin:0 0;">Título Eleitoral</div><div style="position:absolute;left:906.7px;top:763.87px;font:bold 14.5px 'Liberation Sans', sans-serif;line-height:16.20px;color:#000;white-space:pre;z-index:6;transform:scaleX(1.0316);transform-origin:0 0;">[frdsRelatorio.&quot;E</div><div style="position:absolute;left:1044.1px;top:743.74px;font:normal 12px 'Liberation Sans', sans-serif;line-height:13.40px;color:#000;white-space:pre;z-index:6;transform:scaleX(1.0161);transform-origin:0 0;">Zona</div><div style="position:absolute;left:1044.1px;top:763.87px;font:bold 14.5px 'Liberation Sans', sans-serif;line-height:16.20px;color:#000;white-space:pre;z-index:6;transform:scaleX(1.0549);transform-origin:0 0;">[frd</div><div style="position:absolute;left:1086.1px;top:743.74px;font:normal 12px 'Liberation Sans', sans-serif;line-height:13.40px;color:#000;white-space:pre;z-index:6;transform:scaleX(0.9697);transform-origin:0 0;">Seção</div><div style="position:absolute;left:1086.1px;top:763.87px;font:bold 14.5px 'Liberation Sans', sans-serif;line-height:16.20px;color:#000;white-space:pre;z-index:6;transform:scaleX(1.0548);transform-origin:0 0;">[frds</div><div style="position:absolute;left:330.3px;top:802.84px;font:normal 12px 'Liberation Sans', sans-serif;line-height:13.40px;color:#000;white-space:pre;z-index:6;transform:scaleX(1.0633);transform-origin:0 0;">C.N.H. - Número</div><div style="position:absolute;left:330.3px;top:821.37px;font:bold 14.5px 'Liberation Sans', sans-serif;line-height:16.20px;color:#000;white-space:pre;z-index:6;transform:scaleX(1.0324);transform-origin:0 0;">[frdsRelatorio.&quot;</div><div style="position:absolute;left:535.3px;top:802.84px;font:normal 12px 'Liberation Sans', sans-serif;line-height:13.40px;color:#000;white-space:pre;z-index:6;transform:scaleX(1.0475);transform-origin:0 0;">C.N.H. - Expedida</div><div style="position:absolute;left:535.3px;top:821.37px;font:bold 14.5px 'Liberation Sans', sans-serif;line-height:16.20px;color:#000;white-space:pre;z-index:6;transform:scaleX(1.0384);transform-origin:0 0;">[frdsRelatorio.</div><div style="position:absolute;left:734.6px;top:802.84px;font:normal 12px 'Liberation Sans', sans-serif;line-height:13.40px;color:#000;white-space:pre;z-index:6;transform:scaleX(1.0371);transform-origin:0 0;">C.N.H. - UF</div><div style="position:absolute;left:734.6px;top:821.37px;font:bold 14.5px 'Liberation Sans', sans-serif;line-height:16.20px;color:#000;white-space:pre;z-index:6;transform:scaleX(1.0076);transform-origin:0 0;">[frdsRelat</div><div style="position:absolute;left:934.5px;top:802.84px;font:normal 12px 'Liberation Sans', sans-serif;line-height:13.40px;color:#000;white-space:pre;z-index:6;transform:scaleX(1.0596);transform-origin:0 0;">C.N.H. - Validade</div><div style="position:absolute;left:934.5px;top:821.37px;font:bold 14.5px 'Liberation Sans', sans-serif;line-height:16.20px;color:#000;white-space:pre;z-index:6;transform:scaleX(1.0112);transform-origin:0 0;">[frdsRelatorio.</div><div style="position:absolute;left:1134px;top:802.84px;font:normal 12px 'Liberation Sans', sans-serif;line-height:13.40px;color:#000;white-space:pre;z-index:6;transform:scaleX(1.0597);transform-origin:0 0;">C.N.H. - Categoria</div><div style="position:absolute;left:1134px;top:821.37px;font:bold 14.5px 'Liberation Sans', sans-serif;line-height:16.20px;color:#000;white-space:pre;z-index:6;transform:scaleX(1.0253);transform-origin:0 0;">[frdsRelatorio.</div><div style="position:absolute;left:357px;top:874.92px;font:bold 16px 'Liberation Sans', sans-serif;line-height:17.87px;color:#000;white-space:pre;z-index:6;transform:scaleX(0.9694);transform-origin:0 0;">Informações de Admissão</div><div style="position:absolute;left:330.3px;top:908.14px;font:normal 12px 'Liberation Sans', sans-serif;line-height:13.40px;color:#000;white-space:pre;z-index:6;transform:scaleX(1.0495);transform-origin:0 0;">Dt. Admissão</div><div style="position:absolute;left:330.3px;top:928.27px;font:bold 14.5px 'Liberation Sans', sans-serif;line-height:16.20px;color:#000;white-space:pre;z-index:6;transform:scaleX(1.0202);transform-origin:0 0;">[frdsRelatorio.</div><div style="position:absolute;left:462.5px;top:908.14px;font:normal 12px 'Liberation Sans', sans-serif;line-height:13.40px;color:#000;white-space:pre;z-index:6;transform:scaleX(1.0553);transform-origin:0 0;">Tipo de Admissão</div><div style="position:absolute;left:462.5px;top:928.27px;font:bold 14.5px 'Liberation Sans', sans-serif;line-height:16.20px;color:#000;white-space:pre;z-index:6;transform:scaleX(1.0301);transform-origin:0 0;">[frdsRelatorio.&quot;TIPOADMISSAO&quot;] -</div><div style="position:absolute;left:806.5px;top:908.14px;font:normal 12px 'Liberation Sans', sans-serif;line-height:13.40px;color:#000;white-space:pre;z-index:6;transform:scaleX(1.0378);transform-origin:0 0;">Tipo Salário</div><div style="position:absolute;left:806.5px;top:928.27px;font:bold 14.5px 'Liberation Sans', sans-serif;line-height:16.20px;color:#000;white-space:pre;z-index:6;transform:scaleX(1.0223);transform-origin:0 0;">[frdsRelatorio.</div><div style="position:absolute;left:921.9px;top:908.14px;font:normal 12px 'Liberation Sans', sans-serif;line-height:13.40px;color:#000;white-space:pre;z-index:6;transform:scaleX(1.0532);transform-origin:0 0;">Horas/Mês</div><div style="position:absolute;left:925.8px;top:928.27px;font:bold 14.5px 'Liberation Sans', sans-serif;line-height:16.20px;color:#000;white-space:pre;z-index:6;transform:scaleX(1.0147);transform-origin:0 0;">[frdsRel</div><div style="position:absolute;left:1002px;top:908.14px;font:normal 12px 'Liberation Sans', sans-serif;line-height:13.40px;color:#000;white-space:pre;z-index:6;transform:scaleX(1.0821);transform-origin:0 0;">Ref. Salarial Inicial / Valor</div><div style="position:absolute;left:1008.2px;top:928.27px;font:bold 14.5px 'Liberation Sans', sans-serif;line-height:16.20px;color:#000;white-space:pre;z-index:6;transform:scaleX(1.0160);transform-origin:0 0;">[frdsRelatori</div><div style="position:absolute;left:330.3px;top:967.14px;font:normal 12px 'Liberation Sans', sans-serif;line-height:13.40px;color:#000;white-space:pre;z-index:6;transform:scaleX(1.0494);transform-origin:0 0;">Cargo Inicial</div><div style="position:absolute;left:330.3px;top:985.77px;font:bold 14.5px 'Liberation Sans', sans-serif;line-height:16.20px;color:#000;white-space:pre;z-index:6;transform:scaleX(1.0272);transform-origin:0 0;">[frdsRelatorio.&quot;CARGOINICIAL&quot;] - [frdsRelatorio.&quot;NOMECARGOINICIAL&quot;]</div><div style="position:absolute;left:1012.4px;top:967.14px;font:normal 12px 'Liberation Sans', sans-serif;line-height:13.40px;color:#000;white-space:pre;z-index:6;transform:scaleX(0.9033);transform-origin:0 0;">CBO</div><div style="position:absolute;left:1012.4px;top:985.77px;font:bold 14.5px 'Liberation Sans', sans-serif;line-height:16.20px;color:#000;white-space:pre;z-index:6;transform:scaleX(1.0162);transform-origin:0 0;">[frdsRelatorio.</div><div style="position:absolute;left:1134px;top:967.14px;font:normal 12px 'Liberation Sans', sans-serif;line-height:13.40px;color:#000;white-space:pre;z-index:6;transform:scaleX(1.0981);transform-origin:0 0;">Dt. Término</div><div style="position:absolute;left:1134px;top:985.77px;font:bold 14.5px 'Liberation Sans', sans-serif;line-height:16.20px;color:#000;white-space:pre;z-index:6;transform:scaleX(1.0253);transform-origin:0 0;">[frdsRelatorio.</div><div style="position:absolute;left:1102.3px;top:928.27px;font:bold 14.5px 'Liberation Sans', sans-serif;line-height:16.20px;color:#000;white-space:pre;z-index:6;transform:scaleX(1.0292);transform-origin:0 0;">[frdsRelatorio.&quot;VLRREFSA</div><svg style="position:absolute;left:253px;top:143px;z-index:2;overflow:hidden;" width="1432" height="878" viewBox="0 0 1432 878"><path d="M63.5 90V878M89.5 90V878M116.5 90V878M142.5 90V878M169.5 90V878M195.5 90V878M222.5 90V878M248.5 90V878M275.5 90V878M301.5 90V878M328.5 90V878M354.5 90V878M380.5 90V878M407.5 90V878M433.5 90V878M460.5 90V878M486.5 90V878M513.5 90V878M539.5 90V878M566.5 90V878M592.5 90V878M619.5 90V878M645.5 90V878M672.5 90V878M698.5 90V878M724.5 90V878M751.5 90V878M777.5 90V878M804.5 90V878M830.5 90V878M857.5 90V878M883.5 90V878M910.5 90V878M936.5 90V878M963.5 90V878M989.5 90V878M1015.5 90V878M1042.5 90V878M1068.5 90V878M63 89.5H1068M63 116.5H1068M63 142.5H1068M63 169.5H1068M63 195.5H1068M63 222.5H1068M63 248.5H1068M63 275.5H1068M63 301.5H1068M63 328.5H1068M63 354.5H1068M63 380.5H1068M63 407.5H1068M63 433.5H1068M63 460.5H1068M63 486.5H1068M63 513.5H1068M63 539.5H1068M63 566.5H1068M63 592.5H1068M63 619.5H1068M63 645.5H1068M63 672.5H1068M63 698.5H1068M63 725.5H1068M63 751.5H1068M63 778.5H1068M63 804.5H1068M63 831.5H1068M63 857.5H1068" stroke="#ebebeb" stroke-width="1" fill="none"/><rect x="64" y="64" width="1004" height="26" fill="#efefef"/><path d="M63.5 64V228M1068.5 64V228M63 63.5H1069M63 227.5H1069" stroke="#a0a0a0" fill="none"/><path d="M62.5 62V878M1070.5 62V878M62 62.5H1071" stroke="#a8a8a8" stroke-dasharray="3 3" fill="none"/><path d="M63 222.5H1068" stroke="#000" fill="none"/><path d="M101.5 248.5H1030.5A38 38 0 0 1 1068.5 286.5V512.5A38 38 0 0 1 1030.5 550.5H101.5A38 38 0 0 1 63.5 512.5V286.5A38 38 0 0 1 101.5 248.5Z" stroke="#000" stroke-width="1.1" fill="none"/><path d="M80.5 576.5H1051.5A17 17 0 0 1 1068.5 593.5V697.5A17 17 0 0 1 1051.5 714.5H80.5A17 17 0 0 1 63.5 697.5V593.5A17 17 0 0 1 80.5 576.5Z" stroke="#000" stroke-width="1.1" fill="none"/><path d="M90.5 740.5H1041.5A27 27 0 0 1 1068.5 767.5V1130.5A27 27 0 0 1 1041.5 1157.5H90.5A27 27 0 0 1 63.5 1130.5V767.5A27 27 0 0 1 90.5 740.5Z" stroke="#000" stroke-width="1.1" fill="none"/><rect x="918.5" y="258.5" width="126" height="169" fill="#fff" stroke="#000"/><rect x="101" y="239" width="227" height="20" fill="#fff"/><rect x="101" y="568" width="100" height="18" fill="#fff"/><rect x="101" y="732" width="200" height="18" fill="#fff"/><path d="M63 248.5H69M63.5 248V254M1063 248.5H1069M1068.5 248V254M63 550.5H69M63.5 545V551M1063 550.5H1069M1068.5 545V551M63 576.5H69M63.5 576V582M1063 576.5H1069M1068.5 576V582M63 714.5H69M63.5 709V715M1063 714.5H1069M1068.5 709V715M63 740.5H69M63.5 740V746M1063 740.5H1069M1068.5 740V746M63 1157.5H69M63.5 1152V1158M1063 1157.5H1069M1068.5 1152V1158M68 95.5H73M68.5 95V100M160 95.5H165M164.5 95V100M68 189.5H73M68.5 185V190M160 189.5H165M164.5 185V190M185 95.5H190M185.5 95V100M883 95.5H888M887.5 95V100M185 120.5H190M185.5 116V121M883 120.5H888M887.5 116V121M185 132.5H190M185.5 132V137M883 132.5H888M887.5 132V137M185 152.5H190M185.5 148V153M883 152.5H888M887.5 148V153M185 159.5H190M185.5 159V164M456 159.5H461M460.5 159V164M185 179.5H190M185.5 175V180M456 179.5H461M460.5 175V180M63 195.5H68M63.5 195V200M302 195.5H307M306.5 195V200M63 218.5H68M63.5 214V219M302 218.5H307M306.5 214V219M931 164.5H936M931.5 164V169M1063 164.5H1068M1067.5 164V169M931 186.5H936M931.5 182V187M1063 186.5H1068M1067.5 182V187M915 195.5H920M915.5 195V200M1063 195.5H1068M1067.5 195V200M915 215.5H920M915.5 211V216M1063 215.5H1068M1067.5 211V216M100 238.5H105M100.5 238V243M324 238.5H329M328.5 238V243M100 259.5H105M100.5 255V260M324 259.5H329M328.5 255V260M74 264.5H79M74.5 264V269M133 264.5H138M137.5 264V269M74 285.5H79M74.5 281V286M133 285.5H138M137.5 281V286M74 285.5H79M74.5 285V290M138 285.5H143M142.5 285V290M74 311.5H79M74.5 307V312M138 311.5H143M142.5 307V312M158 264.5H163M158.5 264V269M218 264.5H223M222.5 264V269M158 285.5H163M158.5 281V286M218 285.5H223M222.5 281V286M158 285.5H163M158.5 285V290M715 285.5H720M719.5 285V290M158 311.5H163M158.5 307V312M715 311.5H720M719.5 307V312M730 264.5H735M730.5 264V269M816 264.5H821M820.5 264V269M730 285.5H735M730.5 281V286M816 285.5H821M820.5 281V286M730 285.5H735M730.5 285V290M826 285.5H831M830.5 285V290M730 311.5H735M730.5 307V312M826 311.5H831M830.5 307V312M74 322.5H79M74.5 322V327M154 322.5H159M158.5 322V327M74 343.5H79M74.5 339V344M154 343.5H159M158.5 339V344M74 343.5H79M74.5 343V348M455 343.5H460M459.5 343V348M74 370.5H79M74.5 366V371M455 370.5H460M459.5 366V371M460 322.5H465M460.5 322V327M541 322.5H546M545.5 322V327M460 343.5H465M460.5 339V344M541 343.5H546M545.5 339V344M460 343.5H465M460.5 343V348M841 343.5H846M845.5 343V348M460 370.5H465M460.5 366V371M841 370.5H846M845.5 366V371M74 380.5H79M74.5 380V385M154 380.5H159M158.5 380V385M74 401.5H79M74.5 397V402M154 401.5H159M158.5 397V402M74 401.5H79M74.5 401V406M521 401.5H526M525.5 401V406M74 427.5H79M74.5 423V428M521 427.5H526M525.5 423V428M539 380.5H544M539.5 380V385M620 380.5H625M624.5 380V385M539 401.5H544M539.5 397V402M620 401.5H625M624.5 397V402M539 401.5H544M539.5 401V406M893 401.5H898M897.5 401V406M539 427.5H544M539.5 423V428M893 427.5H898M897.5 423V428M74 439.5H79M74.5 439V444M154 439.5H159M158.5 439V444M74 460.5H79M74.5 456V461M154 460.5H159M158.5 456V461M74 460.5H79M74.5 460V465M496 460.5H501M500.5 460V465M74 485.5H79M74.5 481V486M496 485.5H501M500.5 481V486M513 439.5H518M513.5 439V444M593 439.5H598M597.5 439V444M513 460.5H518M513.5 456V461M593 460.5H598M597.5 456V461M513 460.5H518M513.5 460V465M598 460.5H603M602.5 460V465M513 485.5H518M513.5 481V486M598 485.5H603M602.5 481V486M619 439.5H624M619.5 439V444M699 439.5H704M703.5 439V444M619 460.5H624M619.5 456V461M699 460.5H704M703.5 456V461M619 460.5H624M619.5 460V465M746 460.5H751M750.5 460V465M619 485.5H624M619.5 481V486M746 485.5H751M750.5 481V486M767 439.5H772M767.5 439V444M863 439.5H868M867.5 439V444M767 460.5H772M767.5 456V461M863 460.5H868M867.5 456V461M767 460.5H772M767.5 460V465M894 460.5H899M898.5 460V465M767 485.5H772M767.5 481V486M894 485.5H899M898.5 481V486M913 439.5H918M913.5 439V444M1041 439.5H1046M1045.5 439V444M913 460.5H918M913.5 456V461M1041 460.5H1046M1045.5 456V461M913 460.5H918M913.5 460V465M1043 460.5H1048M1047.5 460V465M913 485.5H918M913.5 481V486M1043 485.5H1048M1047.5 481V486M74 492.5H79M74.5 492V497M154 492.5H159M158.5 492V497M74 513.5H79M74.5 509V514M154 513.5H159M158.5 509V514M74 513.5H79M74.5 513V518M153 513.5H158M157.5 513V518M74 539.5H79M74.5 535V540M153 539.5H158M157.5 535V540M169 492.5H174M169.5 492V497M265 492.5H270M269.5 492V497M169 513.5H174M169.5 509V514M265 513.5H270M269.5 509V514M169 513.5H174M169.5 513V518M264 513.5H269M268.5 513V518M169 539.5H174M169.5 535V540M264 539.5H269M268.5 535V540M280 492.5H285M280.5 492V497M445 492.5H450M449.5 492V497M280 513.5H285M280.5 509V514M445 513.5H450M449.5 509V514M280 513.5H285M280.5 513V518M661 513.5H666M665.5 513V518M280 539.5H285M280.5 535V540M661 539.5H666M665.5 535V540M100 567.5H105M100.5 567V572M197 567.5H202M201.5 567V572M100 586.5H105M100.5 582V587M197 586.5H202M201.5 582V587M74 597.5H79M74.5 597V602M144 597.5H149M148.5 597V602M74 619.5H79M74.5 615V620M144 619.5H149M148.5 615V620M74 619.5H79M74.5 619V624M191 619.5H196M195.5 619V624M74 639.5H79M74.5 635V640M191 639.5H196M195.5 635V640M211 597.5H216M211.5 597V602M271 597.5H276M275.5 597V602M211 619.5H216M211.5 615V620M271 619.5H276M275.5 615V620M211 619.5H216M211.5 619V624M329 619.5H334M333.5 619V624M211 639.5H216M211.5 635V640M329 639.5H334M333.5 635V640M343 597.5H348M343.5 597V602M403 597.5H408M407.5 597V602M343 619.5H348M343.5 615V620M403 619.5H408M407.5 615V620M343 619.5H348M343.5 619V624M456 619.5H461M460.5 619V624M343 639.5H348M343.5 635V640M456 639.5H461M460.5 635V640M470 597.5H475M470.5 597V602M530 597.5H535M534.5 597V602M470 619.5H475M470.5 615V620M530 619.5H535M534.5 615V620M470 619.5H475M470.5 619V624M636 619.5H641M640.5 619V624M470 639.5H475M470.5 635V640M636 639.5H641M640.5 635V640M650 597.5H655M650.5 597V602M736 597.5H741M740.5 597V602M650 619.5H655M650.5 615V620M736 619.5H741M740.5 615V620M650 619.5H655M650.5 619V624M779 619.5H784M783.5 619V624M650 639.5H655M650.5 635V640M779 639.5H784M783.5 635V640M788 597.5H793M788.5 597V602M821 597.5H826M825.5 597V602M788 619.5H793M788.5 615V620M821 619.5H826M825.5 615V620M788 619.5H793M788.5 619V624M821 619.5H826M825.5 619V624M788 639.5H793M788.5 635V640M821 639.5H826M825.5 635V640M830 597.5H835M830.5 597V602M874 597.5H879M878.5 597V602M830 619.5H835M830.5 615V620M874 619.5H879M878.5 615V620M830 619.5H835M830.5 619V624M874 619.5H879M878.5 619V624M830 639.5H835M830.5 635V640M874 639.5H879M878.5 635V640M74 656.5H79M74.5 656V661M175 656.5H180M179.5 656V661M74 677.5H79M74.5 673V678M175 677.5H180M179.5 673V678M74 677.5H79M74.5 677V682M191 677.5H196M195.5 677V682M74 697.5H79M74.5 693V698M191 697.5H196M195.5 693V698M279 656.5H284M279.5 656V661M386 656.5H391M390.5 656V661M279 677.5H284M279.5 673V678M386 677.5H391M390.5 673V678M279 677.5H284M279.5 677V682M386 677.5H391M390.5 677V682M279 697.5H284M279.5 693V698M386 697.5H391M390.5 693V698M478 656.5H483M478.5 656V661M548 656.5H553M552.5 656V661M478 677.5H483M478.5 673V678M548 677.5H553M552.5 673V678M478 677.5H483M478.5 677V682M548 677.5H553M552.5 677V682M478 697.5H483M478.5 693V698M548 697.5H553M552.5 693V698M678 656.5H683M678.5 656V661M780 656.5H785M784.5 656V661M678 677.5H683M678.5 673V678M780 677.5H785M784.5 673V678M678 677.5H683M678.5 677V682M785 677.5H790M789.5 677V682M678 697.5H683M678.5 693V698M785 697.5H790M789.5 693V698M878 656.5H883M878.5 656V661M990 656.5H995M994.5 656V661M878 677.5H883M878.5 673V678M990 677.5H995M994.5 673V678M878 677.5H883M878.5 677V682M985 677.5H990M989.5 677V682M878 697.5H883M878.5 693V698M985 697.5H990M989.5 693V698M100 731.5H105M100.5 731V736M297 731.5H302M301.5 731V736M100 750.5H105M100.5 746V751M297 750.5H302M301.5 746V751M74 762.5H79M74.5 762V767M181 762.5H186M185.5 762V767M74 782.5H79M74.5 778V783M181 782.5H186M185.5 778V783M74 782.5H79M74.5 782V787M181 782.5H186M185.5 782V787M74 803.5H79M74.5 799V804M181 803.5H186M185.5 799V804M206 762.5H211M206.5 762V767M313 762.5H318M317.5 762V767M206 782.5H211M206.5 778V783M313 782.5H318M317.5 778V783M206 782.5H211M206.5 782V787M534 782.5H539M538.5 782V787M206 803.5H211M206.5 799V804M534 803.5H539M538.5 799V804M550 762.5H555M550.5 762V767M657 762.5H662M661.5 762V767M550 782.5H555M550.5 778V783M657 782.5H662M661.5 778V783M550 782.5H555M550.5 782V787M657 782.5H662M661.5 782V787M550 803.5H555M550.5 799V804M657 803.5H662M661.5 799V804M666 762.5H671M666.5 762V767M731 762.5H736M735.5 762V767M666 782.5H671M666.5 778V783M731 782.5H736M735.5 778V783M666 782.5H671M666.5 782V787M731 782.5H736M735.5 782V787M666 803.5H671M666.5 799V804M731 803.5H736M735.5 799V804M746 762.5H751M746.5 762V767M916 762.5H921M920.5 762V767M746 782.5H751M746.5 778V783M916 782.5H921M920.5 778V783M746 782.5H751M746.5 782V787M843 782.5H848M847.5 782V787M746 803.5H751M746.5 799V804M843 803.5H848M847.5 799V804M74 821.5H79M74.5 821V826M181 821.5H186M185.5 821V826M74 841.5H79M74.5 837V842M181 841.5H186M185.5 837V842M74 841.5H79M74.5 841V846M724 841.5H729M728.5 841V846M74 861.5H79M74.5 857V862M724 861.5H729M728.5 857V862M756 821.5H761M756.5 821V826M804 821.5H809M808.5 821V826M756 841.5H761M756.5 837V842M804 841.5H809M808.5 837V842M756 841.5H761M756.5 841V846M862 841.5H867M866.5 841V846M756 861.5H761M756.5 857V862M862 861.5H867M866.5 857V862M878 821.5H883M878.5 821V826M953 821.5H958M957.5 821V826M878 841.5H883M878.5 837V842M953 841.5H958M957.5 837V842M878 841.5H883M878.5 841V846M985 841.5H990M989.5 841V846M878 861.5H883M878.5 857V862M985 861.5H990M989.5 857V862M847 782.5H852M847.5 782V787M1043 782.5H1048M1047.5 782V787M847 803.5H852M847.5 799V804M1043 803.5H1048M1047.5 799V804" stroke="#000" stroke-width="1" fill="none"/></svg><div style="position:absolute;left:1702px;top:121px;width:218px;height:900px;background:#f0f0f0;z-index:0;"></div><svg style="position:absolute;left:1712px;top:123px;z-index:3;" width="192" height="8" viewBox="0 0 192 8"><rect x="0.0" y="1" width="2" height="2" fill="#c4c4c4"/><rect x="0.0" y="5" width="2" height="2" fill="#c4c4c4"/><rect x="4.35" y="1" width="2" height="2" fill="#c4c4c4"/><rect x="4.35" y="5" width="2" height="2" fill="#c4c4c4"/><rect x="8.7" y="1" width="2" height="2" fill="#c4c4c4"/><rect x="8.7" y="5" width="2" height="2" fill="#c4c4c4"/><rect x="13.049999999999999" y="1" width="2" height="2" fill="#c4c4c4"/><rect x="13.049999999999999" y="5" width="2" height="2" fill="#c4c4c4"/><rect x="17.4" y="1" width="2" height="2" fill="#c4c4c4"/><rect x="17.4" y="5" width="2" height="2" fill="#c4c4c4"/><rect x="21.75" y="1" width="2" height="2" fill="#c4c4c4"/><rect x="21.75" y="5" width="2" height="2" fill="#c4c4c4"/><rect x="26.099999999999998" y="1" width="2" height="2" fill="#c4c4c4"/><rect x="26.099999999999998" y="5" width="2" height="2" fill="#c4c4c4"/><rect x="30.449999999999996" y="1" width="2" height="2" fill="#c4c4c4"/><rect x="30.449999999999996" y="5" width="2" height="2" fill="#c4c4c4"/><rect x="34.8" y="1" width="2" height="2" fill="#c4c4c4"/><rect x="34.8" y="5" width="2" height="2" fill="#c4c4c4"/><rect x="39.15" y="1" width="2" height="2" fill="#c4c4c4"/><rect x="39.15" y="5" width="2" height="2" fill="#c4c4c4"/><rect x="43.5" y="1" width="2" height="2" fill="#c4c4c4"/><rect x="43.5" y="5" width="2" height="2" fill="#c4c4c4"/><rect x="47.849999999999994" y="1" width="2" height="2" fill="#c4c4c4"/><rect x="47.849999999999994" y="5" width="2" height="2" fill="#c4c4c4"/><rect x="52.199999999999996" y="1" width="2" height="2" fill="#c4c4c4"/><rect x="52.199999999999996" y="5" width="2" height="2" fill="#c4c4c4"/><rect x="56.55" y="1" width="2" height="2" fill="#c4c4c4"/><rect x="56.55" y="5" width="2" height="2" fill="#c4c4c4"/><rect x="60.89999999999999" y="1" width="2" height="2" fill="#c4c4c4"/><rect x="60.89999999999999" y="5" width="2" height="2" fill="#c4c4c4"/><rect x="65.25" y="1" width="2" height="2" fill="#c4c4c4"/><rect x="65.25" y="5" width="2" height="2" fill="#c4c4c4"/><rect x="69.6" y="1" width="2" height="2" fill="#c4c4c4"/><rect x="69.6" y="5" width="2" height="2" fill="#c4c4c4"/><rect x="73.94999999999999" y="1" width="2" height="2" fill="#c4c4c4"/><rect x="73.94999999999999" y="5" width="2" height="2" fill="#c4c4c4"/><rect x="78.3" y="1" width="2" height="2" fill="#c4c4c4"/><rect x="78.3" y="5" width="2" height="2" fill="#c4c4c4"/><rect x="82.64999999999999" y="1" width="2" height="2" fill="#c4c4c4"/><rect x="82.64999999999999" y="5" width="2" height="2" fill="#c4c4c4"/><rect x="87.0" y="1" width="2" height="2" fill="#c4c4c4"/><rect x="87.0" y="5" width="2" height="2" fill="#c4c4c4"/><rect x="91.35" y="1" width="2" height="2" fill="#c4c4c4"/><rect x="91.35" y="5" width="2" height="2" fill="#c4c4c4"/><rect x="95.69999999999999" y="1" width="2" height="2" fill="#c4c4c4"/><rect x="95.69999999999999" y="5" width="2" height="2" fill="#c4c4c4"/><rect x="100.05" y="1" width="2" height="2" fill="#c4c4c4"/><rect x="100.05" y="5" width="2" height="2" fill="#c4c4c4"/><rect x="104.39999999999999" y="1" width="2" height="2" fill="#c4c4c4"/><rect x="104.39999999999999" y="5" width="2" height="2" fill="#c4c4c4"/><rect x="108.74999999999999" y="1" width="2" height="2" fill="#c4c4c4"/><rect x="108.74999999999999" y="5" width="2" height="2" fill="#c4c4c4"/><rect x="113.1" y="1" width="2" height="2" fill="#c4c4c4"/><rect x="113.1" y="5" width="2" height="2" fill="#c4c4c4"/><rect x="117.44999999999999" y="1" width="2" height="2" fill="#c4c4c4"/><rect x="117.44999999999999" y="5" width="2" height="2" fill="#c4c4c4"/><rect x="121.79999999999998" y="1" width="2" height="2" fill="#c4c4c4"/><rect x="121.79999999999998" y="5" width="2" height="2" fill="#c4c4c4"/><rect x="126.14999999999999" y="1" width="2" height="2" fill="#c4c4c4"/><rect x="126.14999999999999" y="5" width="2" height="2" fill="#c4c4c4"/><rect x="130.5" y="1" width="2" height="2" fill="#c4c4c4"/><rect x="130.5" y="5" width="2" height="2" fill="#c4c4c4"/><rect x="134.85" y="1" width="2" height="2" fill="#c4c4c4"/><rect x="134.85" y="5" width="2" height="2" fill="#c4c4c4"/><rect x="139.2" y="1" width="2" height="2" fill="#c4c4c4"/><rect x="139.2" y="5" width="2" height="2" fill="#c4c4c4"/><rect x="143.54999999999998" y="1" width="2" height="2" fill="#c4c4c4"/><rect x="143.54999999999998" y="5" width="2" height="2" fill="#c4c4c4"/><rect x="147.89999999999998" y="1" width="2" height="2" fill="#c4c4c4"/><rect x="147.89999999999998" y="5" width="2" height="2" fill="#c4c4c4"/><rect x="152.25" y="1" width="2" height="2" fill="#c4c4c4"/><rect x="152.25" y="5" width="2" height="2" fill="#c4c4c4"/><rect x="156.6" y="1" width="2" height="2" fill="#c4c4c4"/><rect x="156.6" y="5" width="2" height="2" fill="#c4c4c4"/><rect x="160.95" y="1" width="2" height="2" fill="#c4c4c4"/><rect x="160.95" y="5" width="2" height="2" fill="#c4c4c4"/><rect x="165.29999999999998" y="1" width="2" height="2" fill="#c4c4c4"/><rect x="165.29999999999998" y="5" width="2" height="2" fill="#c4c4c4"/><rect x="169.64999999999998" y="1" width="2" height="2" fill="#c4c4c4"/><rect x="169.64999999999998" y="5" width="2" height="2" fill="#c4c4c4"/><rect x="174.0" y="1" width="2" height="2" fill="#c4c4c4"/><rect x="174.0" y="5" width="2" height="2" fill="#c4c4c4"/><rect x="178.35" y="1" width="2" height="2" fill="#c4c4c4"/><rect x="178.35" y="5" width="2" height="2" fill="#c4c4c4"/><rect x="182.7" y="1" width="2" height="2" fill="#c4c4c4"/><rect x="182.7" y="5" width="2" height="2" fill="#c4c4c4"/><rect x="187.04999999999998" y="1" width="2" height="2" fill="#c4c4c4"/><rect x="187.04999999999998" y="5" width="2" height="2" fill="#c4c4c4"/></svg><svg style="position:absolute;left:1908px;top:122px;z-index:3;" width="11" height="11" viewBox="0 0 11 11"><rect x=".5" y=".5" width="10" height="10" fill="#f0c8c8" stroke="#5a3050"/><path d="M2 2L9 9M9 2L2 9" stroke="#333" stroke-width="1.2"/></svg><svg style="position:absolute;left:1702px;top:557px;z-index:2;" width="6" height="29" viewBox="0 0 6 29"><rect x="0" y="0" width="6" height="29" fill="#d8d8c8"/><rect x="2" y="5" width="2" height="2" fill="#555"/><rect x="2" y="8" width="2" height="2" fill="#555"/><rect x="2" y="11" width="2" height="2" fill="#555"/><rect x="2" y="14" width="2" height="2" fill="#555"/><rect x="2" y="17" width="2" height="2" fill="#555"/><rect x="2" y="20" width="2" height="2" fill="#555"/><rect x="2" y="23" width="2" height="2" fill="#555"/></svg><svg style="position:absolute;left:1708px;top:138px;z-index:1;" width="212" height="17" viewBox="0 0 212 17"><path d="M153.0 16.5L157.0 .5H199.5L203.5 16.5" fill="#fcfcfc" stroke="#a0a0a0"/><path d="M102.0 16.5L106.0 .5H152.0L156.0 16.5" fill="#fcfcfc" stroke="#a0a0a0"/><path d="M49.0 16.5L53.0 .5H101.0L105.0 16.5" fill="#fcfcfc" stroke="#a0a0a0"/><path d="M7.0 16.5L11.0 .5H48.0L52.0 16.5" fill="#ebebeb" stroke="#a0a0a0"/></svg><div style="position:absolute;left:1720.5px;top:141.14px;font:normal 12px 'Liberation Sans', sans-serif;line-height:13.40px;color:#000;white-space:pre;z-index:5;transform:scaleX(0.9514);transform-origin:0 0;">Dados</div><div style="position:absolute;left:1762.5px;top:141.14px;font:normal 12px 'Liberation Sans', sans-serif;line-height:13.40px;color:#000;white-space:pre;z-index:5;transform:scaleX(0.9078);transform-origin:0 0;">Variáveis</div><div style="position:absolute;left:1815.5px;top:141.14px;font:normal 12px 'Liberation Sans', sans-serif;line-height:13.40px;color:#000;white-space:pre;z-index:5;transform:scaleX(0.9124);transform-origin:0 0;">Funções</div><div style="position:absolute;left:1866.5px;top:141.14px;font:normal 12px 'Liberation Sans', sans-serif;line-height:13.40px;color:#000;white-space:pre;z-index:5;transform:scaleX(0.9019);transform-origin:0 0;">Classes</div><div style="position:absolute;left:1708px;top:154px;width:212px;height:814px;background:#ffffff;border:1px solid #a6a6a6;box-sizing:border-box;z-index:1;"></div><div style="position:absolute;left:1902px;top:155px;width:17px;height:795px;background:#f0f0f0;z-index:2;"></div><div style="position:absolute;left:1903px;top:782px;width:14px;height:21px;background:#cdcdcd;z-index:3;"></div><svg style="position:absolute;left:1904px;top:161px;z-index:4;" width="11" height="8" viewBox="0 0 11 8"><path d="M1 6.5L5.5 2L10 6.5" fill="none" stroke="#606060" stroke-width="1.6"/></svg><svg style="position:absolute;left:1904px;top:936px;z-index:4;" width="11" height="8" viewBox="0 0 11 8"><path d="M1 1.5L5.5 6L10 1.5" fill="none" stroke="#606060" stroke-width="1.6"/></svg><div style="position:absolute;left:1709px;top:950px;width:193px;height:17px;background:#f0f0f0;z-index:2;"></div><div style="position:absolute;left:1902px;top:950px;width:18px;height:18px;background:#f0f0f0;z-index:2;"></div><div style="position:absolute;left:1727px;top:951px;width:119px;height:14px;background:#cdcdcd;z-index:3;"></div><svg style="position:absolute;left:1713px;top:953px;z-index:4;" width="8" height="11" viewBox="0 0 8 11"><path d="M6.5 1L2 5.5L6.5 10" fill="none" stroke="#606060" stroke-width="1.6"/></svg><svg style="position:absolute;left:1888px;top:953px;z-index:4;" width="8" height="11" viewBox="0 0 8 11"><path d="M1.5 1L6 5.5L1.5 10" fill="none" stroke="#606060" stroke-width="1.6"/></svg><svg style="position:absolute;left:1715px;top:159px;z-index:4;" width="11" height="8" viewBox="0 0 11 8"><path d="M1 1.5L5.5 6L10 1.5" fill="none" stroke="#404040" stroke-width="1.5"/></svg><svg style="position:absolute;left:1727px;top:163px;z-index:4;" width="8" height="2" viewBox="0 0 8 2"><rect x="0" y="0" width="1" height="1" fill="#888"/><rect x="3" y="0" width="1" height="1" fill="#888"/><rect x="6" y="0" width="1" height="1" fill="#888"/></svg><svg style="position:absolute;left:1735px;top:156px;z-index:4;" width="12" height="16" viewBox="0 0 12 16"><ellipse cx="6" cy="3.5" rx="5.2" ry="2.5" fill="#f7d77a" stroke="#d09020"/><path d="M.8 3.5V12.5A5.2 2.5 0 0 0 11.2 12.5V3.5" fill="#f3c44a" stroke="#d09020"/><rect x="4" y="7" width="3" height="5" fill="#e8a830"/></svg><div style="position:absolute;left:1753.4px;top:159.14px;font:bold 12px 'Liberation Sans', sans-serif;line-height:13.40px;color:#000;white-space:pre;z-index:5;transform:scaleX(0.9868);transform-origin:0 0;">frdsRelatorio</div><svg style="position:absolute;left:1740px;top:172px;z-index:3;" width="1" height="778" viewBox="0 0 1 778"><rect x="0" y="0" width="1" height="1" fill="#808080"/><rect x="0" y="2" width="1" height="1" fill="#808080"/><rect x="0" y="4" width="1" height="1" fill="#808080"/><rect x="0" y="6" width="1" height="1" fill="#808080"/><rect x="0" y="8" width="1" height="1" fill="#808080"/><rect x="0" y="10" width="1" height="1" fill="#808080"/><rect x="0" y="12" width="1" height="1" fill="#808080"/><rect x="0" y="14" width="1" height="1" fill="#808080"/><rect x="0" y="16" width="1" height="1" fill="#808080"/><rect x="0" y="18" width="1" height="1" fill="#808080"/><rect x="0" y="20" width="1" height="1" fill="#808080"/><rect x="0" y="22" width="1" height="1" fill="#808080"/><rect x="0" y="24" width="1" height="1" fill="#808080"/><rect x="0" y="26" width="1" height="1" fill="#808080"/><rect x="0" y="28" width="1" height="1" fill="#808080"/><rect x="0" y="30" width="1" height="1" fill="#808080"/><rect x="0" y="32" width="1" height="1" fill="#808080"/><rect x="0" y="34" width="1" height="1" fill="#808080"/><rect x="0" y="36" width="1" height="1" fill="#808080"/><rect x="0" y="38" width="1" height="1" fill="#808080"/><rect x="0" y="40" width="1" height="1" fill="#808080"/><rect x="0" y="42" width="1" height="1" fill="#808080"/><rect x="0" y="44" width="1" height="1" fill="#808080"/><rect x="0" y="46" width="1" height="1" fill="#808080"/><rect x="0" y="48" width="1" height="1" fill="#808080"/><rect x="0" y="50" width="1" height="1" fill="#808080"/><rect x="0" y="52" width="1" height="1" fill="#808080"/><rect x="0" y="54" width="1" height="1" fill="#808080"/><rect x="0" y="56" width="1" height="1" fill="#808080"/><rect x="0" y="58" width="1" height="1" fill="#808080"/><rect x="0" y="60" width="1" height="1" fill="#808080"/><rect x="0" y="62" width="1" height="1" fill="#808080"/><rect x="0" y="64" width="1" height="1" fill="#808080"/><rect x="0" y="66" width="1" height="1" fill="#808080"/><rect x="0" y="68" width="1" height="1" fill="#808080"/><rect x="0" y="70" width="1" height="1" fill="#808080"/><rect x="0" y="72" width="1" height="1" fill="#808080"/><rect x="0" y="74" width="1" height="1" fill="#808080"/><rect x="0" y="76" width="1" height="1" fill="#808080"/><rect x="0" y="78" width="1" height="1" fill="#808080"/><rect x="0" y="80" width="1" height="1" fill="#808080"/><rect x="0" y="82" width="1" height="1" fill="#808080"/><rect x="0" y="84" width="1" height="1" fill="#808080"/><rect x="0" y="86" width="1" height="1" fill="#808080"/><rect x="0" y="88" width="1" height="1" fill="#808080"/><rect x="0" y="90" width="1" height="1" fill="#808080"/><rect x="0" y="92" width="1" height="1" fill="#808080"/><rect x="0" y="94" width="1" height="1" fill="#808080"/><rect x="0" y="96" width="1" height="1" fill="#808080"/><rect x="0" y="98" width="1" height="1" fill="#808080"/><rect x="0" y="100" width="1" height="1" fill="#808080"/><rect x="0" y="102" width="1" height="1" fill="#808080"/><rect x="0" y="104" width="1" height="1" fill="#808080"/><rect x="0" y="106" width="1" height="1" fill="#808080"/><rect x="0" y="108" width="1" height="1" fill="#808080"/><rect x="0" y="110" width="1" height="1" fill="#808080"/><rect x="0" y="112" width="1" height="1" fill="#808080"/><rect x="0" y="114" width="1" height="1" fill="#808080"/><rect x="0" y="116" width="1" height="1" fill="#808080"/><rect x="0" y="118" width="1" height="1" fill="#808080"/><rect x="0" y="120" width="1" height="1" fill="#808080"/><rect x="0" y="122" width="1" height="1" fill="#808080"/><rect x="0" y="124" width="1" height="1" fill="#808080"/><rect x="0" y="126" width="1" height="1" fill="#808080"/><rect x="0" y="128" width="1" height="1" fill="#808080"/><rect x="0" y="130" width="1" height="1" fill="#808080"/><rect x="0" y="132" width="1" height="1" fill="#808080"/><rect x="0" y="134" width="1" height="1" fill="#808080"/><rect x="0" y="136" width="1" height="1" fill="#808080"/><rect x="0" y="138" width="1" height="1" fill="#808080"/><rect x="0" y="140" width="1" height="1" fill="#808080"/><rect x="0" y="142" width="1" height="1" fill="#808080"/><rect x="0" y="144" width="1" height="1" fill="#808080"/><rect x="0" y="146" width="1" height="1" fill="#808080"/><rect x="0" y="148" width="1" height="1" fill="#808080"/><rect x="0" y="150" width="1" height="1" fill="#808080"/><rect x="0" y="152" width="1" height="1" fill="#808080"/><rect x="0" y="154" width="1" height="1" fill="#808080"/><rect x="0" y="156" width="1" height="1" fill="#808080"/><rect x="0" y="158" width="1" height="1" fill="#808080"/><rect x="0" y="160" width="1" height="1" fill="#808080"/><rect x="0" y="162" width="1" height="1" fill="#808080"/><rect x="0" y="164" width="1" height="1" fill="#808080"/><rect x="0" y="166" width="1" height="1" fill="#808080"/><rect x="0" y="168" width="1" height="1" fill="#808080"/><rect x="0" y="170" width="1" height="1" fill="#808080"/><rect x="0" y="172" width="1" height="1" fill="#808080"/><rect x="0" y="174" width="1" height="1" fill="#808080"/><rect x="0" y="176" width="1" height="1" fill="#808080"/><rect x="0" y="178" width="1" height="1" fill="#808080"/><rect x="0" y="180" width="1" height="1" fill="#808080"/><rect x="0" y="182" width="1" height="1" fill="#808080"/><rect x="0" y="184" width="1" height="1" fill="#808080"/><rect x="0" y="186" width="1" height="1" fill="#808080"/><rect x="0" y="188" width="1" height="1" fill="#808080"/><rect x="0" y="190" width="1" height="1" fill="#808080"/><rect x="0" y="192" width="1" height="1" fill="#808080"/><rect x="0" y="194" width="1" height="1" fill="#808080"/><rect x="0" y="196" width="1" height="1" fill="#808080"/><rect x="0" y="198" width="1" height="1" fill="#808080"/><rect x="0" y="200" width="1" height="1" fill="#808080"/><rect x="0" y="202" width="1" height="1" fill="#808080"/><rect x="0" y="204" width="1" height="1" fill="#808080"/><rect x="0" y="206" width="1" height="1" fill="#808080"/><rect x="0" y="208" width="1" height="1" fill="#808080"/><rect x="0" y="210" width="1" height="1" fill="#808080"/><rect x="0" y="212" width="1" height="1" fill="#808080"/><rect x="0" y="214" width="1" height="1" fill="#808080"/><rect x="0" y="216" width="1" height="1" fill="#808080"/><rect x="0" y="218" width="1" height="1" fill="#808080"/><rect x="0" y="220" width="1" height="1" fill="#808080"/><rect x="0" y="222" width="1" height="1" fill="#808080"/><rect x="0" y="224" width="1" height="1" fill="#808080"/><rect x="0" y="226" width="1" height="1" fill="#808080"/><rect x="0" y="228" width="1" height="1" fill="#808080"/><rect x="0" y="230" width="1" height="1" fill="#808080"/><rect x="0" y="232" width="1" height="1" fill="#808080"/><rect x="0" y="234" width="1" height="1" fill="#808080"/><rect x="0" y="236" width="1" height="1" fill="#808080"/><rect x="0" y="238" width="1" height="1" fill="#808080"/><rect x="0" y="240" width="1" height="1" fill="#808080"/><rect x="0" y="242" width="1" height="1" fill="#808080"/><rect x="0" y="244" width="1" height="1" fill="#808080"/><rect x="0" y="246" width="1" height="1" fill="#808080"/><rect x="0" y="248" width="1" height="1" fill="#808080"/><rect x="0" y="250" width="1" height="1" fill="#808080"/><rect x="0" y="252" width="1" height="1" fill="#808080"/><rect x="0" y="254" width="1" height="1" fill="#808080"/><rect x="0" y="256" width="1" height="1" fill="#808080"/><rect x="0" y="258" width="1" height="1" fill="#808080"/><rect x="0" y="260" width="1" height="1" fill="#808080"/><rect x="0" y="262" width="1" height="1" fill="#808080"/><rect x="0" y="264" width="1" height="1" fill="#808080"/><rect x="0" y="266" width="1" height="1" fill="#808080"/><rect x="0" y="268" width="1" height="1" fill="#808080"/><rect x="0" y="270" width="1" height="1" fill="#808080"/><rect x="0" y="272" width="1" height="1" fill="#808080"/><rect x="0" y="274" width="1" height="1" fill="#808080"/><rect x="0" y="276" width="1" height="1" fill="#808080"/><rect x="0" y="278" width="1" height="1" fill="#808080"/><rect x="0" y="280" width="1" height="1" fill="#808080"/><rect x="0" y="282" width="1" height="1" fill="#808080"/><rect x="0" y="284" width="1" height="1" fill="#808080"/><rect x="0" y="286" width="1" height="1" fill="#808080"/><rect x="0" y="288" width="1" height="1" fill="#808080"/><rect x="0" y="290" width="1" height="1" fill="#808080"/><rect x="0" y="292" width="1" height="1" fill="#808080"/><rect x="0" y="294" width="1" height="1" fill="#808080"/><rect x="0" y="296" width="1" height="1" fill="#808080"/><rect x="0" y="298" width="1" height="1" fill="#808080"/><rect x="0" y="300" width="1" height="1" fill="#808080"/><rect x="0" y="302" width="1" height="1" fill="#808080"/><rect x="0" y="304" width="1" height="1" fill="#808080"/><rect x="0" y="306" width="1" height="1" fill="#808080"/><rect x="0" y="308" width="1" height="1" fill="#808080"/><rect x="0" y="310" width="1" height="1" fill="#808080"/><rect x="0" y="312" width="1" height="1" fill="#808080"/><rect x="0" y="314" width="1" height="1" fill="#808080"/><rect x="0" y="316" width="1" height="1" fill="#808080"/><rect x="0" y="318" width="1" height="1" fill="#808080"/><rect x="0" y="320" width="1" height="1" fill="#808080"/><rect x="0" y="322" width="1" height="1" fill="#808080"/><rect x="0" y="324" width="1" height="1" fill="#808080"/><rect x="0" y="326" width="1" height="1" fill="#808080"/><rect x="0" y="328" width="1" height="1" fill="#808080"/><rect x="0" y="330" width="1" height="1" fill="#808080"/><rect x="0" y="332" width="1" height="1" fill="#808080"/><rect x="0" y="334" width="1" height="1" fill="#808080"/><rect x="0" y="336" width="1" height="1" fill="#808080"/><rect x="0" y="338" width="1" height="1" fill="#808080"/><rect x="0" y="340" width="1" height="1" fill="#808080"/><rect x="0" y="342" width="1" height="1" fill="#808080"/><rect x="0" y="344" width="1" height="1" fill="#808080"/><rect x="0" y="346" width="1" height="1" fill="#808080"/><rect x="0" y="348" width="1" height="1" fill="#808080"/><rect x="0" y="350" width="1" height="1" fill="#808080"/><rect x="0" y="352" width="1" height="1" fill="#808080"/><rect x="0" y="354" width="1" height="1" fill="#808080"/><rect x="0" y="356" width="1" height="1" fill="#808080"/><rect x="0" y="358" width="1" height="1" fill="#808080"/><rect x="0" y="360" width="1" height="1" fill="#808080"/><rect x="0" y="362" width="1" height="1" fill="#808080"/><rect x="0" y="364" width="1" height="1" fill="#808080"/><rect x="0" y="366" width="1" height="1" fill="#808080"/><rect x="0" y="368" width="1" height="1" fill="#808080"/><rect x="0" y="370" width="1" height="1" fill="#808080"/><rect x="0" y="372" width="1" height="1" fill="#808080"/><rect x="0" y="374" width="1" height="1" fill="#808080"/><rect x="0" y="376" width="1" height="1" fill="#808080"/><rect x="0" y="378" width="1" height="1" fill="#808080"/><rect x="0" y="380" width="1" height="1" fill="#808080"/><rect x="0" y="382" width="1" height="1" fill="#808080"/><rect x="0" y="384" width="1" height="1" fill="#808080"/><rect x="0" y="386" width="1" height="1" fill="#808080"/><rect x="0" y="388" width="1" height="1" fill="#808080"/><rect x="0" y="390" width="1" height="1" fill="#808080"/><rect x="0" y="392" width="1" height="1" fill="#808080"/><rect x="0" y="394" width="1" height="1" fill="#808080"/><rect x="0" y="396" width="1" height="1" fill="#808080"/><rect x="0" y="398" width="1" height="1" fill="#808080"/><rect x="0" y="400" width="1" height="1" fill="#808080"/><rect x="0" y="402" width="1" height="1" fill="#808080"/><rect x="0" y="404" width="1" height="1" fill="#808080"/><rect x="0" y="406" width="1" height="1" fill="#808080"/><rect x="0" y="408" width="1" height="1" fill="#808080"/><rect x="0" y="410" width="1" height="1" fill="#808080"/><rect x="0" y="412" width="1" height="1" fill="#808080"/><rect x="0" y="414" width="1" height="1" fill="#808080"/><rect x="0" y="416" width="1" height="1" fill="#808080"/><rect x="0" y="418" width="1" height="1" fill="#808080"/><rect x="0" y="420" width="1" height="1" fill="#808080"/><rect x="0" y="422" width="1" height="1" fill="#808080"/><rect x="0" y="424" width="1" height="1" fill="#808080"/><rect x="0" y="426" width="1" height="1" fill="#808080"/><rect x="0" y="428" width="1" height="1" fill="#808080"/><rect x="0" y="430" width="1" height="1" fill="#808080"/><rect x="0" y="432" width="1" height="1" fill="#808080"/><rect x="0" y="434" width="1" height="1" fill="#808080"/><rect x="0" y="436" width="1" height="1" fill="#808080"/><rect x="0" y="438" width="1" height="1" fill="#808080"/><rect x="0" y="440" width="1" height="1" fill="#808080"/><rect x="0" y="442" width="1" height="1" fill="#808080"/><rect x="0" y="444" width="1" height="1" fill="#808080"/><rect x="0" y="446" width="1" height="1" fill="#808080"/><rect x="0" y="448" width="1" height="1" fill="#808080"/><rect x="0" y="450" width="1" height="1" fill="#808080"/><rect x="0" y="452" width="1" height="1" fill="#808080"/><rect x="0" y="454" width="1" height="1" fill="#808080"/><rect x="0" y="456" width="1" height="1" fill="#808080"/><rect x="0" y="458" width="1" height="1" fill="#808080"/><rect x="0" y="460" width="1" height="1" fill="#808080"/><rect x="0" y="462" width="1" height="1" fill="#808080"/><rect x="0" y="464" width="1" height="1" fill="#808080"/><rect x="0" y="466" width="1" height="1" fill="#808080"/><rect x="0" y="468" width="1" height="1" fill="#808080"/><rect x="0" y="470" width="1" height="1" fill="#808080"/><rect x="0" y="472" width="1" height="1" fill="#808080"/><rect x="0" y="474" width="1" height="1" fill="#808080"/><rect x="0" y="476" width="1" height="1" fill="#808080"/><rect x="0" y="478" width="1" height="1" fill="#808080"/><rect x="0" y="480" width="1" height="1" fill="#808080"/><rect x="0" y="482" width="1" height="1" fill="#808080"/><rect x="0" y="484" width="1" height="1" fill="#808080"/><rect x="0" y="486" width="1" height="1" fill="#808080"/><rect x="0" y="488" width="1" height="1" fill="#808080"/><rect x="0" y="490" width="1" height="1" fill="#808080"/><rect x="0" y="492" width="1" height="1" fill="#808080"/><rect x="0" y="494" width="1" height="1" fill="#808080"/><rect x="0" y="496" width="1" height="1" fill="#808080"/><rect x="0" y="498" width="1" height="1" fill="#808080"/><rect x="0" y="500" width="1" height="1" fill="#808080"/><rect x="0" y="502" width="1" height="1" fill="#808080"/><rect x="0" y="504" width="1" height="1" fill="#808080"/><rect x="0" y="506" width="1" height="1" fill="#808080"/><rect x="0" y="508" width="1" height="1" fill="#808080"/><rect x="0" y="510" width="1" height="1" fill="#808080"/><rect x="0" y="512" width="1" height="1" fill="#808080"/><rect x="0" y="514" width="1" height="1" fill="#808080"/><rect x="0" y="516" width="1" height="1" fill="#808080"/><rect x="0" y="518" width="1" height="1" fill="#808080"/><rect x="0" y="520" width="1" height="1" fill="#808080"/><rect x="0" y="522" width="1" height="1" fill="#808080"/><rect x="0" y="524" width="1" height="1" fill="#808080"/><rect x="0" y="526" width="1" height="1" fill="#808080"/><rect x="0" y="528" width="1" height="1" fill="#808080"/><rect x="0" y="530" width="1" height="1" fill="#808080"/><rect x="0" y="532" width="1" height="1" fill="#808080"/><rect x="0" y="534" width="1" height="1" fill="#808080"/><rect x="0" y="536" width="1" height="1" fill="#808080"/><rect x="0" y="538" width="1" height="1" fill="#808080"/><rect x="0" y="540" width="1" height="1" fill="#808080"/><rect x="0" y="542" width="1" height="1" fill="#808080"/><rect x="0" y="544" width="1" height="1" fill="#808080"/><rect x="0" y="546" width="1" height="1" fill="#808080"/><rect x="0" y="548" width="1" height="1" fill="#808080"/><rect x="0" y="550" width="1" height="1" fill="#808080"/><rect x="0" y="552" width="1" height="1" fill="#808080"/><rect x="0" y="554" width="1" height="1" fill="#808080"/><rect x="0" y="556" width="1" height="1" fill="#808080"/><rect x="0" y="558" width="1" height="1" fill="#808080"/><rect x="0" y="560" width="1" height="1" fill="#808080"/><rect x="0" y="562" width="1" height="1" fill="#808080"/><rect x="0" y="564" width="1" height="1" fill="#808080"/><rect x="0" y="566" width="1" height="1" fill="#808080"/><rect x="0" y="568" width="1" height="1" fill="#808080"/><rect x="0" y="570" width="1" height="1" fill="#808080"/><rect x="0" y="572" width="1" height="1" fill="#808080"/><rect x="0" y="574" width="1" height="1" fill="#808080"/><rect x="0" y="576" width="1" height="1" fill="#808080"/><rect x="0" y="578" width="1" height="1" fill="#808080"/><rect x="0" y="580" width="1" height="1" fill="#808080"/><rect x="0" y="582" width="1" height="1" fill="#808080"/><rect x="0" y="584" width="1" height="1" fill="#808080"/><rect x="0" y="586" width="1" height="1" fill="#808080"/><rect x="0" y="588" width="1" height="1" fill="#808080"/><rect x="0" y="590" width="1" height="1" fill="#808080"/><rect x="0" y="592" width="1" height="1" fill="#808080"/><rect x="0" y="594" width="1" height="1" fill="#808080"/><rect x="0" y="596" width="1" height="1" fill="#808080"/><rect x="0" y="598" width="1" height="1" fill="#808080"/><rect x="0" y="600" width="1" height="1" fill="#808080"/><rect x="0" y="602" width="1" height="1" fill="#808080"/><rect x="0" y="604" width="1" height="1" fill="#808080"/><rect x="0" y="606" width="1" height="1" fill="#808080"/><rect x="0" y="608" width="1" height="1" fill="#808080"/><rect x="0" y="610" width="1" height="1" fill="#808080"/><rect x="0" y="612" width="1" height="1" fill="#808080"/><rect x="0" y="614" width="1" height="1" fill="#808080"/><rect x="0" y="616" width="1" height="1" fill="#808080"/><rect x="0" y="618" width="1" height="1" fill="#808080"/><rect x="0" y="620" width="1" height="1" fill="#808080"/><rect x="0" y="622" width="1" height="1" fill="#808080"/><rect x="0" y="624" width="1" height="1" fill="#808080"/><rect x="0" y="626" width="1" height="1" fill="#808080"/><rect x="0" y="628" width="1" height="1" fill="#808080"/><rect x="0" y="630" width="1" height="1" fill="#808080"/><rect x="0" y="632" width="1" height="1" fill="#808080"/><rect x="0" y="634" width="1" height="1" fill="#808080"/><rect x="0" y="636" width="1" height="1" fill="#808080"/><rect x="0" y="638" width="1" height="1" fill="#808080"/><rect x="0" y="640" width="1" height="1" fill="#808080"/><rect x="0" y="642" width="1" height="1" fill="#808080"/><rect x="0" y="644" width="1" height="1" fill="#808080"/><rect x="0" y="646" width="1" height="1" fill="#808080"/><rect x="0" y="648" width="1" height="1" fill="#808080"/><rect x="0" y="650" width="1" height="1" fill="#808080"/><rect x="0" y="652" width="1" height="1" fill="#808080"/><rect x="0" y="654" width="1" height="1" fill="#808080"/><rect x="0" y="656" width="1" height="1" fill="#808080"/><rect x="0" y="658" width="1" height="1" fill="#808080"/><rect x="0" y="660" width="1" height="1" fill="#808080"/><rect x="0" y="662" width="1" height="1" fill="#808080"/><rect x="0" y="664" width="1" height="1" fill="#808080"/><rect x="0" y="666" width="1" height="1" fill="#808080"/><rect x="0" y="668" width="1" height="1" fill="#808080"/><rect x="0" y="670" width="1" height="1" fill="#808080"/><rect x="0" y="672" width="1" height="1" fill="#808080"/><rect x="0" y="674" width="1" height="1" fill="#808080"/><rect x="0" y="676" width="1" height="1" fill="#808080"/><rect x="0" y="678" width="1" height="1" fill="#808080"/><rect x="0" y="680" width="1" height="1" fill="#808080"/><rect x="0" y="682" width="1" height="1" fill="#808080"/><rect x="0" y="684" width="1" height="1" fill="#808080"/><rect x="0" y="686" width="1" height="1" fill="#808080"/><rect x="0" y="688" width="1" height="1" fill="#808080"/><rect x="0" y="690" width="1" height="1" fill="#808080"/><rect x="0" y="692" width="1" height="1" fill="#808080"/><rect x="0" y="694" width="1" height="1" fill="#808080"/><rect x="0" y="696" width="1" height="1" fill="#808080"/><rect x="0" y="698" width="1" height="1" fill="#808080"/><rect x="0" y="700" width="1" height="1" fill="#808080"/><rect x="0" y="702" width="1" height="1" fill="#808080"/><rect x="0" y="704" width="1" height="1" fill="#808080"/><rect x="0" y="706" width="1" height="1" fill="#808080"/><rect x="0" y="708" width="1" height="1" fill="#808080"/><rect x="0" y="710" width="1" height="1" fill="#808080"/><rect x="0" y="712" width="1" height="1" fill="#808080"/><rect x="0" y="714" width="1" height="1" fill="#808080"/><rect x="0" y="716" width="1" height="1" fill="#808080"/><rect x="0" y="718" width="1" height="1" fill="#808080"/><rect x="0" y="720" width="1" height="1" fill="#808080"/><rect x="0" y="722" width="1" height="1" fill="#808080"/><rect x="0" y="724" width="1" height="1" fill="#808080"/><rect x="0" y="726" width="1" height="1" fill="#808080"/><rect x="0" y="728" width="1" height="1" fill="#808080"/><rect x="0" y="730" width="1" height="1" fill="#808080"/><rect x="0" y="732" width="1" height="1" fill="#808080"/><rect x="0" y="734" width="1" height="1" fill="#808080"/><rect x="0" y="736" width="1" height="1" fill="#808080"/><rect x="0" y="738" width="1" height="1" fill="#808080"/><rect x="0" y="740" width="1" height="1" fill="#808080"/><rect x="0" y="742" width="1" height="1" fill="#808080"/><rect x="0" y="744" width="1" height="1" fill="#808080"/><rect x="0" y="746" width="1" height="1" fill="#808080"/><rect x="0" y="748" width="1" height="1" fill="#808080"/><rect x="0" y="750" width="1" height="1" fill="#808080"/><rect x="0" y="752" width="1" height="1" fill="#808080"/><rect x="0" y="754" width="1" height="1" fill="#808080"/><rect x="0" y="756" width="1" height="1" fill="#808080"/><rect x="0" y="758" width="1" height="1" fill="#808080"/><rect x="0" y="760" width="1" height="1" fill="#808080"/><rect x="0" y="762" width="1" height="1" fill="#808080"/><rect x="0" y="764" width="1" height="1" fill="#808080"/><rect x="0" y="766" width="1" height="1" fill="#808080"/><rect x="0" y="768" width="1" height="1" fill="#808080"/><rect x="0" y="770" width="1" height="1" fill="#808080"/><rect x="0" y="772" width="1" height="1" fill="#808080"/><rect x="0" y="774" width="1" height="1" fill="#808080"/><rect x="0" y="776" width="1" height="1" fill="#808080"/><rect x="0" y="778" width="1" height="1" fill="#808080"/></svg><svg style="position:absolute;left:1742px;top:180px;z-index:3;" width="10" height="1" viewBox="0 0 10 1"><rect x="0" y="0" width="1" height="1" fill="#808080"/><rect x="2" y="0" width="1" height="1" fill="#808080"/><rect x="4" y="0" width="1" height="1" fill="#808080"/><rect x="6" y="0" width="1" height="1" fill="#808080"/><rect x="8" y="0" width="1" height="1" fill="#808080"/></svg><svg style="position:absolute;left:1752px;top:174px;z-index:4;" width="13" height="13" viewBox="0 0 13 13"><rect x=".5" y=".5" width="12" height="12" fill="#fff" stroke="#6d95cf"/><text x="2.2" y="11" font-family="Liberation Serif" font-weight="bold" font-size="12" fill="#000">A</text></svg><div style="position:absolute;left:1771.6px;top:174.24px;font:normal 11px 'Liberation Sans', sans-serif;line-height:12.29px;color:#000;white-space:pre;z-index:5;transform:scaleX(0.8800);transform-origin:0 0;">EMPRESA</div><svg style="position:absolute;left:1742px;top:196px;z-index:3;" width="10" height="1" viewBox="0 0 10 1"><rect x="0" y="0" width="1" height="1" fill="#808080"/><rect x="2" y="0" width="1" height="1" fill="#808080"/><rect x="4" y="0" width="1" height="1" fill="#808080"/><rect x="6" y="0" width="1" height="1" fill="#808080"/><rect x="8" y="0" width="1" height="1" fill="#808080"/></svg><svg style="position:absolute;left:1752px;top:190px;z-index:4;" width="13" height="13" viewBox="0 0 13 13"><rect x=".5" y=".5" width="12" height="12" fill="#fff" stroke="#6d95cf"/><text x="2.2" y="11" font-family="Liberation Serif" font-weight="bold" font-size="12" fill="#000">A</text></svg><div style="position:absolute;left:1771.6px;top:190.24px;font:normal 11px 'Liberation Sans', sans-serif;line-height:12.29px;color:#000;white-space:pre;z-index:5;transform:scaleX(0.8800);transform-origin:0 0;">REGISTRO</div><svg style="position:absolute;left:1742px;top:212px;z-index:3;" width="10" height="1" viewBox="0 0 10 1"><rect x="0" y="0" width="1" height="1" fill="#808080"/><rect x="2" y="0" width="1" height="1" fill="#808080"/><rect x="4" y="0" width="1" height="1" fill="#808080"/><rect x="6" y="0" width="1" height="1" fill="#808080"/><rect x="8" y="0" width="1" height="1" fill="#808080"/></svg><svg style="position:absolute;left:1752px;top:206px;z-index:4;" width="13" height="13" viewBox="0 0 13 13"><rect x=".5" y=".5" width="12" height="12" fill="#fff" stroke="#6d95cf"/><rect x="2" y="8" width="1.5" height="1.5" fill="#000"/><text x="4.5" y="10" font-family="Liberation Sans" font-size="9" fill="#000">0</text></svg><div style="position:absolute;left:1771.6px;top:206.24px;font:normal 11px 'Liberation Sans', sans-serif;line-height:12.29px;color:#000;white-space:pre;z-index:5;transform:scaleX(0.8800);transform-origin:0 0;">MATRICULA</div><svg style="position:absolute;left:1742px;top:228px;z-index:3;" width="10" height="1" viewBox="0 0 10 1"><rect x="0" y="0" width="1" height="1" fill="#808080"/><rect x="2" y="0" width="1" height="1" fill="#808080"/><rect x="4" y="0" width="1" height="1" fill="#808080"/><rect x="6" y="0" width="1" height="1" fill="#808080"/><rect x="8" y="0" width="1" height="1" fill="#808080"/></svg><svg style="position:absolute;left:1752px;top:222px;z-index:4;" width="13" height="13" viewBox="0 0 13 13"><rect x=".5" y=".5" width="12" height="12" fill="#fff" stroke="#6d95cf"/><rect x="2" y="8" width="1.5" height="1.5" fill="#000"/><text x="4.5" y="10" font-family="Liberation Sans" font-size="9" fill="#000">0</text></svg><div style="position:absolute;left:1771.6px;top:222.24px;font:normal 11px 'Liberation Sans', sans-serif;line-height:12.29px;color:#000;white-space:pre;z-index:5;transform:scaleX(0.8800);transform-origin:0 0;">CONTRATO</div><svg style="position:absolute;left:1742px;top:244px;z-index:3;" width="10" height="1" viewBox="0 0 10 1"><rect x="0" y="0" width="1" height="1" fill="#808080"/><rect x="2" y="0" width="1" height="1" fill="#808080"/><rect x="4" y="0" width="1" height="1" fill="#808080"/><rect x="6" y="0" width="1" height="1" fill="#808080"/><rect x="8" y="0" width="1" height="1" fill="#808080"/></svg><svg style="position:absolute;left:1752px;top:238px;z-index:4;" width="13" height="13" viewBox="0 0 13 13"><rect x=".5" y=".5" width="12" height="12" fill="#fff" stroke="#6d95cf"/><rect x="2" y="8" width="1.5" height="1.5" fill="#000"/><text x="4.5" y="10" font-family="Liberation Sans" font-size="9" fill="#000">0</text></svg><div style="position:absolute;left:1771.6px;top:238.24px;font:normal 11px 'Liberation Sans', sans-serif;line-height:12.29px;color:#000;white-space:pre;z-index:5;transform:scaleX(0.8800);transform-origin:0 0;">JORNADA</div><svg style="position:absolute;left:1742px;top:260px;z-index:3;" width="10" height="1" viewBox="0 0 10 1"><rect x="0" y="0" width="1" height="1" fill="#808080"/><rect x="2" y="0" width="1" height="1" fill="#808080"/><rect x="4" y="0" width="1" height="1" fill="#808080"/><rect x="6" y="0" width="1" height="1" fill="#808080"/><rect x="8" y="0" width="1" height="1" fill="#808080"/></svg><svg style="position:absolute;left:1752px;top:254px;z-index:4;" width="13" height="13" viewBox="0 0 13 13"><rect x=".5" y=".5" width="12" height="12" fill="#fff" stroke="#6d95cf"/><rect x="2" y="8" width="1.5" height="1.5" fill="#000"/><text x="4.5" y="10" font-family="Liberation Sans" font-size="9" fill="#000">0</text></svg><div style="position:absolute;left:1771.6px;top:254.24px;font:normal 11px 'Liberation Sans', sans-serif;line-height:12.29px;color:#000;white-space:pre;z-index:5;transform:scaleX(0.8800);transform-origin:0 0;">DEPDESPESA</div><svg style="position:absolute;left:1742px;top:276px;z-index:3;" width="10" height="1" viewBox="0 0 10 1"><rect x="0" y="0" width="1" height="1" fill="#808080"/><rect x="2" y="0" width="1" height="1" fill="#808080"/><rect x="4" y="0" width="1" height="1" fill="#808080"/><rect x="6" y="0" width="1" height="1" fill="#808080"/><rect x="8" y="0" width="1" height="1" fill="#808080"/></svg><svg style="position:absolute;left:1752px;top:270px;z-index:4;" width="13" height="13" viewBox="0 0 13 13"><rect x=".5" y=".5" width="12" height="12" fill="#fff" stroke="#6d95cf"/><text x="2.2" y="11" font-family="Liberation Serif" font-weight="bold" font-size="12" fill="#000">A</text></svg><div style="position:absolute;left:1771.6px;top:270.24px;font:normal 11px 'Liberation Sans', sans-serif;line-height:12.29px;color:#000;white-space:pre;z-index:5;transform:scaleX(0.8800);transform-origin:0 0;">CARGOINICIAL</div><svg style="position:absolute;left:1742px;top:292px;z-index:3;" width="10" height="1" viewBox="0 0 10 1"><rect x="0" y="0" width="1" height="1" fill="#808080"/><rect x="2" y="0" width="1" height="1" fill="#808080"/><rect x="4" y="0" width="1" height="1" fill="#808080"/><rect x="6" y="0" width="1" height="1" fill="#808080"/><rect x="8" y="0" width="1" height="1" fill="#808080"/></svg><svg style="position:absolute;left:1752px;top:286px;z-index:4;" width="13" height="13" viewBox="0 0 13 13"><rect x=".5" y=".5" width="12" height="12" fill="#fff" stroke="#6d95cf"/><text x="2.2" y="11" font-family="Liberation Serif" font-weight="bold" font-size="12" fill="#000">A</text></svg><div style="position:absolute;left:1771.6px;top:286.24px;font:normal 11px 'Liberation Sans', sans-serif;line-height:12.29px;color:#000;white-space:pre;z-index:5;transform:scaleX(0.8800);transform-origin:0 0;">REFSALINICIAL</div><svg style="position:absolute;left:1742px;top:308px;z-index:3;" width="10" height="1" viewBox="0 0 10 1"><rect x="0" y="0" width="1" height="1" fill="#808080"/><rect x="2" y="0" width="1" height="1" fill="#808080"/><rect x="4" y="0" width="1" height="1" fill="#808080"/><rect x="6" y="0" width="1" height="1" fill="#808080"/><rect x="8" y="0" width="1" height="1" fill="#808080"/></svg><svg style="position:absolute;left:1752px;top:302px;z-index:4;" width="13" height="13" viewBox="0 0 13 13"><rect x=".5" y=".5" width="12" height="12" fill="#fff" stroke="#6d95cf"/><text x="2.2" y="11" font-family="Liberation Serif" font-weight="bold" font-size="12" fill="#000">A</text></svg><div style="position:absolute;left:1771.6px;top:302.24px;font:normal 11px 'Liberation Sans', sans-serif;line-height:12.29px;color:#000;white-space:pre;z-index:5;transform:scaleX(0.8800);transform-origin:0 0;">CARGOATUAL</div><svg style="position:absolute;left:1742px;top:324px;z-index:3;" width="10" height="1" viewBox="0 0 10 1"><rect x="0" y="0" width="1" height="1" fill="#808080"/><rect x="2" y="0" width="1" height="1" fill="#808080"/><rect x="4" y="0" width="1" height="1" fill="#808080"/><rect x="6" y="0" width="1" height="1" fill="#808080"/><rect x="8" y="0" width="1" height="1" fill="#808080"/></svg><svg style="position:absolute;left:1752px;top:318px;z-index:4;" width="13" height="13" viewBox="0 0 13 13"><rect x=".5" y=".5" width="12" height="12" fill="#fff" stroke="#6d95cf"/><text x="2.2" y="11" font-family="Liberation Serif" font-weight="bold" font-size="12" fill="#000">A</text></svg><div style="position:absolute;left:1771.6px;top:318.24px;font:normal 11px 'Liberation Sans', sans-serif;line-height:12.29px;color:#000;white-space:pre;z-index:5;transform:scaleX(0.8800);transform-origin:0 0;">REFSALATUAL</div><svg style="position:absolute;left:1742px;top:340px;z-index:3;" width="10" height="1" viewBox="0 0 10 1"><rect x="0" y="0" width="1" height="1" fill="#808080"/><rect x="2" y="0" width="1" height="1" fill="#808080"/><rect x="4" y="0" width="1" height="1" fill="#808080"/><rect x="6" y="0" width="1" height="1" fill="#808080"/><rect x="8" y="0" width="1" height="1" fill="#808080"/></svg><svg style="position:absolute;left:1752px;top:334px;z-index:4;" width="13" height="13" viewBox="0 0 13 13"><rect x=".5" y=".5" width="12" height="12" fill="#fff" stroke="#6d95cf"/><text x="2.2" y="11" font-family="Liberation Serif" font-weight="bold" font-size="12" fill="#000">A</text></svg><div style="position:absolute;left:1771.6px;top:334.24px;font:normal 11px 'Liberation Sans', sans-serif;line-height:12.29px;color:#000;white-space:pre;z-index:5;transform:scaleX(0.8800);transform-origin:0 0;">VINCULO</div><svg style="position:absolute;left:1742px;top:356px;z-index:3;" width="10" height="1" viewBox="0 0 10 1"><rect x="0" y="0" width="1" height="1" fill="#808080"/><rect x="2" y="0" width="1" height="1" fill="#808080"/><rect x="4" y="0" width="1" height="1" fill="#808080"/><rect x="6" y="0" width="1" height="1" fill="#808080"/><rect x="8" y="0" width="1" height="1" fill="#808080"/></svg><svg style="position:absolute;left:1752px;top:350px;z-index:4;" width="13" height="13" viewBox="0 0 13 13"><rect x=".5" y=".5" width="12" height="12" fill="#fff" stroke="#6d95cf"/><text x="2.2" y="11" font-family="Liberation Serif" font-weight="bold" font-size="12" fill="#000">A</text></svg><div style="position:absolute;left:1771.6px;top:350.24px;font:normal 11px 'Liberation Sans', sans-serif;line-height:12.29px;color:#000;white-space:pre;z-index:5;transform:scaleX(0.8800);transform-origin:0 0;">SITUACAO</div><svg style="position:absolute;left:1742px;top:372px;z-index:3;" width="10" height="1" viewBox="0 0 10 1"><rect x="0" y="0" width="1" height="1" fill="#808080"/><rect x="2" y="0" width="1" height="1" fill="#808080"/><rect x="4" y="0" width="1" height="1" fill="#808080"/><rect x="6" y="0" width="1" height="1" fill="#808080"/><rect x="8" y="0" width="1" height="1" fill="#808080"/></svg><svg style="position:absolute;left:1752px;top:366px;z-index:4;" width="13" height="13" viewBox="0 0 13 13"><rect x=".5" y=".5" width="12" height="12" fill="#fff" stroke="#6d95cf"/><text x="2.2" y="11" font-family="Liberation Serif" font-weight="bold" font-size="12" fill="#000">A</text></svg><div style="position:absolute;left:1771.6px;top:366.24px;font:normal 11px 'Liberation Sans', sans-serif;line-height:12.29px;color:#000;white-space:pre;z-index:5;transform:scaleX(0.8800);transform-origin:0 0;">NOME</div><svg style="position:absolute;left:1742px;top:388px;z-index:3;" width="10" height="1" viewBox="0 0 10 1"><rect x="0" y="0" width="1" height="1" fill="#808080"/><rect x="2" y="0" width="1" height="1" fill="#808080"/><rect x="4" y="0" width="1" height="1" fill="#808080"/><rect x="6" y="0" width="1" height="1" fill="#808080"/><rect x="8" y="0" width="1" height="1" fill="#808080"/></svg><svg style="position:absolute;left:1752px;top:382px;z-index:4;" width="13" height="13" viewBox="0 0 13 13"><rect x=".5" y=".5" width="12" height="12" fill="#fff" stroke="#6d95cf"/><text x="2.2" y="11" font-family="Liberation Serif" font-weight="bold" font-size="12" fill="#000">A</text></svg><div style="position:absolute;left:1771.6px;top:382.24px;font:normal 11px 'Liberation Sans', sans-serif;line-height:12.29px;color:#000;white-space:pre;z-index:5;transform:scaleX(0.8800);transform-origin:0 0;">SEXO</div><svg style="position:absolute;left:1742px;top:404px;z-index:3;" width="10" height="1" viewBox="0 0 10 1"><rect x="0" y="0" width="1" height="1" fill="#808080"/><rect x="2" y="0" width="1" height="1" fill="#808080"/><rect x="4" y="0" width="1" height="1" fill="#808080"/><rect x="6" y="0" width="1" height="1" fill="#808080"/><rect x="8" y="0" width="1" height="1" fill="#808080"/></svg><svg style="position:absolute;left:1752px;top:398px;z-index:4;" width="13" height="13" viewBox="0 0 13 13"><rect x=".5" y=".5" width="12" height="12" fill="#fff" stroke="#6d95cf"/><text x="2.2" y="11" font-family="Liberation Serif" font-weight="bold" font-size="12" fill="#000">A</text></svg><div style="position:absolute;left:1771.6px;top:398.24px;font:normal 11px 'Liberation Sans', sans-serif;line-height:12.29px;color:#000;white-space:pre;z-index:5;transform:scaleX(0.8800);transform-origin:0 0;">NACIONALIDADE</div><svg style="position:absolute;left:1742px;top:420px;z-index:3;" width="10" height="1" viewBox="0 0 10 1"><rect x="0" y="0" width="1" height="1" fill="#808080"/><rect x="2" y="0" width="1" height="1" fill="#808080"/><rect x="4" y="0" width="1" height="1" fill="#808080"/><rect x="6" y="0" width="1" height="1" fill="#808080"/><rect x="8" y="0" width="1" height="1" fill="#808080"/></svg><svg style="position:absolute;left:1752px;top:414px;z-index:4;" width="13" height="13" viewBox="0 0 13 13"><rect x=".5" y=".5" width="12" height="12" fill="#fff" stroke="#6d95cf"/><text x="2.2" y="11" font-family="Liberation Serif" font-weight="bold" font-size="12" fill="#000">A</text></svg><div style="position:absolute;left:1771.6px;top:414.24px;font:normal 11px 'Liberation Sans', sans-serif;line-height:12.29px;color:#000;white-space:pre;z-index:5;transform:scaleX(0.8800);transform-origin:0 0;">ANOCHEGADA</div><svg style="position:absolute;left:1742px;top:436px;z-index:3;" width="10" height="1" viewBox="0 0 10 1"><rect x="0" y="0" width="1" height="1" fill="#808080"/><rect x="2" y="0" width="1" height="1" fill="#808080"/><rect x="4" y="0" width="1" height="1" fill="#808080"/><rect x="6" y="0" width="1" height="1" fill="#808080"/><rect x="8" y="0" width="1" height="1" fill="#808080"/></svg><svg style="position:absolute;left:1752px;top:430px;z-index:4;" width="13" height="13" viewBox="0 0 13 13"><rect x=".5" y="1.5" width="12" height="11" fill="#f4f8fd" stroke="#9ab8e0"/><rect x="1" y="2" width="11" height="2.5" fill="#6d9be0"/><rect x="2.0" y="6.0" width="1.6" height="1.4" fill="#8aa8d8"/><rect x="2.0" y="8.2" width="1.6" height="1.4" fill="#8aa8d8"/><rect x="2.0" y="10.4" width="1.6" height="1.4" fill="#8aa8d8"/><rect x="4.6" y="6.0" width="1.6" height="1.4" fill="#8aa8d8"/><rect x="4.6" y="8.2" width="1.6" height="1.4" fill="#8aa8d8"/><rect x="4.6" y="10.4" width="1.6" height="1.4" fill="#8aa8d8"/><rect x="7.2" y="6.0" width="1.6" height="1.4" fill="#8aa8d8"/><rect x="7.2" y="8.2" width="1.6" height="1.4" fill="#8aa8d8"/><rect x="7.2" y="10.4" width="1.6" height="1.4" fill="#8aa8d8"/><rect x="9.8" y="6.0" width="1.6" height="1.4" fill="#8aa8d8"/><rect x="9.8" y="8.2" width="1.6" height="1.4" fill="#8aa8d8"/><rect x="9.8" y="10.4" width="1.6" height="1.4" fill="#8aa8d8"/><rect x="9.8" y="10.4" width="1.6" height="1.4" fill="#e05030"/></svg><div style="position:absolute;left:1771.6px;top:430.24px;font:normal 11px 'Liberation Sans', sans-serif;line-height:12.29px;color:#000;white-space:pre;z-index:5;transform:scaleX(0.8800);transform-origin:0 0;">DTNASCIMENTO</div><svg style="position:absolute;left:1742px;top:452px;z-index:3;" width="10" height="1" viewBox="0 0 10 1"><rect x="0" y="0" width="1" height="1" fill="#808080"/><rect x="2" y="0" width="1" height="1" fill="#808080"/><rect x="4" y="0" width="1" height="1" fill="#808080"/><rect x="6" y="0" width="1" height="1" fill="#808080"/><rect x="8" y="0" width="1" height="1" fill="#808080"/></svg><svg style="position:absolute;left:1752px;top:446px;z-index:4;" width="13" height="13" viewBox="0 0 13 13"><rect x=".5" y=".5" width="12" height="12" fill="#fff" stroke="#6d95cf"/><text x="2.2" y="11" font-family="Liberation Serif" font-weight="bold" font-size="12" fill="#000">A</text></svg><div style="position:absolute;left:1771.6px;top:446.24px;font:normal 11px 'Liberation Sans', sans-serif;line-height:12.29px;color:#000;white-space:pre;z-index:5;transform:scaleX(0.8800);transform-origin:0 0;">INSTRUCAO</div><svg style="position:absolute;left:1742px;top:468px;z-index:3;" width="10" height="1" viewBox="0 0 10 1"><rect x="0" y="0" width="1" height="1" fill="#808080"/><rect x="2" y="0" width="1" height="1" fill="#808080"/><rect x="4" y="0" width="1" height="1" fill="#808080"/><rect x="6" y="0" width="1" height="1" fill="#808080"/><rect x="8" y="0" width="1" height="1" fill="#808080"/></svg><svg style="position:absolute;left:1752px;top:462px;z-index:4;" width="13" height="13" viewBox="0 0 13 13"><rect x=".5" y=".5" width="12" height="12" fill="#fff" stroke="#6d95cf"/><text x="2.2" y="11" font-family="Liberation Serif" font-weight="bold" font-size="12" fill="#000">A</text></svg><div style="position:absolute;left:1771.6px;top:462.24px;font:normal 11px 'Liberation Sans', sans-serif;line-height:12.29px;color:#000;white-space:pre;z-index:5;transform:scaleX(0.8800);transform-origin:0 0;">ESTADOCIVIL</div><svg style="position:absolute;left:1742px;top:484px;z-index:3;" width="10" height="1" viewBox="0 0 10 1"><rect x="0" y="0" width="1" height="1" fill="#808080"/><rect x="2" y="0" width="1" height="1" fill="#808080"/><rect x="4" y="0" width="1" height="1" fill="#808080"/><rect x="6" y="0" width="1" height="1" fill="#808080"/><rect x="8" y="0" width="1" height="1" fill="#808080"/></svg><svg style="position:absolute;left:1752px;top:478px;z-index:4;" width="13" height="13" viewBox="0 0 13 13"><rect x=".5" y=".5" width="12" height="12" fill="#fff" stroke="#6d95cf"/><text x="2.2" y="11" font-family="Liberation Serif" font-weight="bold" font-size="12" fill="#000">A</text></svg><div style="position:absolute;left:1771.6px;top:478.24px;font:normal 11px 'Liberation Sans', sans-serif;line-height:12.29px;color:#000;white-space:pre;z-index:5;transform:scaleX(0.8800);transform-origin:0 0;">NOMEPAI</div><svg style="position:absolute;left:1742px;top:500px;z-index:3;" width="10" height="1" viewBox="0 0 10 1"><rect x="0" y="0" width="1" height="1" fill="#808080"/><rect x="2" y="0" width="1" height="1" fill="#808080"/><rect x="4" y="0" width="1" height="1" fill="#808080"/><rect x="6" y="0" width="1" height="1" fill="#808080"/><rect x="8" y="0" width="1" height="1" fill="#808080"/></svg><svg style="position:absolute;left:1752px;top:494px;z-index:4;" width="13" height="13" viewBox="0 0 13 13"><rect x=".5" y=".5" width="12" height="12" fill="#fff" stroke="#6d95cf"/><text x="2.2" y="11" font-family="Liberation Serif" font-weight="bold" font-size="12" fill="#000">A</text></svg><div style="position:absolute;left:1771.6px;top:494.24px;font:normal 11px 'Liberation Sans', sans-serif;line-height:12.29px;color:#000;white-space:pre;z-index:5;transform:scaleX(0.8800);transform-origin:0 0;">NOMEMAE</div><svg style="position:absolute;left:1742px;top:516px;z-index:3;" width="10" height="1" viewBox="0 0 10 1"><rect x="0" y="0" width="1" height="1" fill="#808080"/><rect x="2" y="0" width="1" height="1" fill="#808080"/><rect x="4" y="0" width="1" height="1" fill="#808080"/><rect x="6" y="0" width="1" height="1" fill="#808080"/><rect x="8" y="0" width="1" height="1" fill="#808080"/></svg><svg style="position:absolute;left:1752px;top:510px;z-index:4;" width="13" height="13" viewBox="0 0 13 13"><rect x=".5" y=".5" width="12" height="12" fill="#fff" stroke="#6d95cf"/><text x="2.2" y="11" font-family="Liberation Serif" font-weight="bold" font-size="12" fill="#000">A</text></svg><div style="position:absolute;left:1771.6px;top:510.24px;font:normal 11px 'Liberation Sans', sans-serif;line-height:12.29px;color:#000;white-space:pre;z-index:5;transform:scaleX(0.8800);transform-origin:0 0;">CEP</div><svg style="position:absolute;left:1742px;top:532px;z-index:3;" width="10" height="1" viewBox="0 0 10 1"><rect x="0" y="0" width="1" height="1" fill="#808080"/><rect x="2" y="0" width="1" height="1" fill="#808080"/><rect x="4" y="0" width="1" height="1" fill="#808080"/><rect x="6" y="0" width="1" height="1" fill="#808080"/><rect x="8" y="0" width="1" height="1" fill="#808080"/></svg><svg style="position:absolute;left:1752px;top:526px;z-index:4;" width="13" height="13" viewBox="0 0 13 13"><rect x=".5" y=".5" width="12" height="12" fill="#fff" stroke="#6d95cf"/><text x="2.2" y="11" font-family="Liberation Serif" font-weight="bold" font-size="12" fill="#000">A</text></svg><div style="position:absolute;left:1771.6px;top:526.24px;font:normal 11px 'Liberation Sans', sans-serif;line-height:12.29px;color:#000;white-space:pre;z-index:5;transform:scaleX(0.8800);transform-origin:0 0;">ENDERECO</div><svg style="position:absolute;left:1742px;top:548px;z-index:3;" width="10" height="1" viewBox="0 0 10 1"><rect x="0" y="0" width="1" height="1" fill="#808080"/><rect x="2" y="0" width="1" height="1" fill="#808080"/><rect x="4" y="0" width="1" height="1" fill="#808080"/><rect x="6" y="0" width="1" height="1" fill="#808080"/><rect x="8" y="0" width="1" height="1" fill="#808080"/></svg><svg style="position:absolute;left:1752px;top:542px;z-index:4;" width="13" height="13" viewBox="0 0 13 13"><rect x=".5" y=".5" width="12" height="12" fill="#fff" stroke="#6d95cf"/><text x="2.2" y="11" font-family="Liberation Serif" font-weight="bold" font-size="12" fill="#000">A</text></svg><div style="position:absolute;left:1771.6px;top:542.24px;font:normal 11px 'Liberation Sans', sans-serif;line-height:12.29px;color:#000;white-space:pre;z-index:5;transform:scaleX(0.8800);transform-origin:0 0;">NUMERO</div><svg style="position:absolute;left:1742px;top:564px;z-index:3;" width="10" height="1" viewBox="0 0 10 1"><rect x="0" y="0" width="1" height="1" fill="#808080"/><rect x="2" y="0" width="1" height="1" fill="#808080"/><rect x="4" y="0" width="1" height="1" fill="#808080"/><rect x="6" y="0" width="1" height="1" fill="#808080"/><rect x="8" y="0" width="1" height="1" fill="#808080"/></svg><svg style="position:absolute;left:1752px;top:558px;z-index:4;" width="13" height="13" viewBox="0 0 13 13"><rect x=".5" y=".5" width="12" height="12" fill="#fff" stroke="#6d95cf"/><text x="2.2" y="11" font-family="Liberation Serif" font-weight="bold" font-size="12" fill="#000">A</text></svg><div style="position:absolute;left:1771.6px;top:558.24px;font:normal 11px 'Liberation Sans', sans-serif;line-height:12.29px;color:#000;white-space:pre;z-index:5;transform:scaleX(0.8800);transform-origin:0 0;">BAIRRO</div><svg style="position:absolute;left:1742px;top:580px;z-index:3;" width="10" height="1" viewBox="0 0 10 1"><rect x="0" y="0" width="1" height="1" fill="#808080"/><rect x="2" y="0" width="1" height="1" fill="#808080"/><rect x="4" y="0" width="1" height="1" fill="#808080"/><rect x="6" y="0" width="1" height="1" fill="#808080"/><rect x="8" y="0" width="1" height="1" fill="#808080"/></svg><svg style="position:absolute;left:1752px;top:574px;z-index:4;" width="13" height="13" viewBox="0 0 13 13"><rect x=".5" y=".5" width="12" height="12" fill="#fff" stroke="#6d95cf"/><text x="2.2" y="11" font-family="Liberation Serif" font-weight="bold" font-size="12" fill="#000">A</text></svg><div style="position:absolute;left:1771.6px;top:574.24px;font:normal 11px 'Liberation Sans', sans-serif;line-height:12.29px;color:#000;white-space:pre;z-index:5;transform:scaleX(0.8800);transform-origin:0 0;">COMPL</div><svg style="position:absolute;left:1742px;top:596px;z-index:3;" width="10" height="1" viewBox="0 0 10 1"><rect x="0" y="0" width="1" height="1" fill="#808080"/><rect x="2" y="0" width="1" height="1" fill="#808080"/><rect x="4" y="0" width="1" height="1" fill="#808080"/><rect x="6" y="0" width="1" height="1" fill="#808080"/><rect x="8" y="0" width="1" height="1" fill="#808080"/></svg><svg style="position:absolute;left:1752px;top:590px;z-index:4;" width="13" height="13" viewBox="0 0 13 13"><rect x=".5" y=".5" width="12" height="12" fill="#fff" stroke="#6d95cf"/><text x="2.2" y="11" font-family="Liberation Serif" font-weight="bold" font-size="12" fill="#000">A</text></svg><div style="position:absolute;left:1771.6px;top:590.24px;font:normal 11px 'Liberation Sans', sans-serif;line-height:12.29px;color:#000;white-space:pre;z-index:5;transform:scaleX(0.8800);transform-origin:0 0;">CIDADE</div><svg style="position:absolute;left:1742px;top:612px;z-index:3;" width="10" height="1" viewBox="0 0 10 1"><rect x="0" y="0" width="1" height="1" fill="#808080"/><rect x="2" y="0" width="1" height="1" fill="#808080"/><rect x="4" y="0" width="1" height="1" fill="#808080"/><rect x="6" y="0" width="1" height="1" fill="#808080"/><rect x="8" y="0" width="1" height="1" fill="#808080"/></svg><svg style="position:absolute;left:1752px;top:606px;z-index:4;" width="13" height="13" viewBox="0 0 13 13"><rect x=".5" y=".5" width="12" height="12" fill="#fff" stroke="#6d95cf"/><text x="2.2" y="11" font-family="Liberation Serif" font-weight="bold" font-size="12" fill="#000">A</text></svg><div style="position:absolute;left:1771.6px;top:606.24px;font:normal 11px 'Liberation Sans', sans-serif;line-height:12.29px;color:#000;white-space:pre;z-index:5;transform:scaleX(0.8800);transform-origin:0 0;">UF</div><svg style="position:absolute;left:1742px;top:628px;z-index:3;" width="10" height="1" viewBox="0 0 10 1"><rect x="0" y="0" width="1" height="1" fill="#808080"/><rect x="2" y="0" width="1" height="1" fill="#808080"/><rect x="4" y="0" width="1" height="1" fill="#808080"/><rect x="6" y="0" width="1" height="1" fill="#808080"/><rect x="8" y="0" width="1" height="1" fill="#808080"/></svg><svg style="position:absolute;left:1752px;top:622px;z-index:4;" width="13" height="13" viewBox="0 0 13 13"><rect x=".5" y=".5" width="12" height="12" fill="#fff" stroke="#6d95cf"/><text x="2.2" y="11" font-family="Liberation Serif" font-weight="bold" font-size="12" fill="#000">A</text></svg><div style="position:absolute;left:1771.6px;top:622.24px;font:normal 11px 'Liberation Sans', sans-serif;line-height:12.29px;color:#000;white-space:pre;z-index:5;transform:scaleX(0.8800);transform-origin:0 0;">TELEFONE</div><svg style="position:absolute;left:1742px;top:644px;z-index:3;" width="10" height="1" viewBox="0 0 10 1"><rect x="0" y="0" width="1" height="1" fill="#808080"/><rect x="2" y="0" width="1" height="1" fill="#808080"/><rect x="4" y="0" width="1" height="1" fill="#808080"/><rect x="6" y="0" width="1" height="1" fill="#808080"/><rect x="8" y="0" width="1" height="1" fill="#808080"/></svg><svg style="position:absolute;left:1752px;top:638px;z-index:4;" width="13" height="13" viewBox="0 0 13 13"><rect x=".5" y=".5" width="12" height="12" fill="#fff" stroke="#6d95cf"/><text x="2.2" y="11" font-family="Liberation Serif" font-weight="bold" font-size="12" fill="#000">A</text></svg><div style="position:absolute;left:1771.6px;top:638.24px;font:normal 11px 'Liberation Sans', sans-serif;line-height:12.29px;color:#000;white-space:pre;z-index:5;transform:scaleX(0.8800);transform-origin:0 0;">PIS</div><svg style="position:absolute;left:1742px;top:660px;z-index:3;" width="10" height="1" viewBox="0 0 10 1"><rect x="0" y="0" width="1" height="1" fill="#808080"/><rect x="2" y="0" width="1" height="1" fill="#808080"/><rect x="4" y="0" width="1" height="1" fill="#808080"/><rect x="6" y="0" width="1" height="1" fill="#808080"/><rect x="8" y="0" width="1" height="1" fill="#808080"/></svg><svg style="position:absolute;left:1752px;top:654px;z-index:4;" width="13" height="13" viewBox="0 0 13 13"><rect x=".5" y=".5" width="12" height="12" fill="#fff" stroke="#6d95cf"/><text x="2.2" y="11" font-family="Liberation Serif" font-weight="bold" font-size="12" fill="#000">A</text></svg><div style="position:absolute;left:1771.6px;top:654.24px;font:normal 11px 'Liberation Sans', sans-serif;line-height:12.29px;color:#000;white-space:pre;z-index:5;transform:scaleX(0.8800);transform-origin:0 0;">CPF</div><svg style="position:absolute;left:1742px;top:676px;z-index:3;" width="10" height="1" viewBox="0 0 10 1"><rect x="0" y="0" width="1" height="1" fill="#808080"/><rect x="2" y="0" width="1" height="1" fill="#808080"/><rect x="4" y="0" width="1" height="1" fill="#808080"/><rect x="6" y="0" width="1" height="1" fill="#808080"/><rect x="8" y="0" width="1" height="1" fill="#808080"/></svg><svg style="position:absolute;left:1752px;top:670px;z-index:4;" width="13" height="13" viewBox="0 0 13 13"><rect x=".5" y=".5" width="12" height="12" fill="#fff" stroke="#6d95cf"/><text x="2.2" y="11" font-family="Liberation Serif" font-weight="bold" font-size="12" fill="#000">A</text></svg><div style="position:absolute;left:1771.6px;top:670.24px;font:normal 11px 'Liberation Sans', sans-serif;line-height:12.29px;color:#000;white-space:pre;z-index:5;transform:scaleX(0.8800);transform-origin:0 0;">RG</div><svg style="position:absolute;left:1742px;top:692px;z-index:3;" width="10" height="1" viewBox="0 0 10 1"><rect x="0" y="0" width="1" height="1" fill="#808080"/><rect x="2" y="0" width="1" height="1" fill="#808080"/><rect x="4" y="0" width="1" height="1" fill="#808080"/><rect x="6" y="0" width="1" height="1" fill="#808080"/><rect x="8" y="0" width="1" height="1" fill="#808080"/></svg><svg style="position:absolute;left:1752px;top:686px;z-index:4;" width="13" height="13" viewBox="0 0 13 13"><rect x=".5" y=".5" width="12" height="12" fill="#fff" stroke="#6d95cf"/><text x="2.2" y="11" font-family="Liberation Serif" font-weight="bold" font-size="12" fill="#000">A</text></svg><div style="position:absolute;left:1771.6px;top:686.24px;font:normal 11px 'Liberation Sans', sans-serif;line-height:12.29px;color:#000;white-space:pre;z-index:5;transform:scaleX(0.8800);transform-origin:0 0;">CTPS</div><svg style="position:absolute;left:1742px;top:708px;z-index:3;" width="10" height="1" viewBox="0 0 10 1"><rect x="0" y="0" width="1" height="1" fill="#808080"/><rect x="2" y="0" width="1" height="1" fill="#808080"/><rect x="4" y="0" width="1" height="1" fill="#808080"/><rect x="6" y="0" width="1" height="1" fill="#808080"/><rect x="8" y="0" width="1" height="1" fill="#808080"/></svg><svg style="position:absolute;left:1752px;top:702px;z-index:4;" width="13" height="13" viewBox="0 0 13 13"><rect x=".5" y=".5" width="12" height="12" fill="#fff" stroke="#6d95cf"/><text x="2.2" y="11" font-family="Liberation Serif" font-weight="bold" font-size="12" fill="#000">A</text></svg><div style="position:absolute;left:1771.6px;top:702.24px;font:normal 11px 'Liberation Sans', sans-serif;line-height:12.29px;color:#000;white-space:pre;z-index:5;transform:scaleX(0.8800);transform-origin:0 0;">SERIE</div><svg style="position:absolute;left:1742px;top:724px;z-index:3;" width="10" height="1" viewBox="0 0 10 1"><rect x="0" y="0" width="1" height="1" fill="#808080"/><rect x="2" y="0" width="1" height="1" fill="#808080"/><rect x="4" y="0" width="1" height="1" fill="#808080"/><rect x="6" y="0" width="1" height="1" fill="#808080"/><rect x="8" y="0" width="1" height="1" fill="#808080"/></svg><svg style="position:absolute;left:1752px;top:718px;z-index:4;" width="13" height="13" viewBox="0 0 13 13"><rect x=".5" y=".5" width="12" height="12" fill="#fff" stroke="#6d95cf"/><text x="2.2" y="11" font-family="Liberation Serif" font-weight="bold" font-size="12" fill="#000">A</text></svg><div style="position:absolute;left:1771.6px;top:718.24px;font:normal 11px 'Liberation Sans', sans-serif;line-height:12.29px;color:#000;white-space:pre;z-index:5;transform:scaleX(0.8800);transform-origin:0 0;">UFCTPS</div><svg style="position:absolute;left:1742px;top:740px;z-index:3;" width="10" height="1" viewBox="0 0 10 1"><rect x="0" y="0" width="1" height="1" fill="#808080"/><rect x="2" y="0" width="1" height="1" fill="#808080"/><rect x="4" y="0" width="1" height="1" fill="#808080"/><rect x="6" y="0" width="1" height="1" fill="#808080"/><rect x="8" y="0" width="1" height="1" fill="#808080"/></svg><svg style="position:absolute;left:1752px;top:734px;z-index:4;" width="13" height="13" viewBox="0 0 13 13"><rect x=".5" y="1.5" width="12" height="11" fill="#f4f8fd" stroke="#9ab8e0"/><rect x="1" y="2" width="11" height="2.5" fill="#6d9be0"/><rect x="2.0" y="6.0" width="1.6" height="1.4" fill="#8aa8d8"/><rect x="2.0" y="8.2" width="1.6" height="1.4" fill="#8aa8d8"/><rect x="2.0" y="10.4" width="1.6" height="1.4" fill="#8aa8d8"/><rect x="4.6" y="6.0" width="1.6" height="1.4" fill="#8aa8d8"/><rect x="4.6" y="8.2" width="1.6" height="1.4" fill="#8aa8d8"/><rect x="4.6" y="10.4" width="1.6" height="1.4" fill="#8aa8d8"/><rect x="7.2" y="6.0" width="1.6" height="1.4" fill="#8aa8d8"/><rect x="7.2" y="8.2" width="1.6" height="1.4" fill="#8aa8d8"/><rect x="7.2" y="10.4" width="1.6" height="1.4" fill="#8aa8d8"/><rect x="9.8" y="6.0" width="1.6" height="1.4" fill="#8aa8d8"/><rect x="9.8" y="8.2" width="1.6" height="1.4" fill="#8aa8d8"/><rect x="9.8" y="10.4" width="1.6" height="1.4" fill="#8aa8d8"/><rect x="9.8" y="10.4" width="1.6" height="1.4" fill="#e05030"/></svg><div style="position:absolute;left:1771.6px;top:734.24px;font:normal 11px 'Liberation Sans', sans-serif;line-height:12.29px;color:#000;white-space:pre;z-index:5;transform:scaleX(0.8800);transform-origin:0 0;">CNH_DTEXPEDIDA</div><svg style="position:absolute;left:1742px;top:756px;z-index:3;" width="10" height="1" viewBox="0 0 10 1"><rect x="0" y="0" width="1" height="1" fill="#808080"/><rect x="2" y="0" width="1" height="1" fill="#808080"/><rect x="4" y="0" width="1" height="1" fill="#808080"/><rect x="6" y="0" width="1" height="1" fill="#808080"/><rect x="8" y="0" width="1" height="1" fill="#808080"/></svg><svg style="position:absolute;left:1752px;top:750px;z-index:4;" width="13" height="13" viewBox="0 0 13 13"><rect x=".5" y=".5" width="12" height="12" fill="#fff" stroke="#6d95cf"/><text x="2.2" y="11" font-family="Liberation Serif" font-weight="bold" font-size="12" fill="#000">A</text></svg><div style="position:absolute;left:1771.6px;top:750.24px;font:normal 11px 'Liberation Sans', sans-serif;line-height:12.29px;color:#000;white-space:pre;z-index:5;transform:scaleX(0.8800);transform-origin:0 0;">CNH_NUMERO</div><svg style="position:absolute;left:1742px;top:772px;z-index:3;" width="10" height="1" viewBox="0 0 10 1"><rect x="0" y="0" width="1" height="1" fill="#808080"/><rect x="2" y="0" width="1" height="1" fill="#808080"/><rect x="4" y="0" width="1" height="1" fill="#808080"/><rect x="6" y="0" width="1" height="1" fill="#808080"/><rect x="8" y="0" width="1" height="1" fill="#808080"/></svg><svg style="position:absolute;left:1752px;top:766px;z-index:4;" width="13" height="13" viewBox="0 0 13 13"><rect x=".5" y=".5" width="12" height="12" fill="#fff" stroke="#6d95cf"/><text x="2.2" y="11" font-family="Liberation Serif" font-weight="bold" font-size="12" fill="#000">A</text></svg><div style="position:absolute;left:1771.6px;top:766.24px;font:normal 11px 'Liberation Sans', sans-serif;line-height:12.29px;color:#000;white-space:pre;z-index:5;transform:scaleX(0.8800);transform-origin:0 0;">CNH_UF</div><svg style="position:absolute;left:1742px;top:788px;z-index:3;" width="10" height="1" viewBox="0 0 10 1"><rect x="0" y="0" width="1" height="1" fill="#808080"/><rect x="2" y="0" width="1" height="1" fill="#808080"/><rect x="4" y="0" width="1" height="1" fill="#808080"/><rect x="6" y="0" width="1" height="1" fill="#808080"/><rect x="8" y="0" width="1" height="1" fill="#808080"/></svg><svg style="position:absolute;left:1752px;top:782px;z-index:4;" width="13" height="13" viewBox="0 0 13 13"><rect x=".5" y="1.5" width="12" height="11" fill="#f4f8fd" stroke="#9ab8e0"/><rect x="1" y="2" width="11" height="2.5" fill="#6d9be0"/><rect x="2.0" y="6.0" width="1.6" height="1.4" fill="#8aa8d8"/><rect x="2.0" y="8.2" width="1.6" height="1.4" fill="#8aa8d8"/><rect x="2.0" y="10.4" width="1.6" height="1.4" fill="#8aa8d8"/><rect x="4.6" y="6.0" width="1.6" height="1.4" fill="#8aa8d8"/><rect x="4.6" y="8.2" width="1.6" height="1.4" fill="#8aa8d8"/><rect x="4.6" y="10.4" width="1.6" height="1.4" fill="#8aa8d8"/><rect x="7.2" y="6.0" width="1.6" height="1.4" fill="#8aa8d8"/><rect x="7.2" y="8.2" width="1.6" height="1.4" fill="#8aa8d8"/><rect x="7.2" y="10.4" width="1.6" height="1.4" fill="#8aa8d8"/><rect x="9.8" y="6.0" width="1.6" height="1.4" fill="#8aa8d8"/><rect x="9.8" y="8.2" width="1.6" height="1.4" fill="#8aa8d8"/><rect x="9.8" y="10.4" width="1.6" height="1.4" fill="#8aa8d8"/><rect x="9.8" y="10.4" width="1.6" height="1.4" fill="#e05030"/></svg><div style="position:absolute;left:1771.6px;top:782.24px;font:normal 11px 'Liberation Sans', sans-serif;line-height:12.29px;color:#000;white-space:pre;z-index:5;transform:scaleX(0.8800);transform-origin:0 0;">CNH_DTVALIDADE</div><svg style="position:absolute;left:1742px;top:804px;z-index:3;" width="10" height="1" viewBox="0 0 10 1"><rect x="0" y="0" width="1" height="1" fill="#808080"/><rect x="2" y="0" width="1" height="1" fill="#808080"/><rect x="4" y="0" width="1" height="1" fill="#808080"/><rect x="6" y="0" width="1" height="1" fill="#808080"/><rect x="8" y="0" width="1" height="1" fill="#808080"/></svg><svg style="position:absolute;left:1752px;top:798px;z-index:4;" width="13" height="13" viewBox="0 0 13 13"><rect x=".5" y=".5" width="12" height="12" fill="#fff" stroke="#6d95cf"/><text x="2.2" y="11" font-family="Liberation Serif" font-weight="bold" font-size="12" fill="#000">A</text></svg><div style="position:absolute;left:1771.6px;top:798.24px;font:normal 11px 'Liberation Sans', sans-serif;line-height:12.29px;color:#000;white-space:pre;z-index:5;transform:scaleX(0.8800);transform-origin:0 0;">ELEITOR</div><svg style="position:absolute;left:1742px;top:820px;z-index:3;" width="10" height="1" viewBox="0 0 10 1"><rect x="0" y="0" width="1" height="1" fill="#808080"/><rect x="2" y="0" width="1" height="1" fill="#808080"/><rect x="4" y="0" width="1" height="1" fill="#808080"/><rect x="6" y="0" width="1" height="1" fill="#808080"/><rect x="8" y="0" width="1" height="1" fill="#808080"/></svg><svg style="position:absolute;left:1752px;top:814px;z-index:4;" width="13" height="13" viewBox="0 0 13 13"><rect x=".5" y=".5" width="12" height="12" fill="#fff" stroke="#6d95cf"/><text x="2.2" y="11" font-family="Liberation Serif" font-weight="bold" font-size="12" fill="#000">A</text></svg><div style="position:absolute;left:1771.6px;top:814.24px;font:normal 11px 'Liberation Sans', sans-serif;line-height:12.29px;color:#000;white-space:pre;z-index:5;transform:scaleX(0.8800);transform-origin:0 0;">ZONAELEITORAL</div><svg style="position:absolute;left:1742px;top:836px;z-index:3;" width="10" height="1" viewBox="0 0 10 1"><rect x="0" y="0" width="1" height="1" fill="#808080"/><rect x="2" y="0" width="1" height="1" fill="#808080"/><rect x="4" y="0" width="1" height="1" fill="#808080"/><rect x="6" y="0" width="1" height="1" fill="#808080"/><rect x="8" y="0" width="1" height="1" fill="#808080"/></svg><svg style="position:absolute;left:1752px;top:830px;z-index:4;" width="13" height="13" viewBox="0 0 13 13"><rect x=".5" y=".5" width="12" height="12" fill="#fff" stroke="#6d95cf"/><text x="2.2" y="11" font-family="Liberation Serif" font-weight="bold" font-size="12" fill="#000">A</text></svg><div style="position:absolute;left:1771.6px;top:830.24px;font:normal 11px 'Liberation Sans', sans-serif;line-height:12.29px;color:#000;white-space:pre;z-index:5;transform:scaleX(0.8800);transform-origin:0 0;">SECAOELEITORAL</div><svg style="position:absolute;left:1742px;top:852px;z-index:3;" width="10" height="1" viewBox="0 0 10 1"><rect x="0" y="0" width="1" height="1" fill="#808080"/><rect x="2" y="0" width="1" height="1" fill="#808080"/><rect x="4" y="0" width="1" height="1" fill="#808080"/><rect x="6" y="0" width="1" height="1" fill="#808080"/><rect x="8" y="0" width="1" height="1" fill="#808080"/></svg><svg style="position:absolute;left:1752px;top:846px;z-index:4;" width="13" height="13" viewBox="0 0 13 13"><rect x=".5" y=".5" width="12" height="12" fill="#fff" stroke="#6d95cf"/><text x="2.2" y="11" font-family="Liberation Serif" font-weight="bold" font-size="12" fill="#000">A</text></svg><div style="position:absolute;left:1771.6px;top:846.24px;font:normal 11px 'Liberation Sans', sans-serif;line-height:12.29px;color:#000;white-space:pre;z-index:5;transform:scaleX(0.8800);transform-origin:0 0;">RESERVISTA</div><svg style="position:absolute;left:1742px;top:868px;z-index:3;" width="10" height="1" viewBox="0 0 10 1"><rect x="0" y="0" width="1" height="1" fill="#808080"/><rect x="2" y="0" width="1" height="1" fill="#808080"/><rect x="4" y="0" width="1" height="1" fill="#808080"/><rect x="6" y="0" width="1" height="1" fill="#808080"/><rect x="8" y="0" width="1" height="1" fill="#808080"/></svg><svg style="position:absolute;left:1752px;top:862px;z-index:4;" width="13" height="13" viewBox="0 0 13 13"><rect x=".5" y="1.5" width="12" height="11" fill="#f4f8fd" stroke="#9ab8e0"/><rect x="1" y="2" width="11" height="2.5" fill="#6d9be0"/><rect x="2.0" y="6.0" width="1.6" height="1.4" fill="#8aa8d8"/><rect x="2.0" y="8.2" width="1.6" height="1.4" fill="#8aa8d8"/><rect x="2.0" y="10.4" width="1.6" height="1.4" fill="#8aa8d8"/><rect x="4.6" y="6.0" width="1.6" height="1.4" fill="#8aa8d8"/><rect x="4.6" y="8.2" width="1.6" height="1.4" fill="#8aa8d8"/><rect x="4.6" y="10.4" width="1.6" height="1.4" fill="#8aa8d8"/><rect x="7.2" y="6.0" width="1.6" height="1.4" fill="#8aa8d8"/><rect x="7.2" y="8.2" width="1.6" height="1.4" fill="#8aa8d8"/><rect x="7.2" y="10.4" width="1.6" height="1.4" fill="#8aa8d8"/><rect x="9.8" y="6.0" width="1.6" height="1.4" fill="#8aa8d8"/><rect x="9.8" y="8.2" width="1.6" height="1.4" fill="#8aa8d8"/><rect x="9.8" y="10.4" width="1.6" height="1.4" fill="#8aa8d8"/><rect x="9.8" y="10.4" width="1.6" height="1.4" fill="#e05030"/></svg><div style="position:absolute;left:1771.6px;top:862.24px;font:normal 11px 'Liberation Sans', sans-serif;line-height:12.29px;color:#000;white-space:pre;z-index:5;transform:scaleX(0.8800);transform-origin:0 0;">DTADMISSAO</div><svg style="position:absolute;left:1742px;top:884px;z-index:3;" width="10" height="1" viewBox="0 0 10 1"><rect x="0" y="0" width="1" height="1" fill="#808080"/><rect x="2" y="0" width="1" height="1" fill="#808080"/><rect x="4" y="0" width="1" height="1" fill="#808080"/><rect x="6" y="0" width="1" height="1" fill="#808080"/><rect x="8" y="0" width="1" height="1" fill="#808080"/></svg><svg style="position:absolute;left:1752px;top:878px;z-index:4;" width="13" height="13" viewBox="0 0 13 13"><rect x=".5" y=".5" width="12" height="12" fill="#fff" stroke="#6d95cf"/><text x="2.2" y="11" font-family="Liberation Serif" font-weight="bold" font-size="12" fill="#000">A</text></svg><div style="position:absolute;left:1771.6px;top:878.24px;font:normal 11px 'Liberation Sans', sans-serif;line-height:12.29px;color:#000;white-space:pre;z-index:5;transform:scaleX(0.8800);transform-origin:0 0;">TIPOADMISSAO</div><svg style="position:absolute;left:1742px;top:900px;z-index:3;" width="10" height="1" viewBox="0 0 10 1"><rect x="0" y="0" width="1" height="1" fill="#808080"/><rect x="2" y="0" width="1" height="1" fill="#808080"/><rect x="4" y="0" width="1" height="1" fill="#808080"/><rect x="6" y="0" width="1" height="1" fill="#808080"/><rect x="8" y="0" width="1" height="1" fill="#808080"/></svg><svg style="position:absolute;left:1752px;top:894px;z-index:4;" width="13" height="13" viewBox="0 0 13 13"><rect x=".5" y=".5" width="12" height="12" fill="#fff" stroke="#6d95cf"/><text x="2.2" y="11" font-family="Liberation Serif" font-weight="bold" font-size="12" fill="#000">A</text></svg><div style="position:absolute;left:1771.6px;top:894.24px;font:normal 11px 'Liberation Sans', sans-serif;line-height:12.29px;color:#000;white-space:pre;z-index:5;transform:scaleX(0.8800);transform-origin:0 0;">TIPOCARGOATUAL</div><svg style="position:absolute;left:1742px;top:916px;z-index:3;" width="10" height="1" viewBox="0 0 10 1"><rect x="0" y="0" width="1" height="1" fill="#808080"/><rect x="2" y="0" width="1" height="1" fill="#808080"/><rect x="4" y="0" width="1" height="1" fill="#808080"/><rect x="6" y="0" width="1" height="1" fill="#808080"/><rect x="8" y="0" width="1" height="1" fill="#808080"/></svg><svg style="position:absolute;left:1752px;top:910px;z-index:4;" width="13" height="13" viewBox="0 0 13 13"><rect x=".5" y="1.5" width="12" height="11" fill="#f4f8fd" stroke="#9ab8e0"/><rect x="1" y="2" width="11" height="2.5" fill="#6d9be0"/><rect x="2.0" y="6.0" width="1.6" height="1.4" fill="#8aa8d8"/><rect x="2.0" y="8.2" width="1.6" height="1.4" fill="#8aa8d8"/><rect x="2.0" y="10.4" width="1.6" height="1.4" fill="#8aa8d8"/><rect x="4.6" y="6.0" width="1.6" height="1.4" fill="#8aa8d8"/><rect x="4.6" y="8.2" width="1.6" height="1.4" fill="#8aa8d8"/><rect x="4.6" y="10.4" width="1.6" height="1.4" fill="#8aa8d8"/><rect x="7.2" y="6.0" width="1.6" height="1.4" fill="#8aa8d8"/><rect x="7.2" y="8.2" width="1.6" height="1.4" fill="#8aa8d8"/><rect x="7.2" y="10.4" width="1.6" height="1.4" fill="#8aa8d8"/><rect x="9.8" y="6.0" width="1.6" height="1.4" fill="#8aa8d8"/><rect x="9.8" y="8.2" width="1.6" height="1.4" fill="#8aa8d8"/><rect x="9.8" y="10.4" width="1.6" height="1.4" fill="#8aa8d8"/><rect x="9.8" y="10.4" width="1.6" height="1.4" fill="#e05030"/></svg><div style="position:absolute;left:1771.6px;top:910.24px;font:normal 11px 'Liberation Sans', sans-serif;line-height:12.29px;color:#000;white-space:pre;z-index:5;transform:scaleX(0.8800);transform-origin:0 0;">DTADMUCARGO</div><svg style="position:absolute;left:1742px;top:932px;z-index:3;" width="10" height="1" viewBox="0 0 10 1"><rect x="0" y="0" width="1" height="1" fill="#808080"/><rect x="2" y="0" width="1" height="1" fill="#808080"/><rect x="4" y="0" width="1" height="1" fill="#808080"/><rect x="6" y="0" width="1" height="1" fill="#808080"/><rect x="8" y="0" width="1" height="1" fill="#808080"/></svg><svg style="position:absolute;left:1752px;top:926px;z-index:4;" width="13" height="13" viewBox="0 0 13 13"><rect x=".5" y="1.5" width="12" height="11" fill="#f4f8fd" stroke="#9ab8e0"/><rect x="1" y="2" width="11" height="2.5" fill="#6d9be0"/><rect x="2.0" y="6.0" width="1.6" height="1.4" fill="#8aa8d8"/><rect x="2.0" y="8.2" width="1.6" height="1.4" fill="#8aa8d8"/><rect x="2.0" y="10.4" width="1.6" height="1.4" fill="#8aa8d8"/><rect x="4.6" y="6.0" width="1.6" height="1.4" fill="#8aa8d8"/><rect x="4.6" y="8.2" width="1.6" height="1.4" fill="#8aa8d8"/><rect x="4.6" y="10.4" width="1.6" height="1.4" fill="#8aa8d8"/><rect x="7.2" y="6.0" width="1.6" height="1.4" fill="#8aa8d8"/><rect x="7.2" y="8.2" width="1.6" height="1.4" fill="#8aa8d8"/><rect x="7.2" y="10.4" width="1.6" height="1.4" fill="#8aa8d8"/><rect x="9.8" y="6.0" width="1.6" height="1.4" fill="#8aa8d8"/><rect x="9.8" y="8.2" width="1.6" height="1.4" fill="#8aa8d8"/><rect x="9.8" y="10.4" width="1.6" height="1.4" fill="#8aa8d8"/><rect x="9.8" y="10.4" width="1.6" height="1.4" fill="#e05030"/></svg><div style="position:absolute;left:1771.6px;top:926.24px;font:normal 11px 'Liberation Sans', sans-serif;line-height:12.29px;color:#000;white-space:pre;z-index:5;transform:scaleX(0.8800);transform-origin:0 0;">DTTEMPOSERVICO</div><svg style="position:absolute;left:1742px;top:948px;z-index:3;" width="10" height="1" viewBox="0 0 10 1"><rect x="0" y="0" width="1" height="1" fill="#808080"/><rect x="2" y="0" width="1" height="1" fill="#808080"/><rect x="4" y="0" width="1" height="1" fill="#808080"/><rect x="6" y="0" width="1" height="1" fill="#808080"/><rect x="8" y="0" width="1" height="1" fill="#808080"/></svg><svg style="position:absolute;left:1752px;top:942px;z-index:4;" width="13" height="13" viewBox="0 0 13 13"><rect x=".5" y="1.5" width="12" height="11" fill="#f4f8fd" stroke="#9ab8e0"/><rect x="1" y="2" width="11" height="2.5" fill="#6d9be0"/><rect x="2.0" y="6.0" width="1.6" height="1.4" fill="#8aa8d8"/><rect x="2.0" y="8.2" width="1.6" height="1.4" fill="#8aa8d8"/><rect x="2.0" y="10.4" width="1.6" height="1.4" fill="#8aa8d8"/><rect x="4.6" y="6.0" width="1.6" height="1.4" fill="#8aa8d8"/><rect x="4.6" y="8.2" width="1.6" height="1.4" fill="#8aa8d8"/><rect x="4.6" y="10.4" width="1.6" height="1.4" fill="#8aa8d8"/><rect x="7.2" y="6.0" width="1.6" height="1.4" fill="#8aa8d8"/><rect x="7.2" y="8.2" width="1.6" height="1.4" fill="#8aa8d8"/><rect x="7.2" y="10.4" width="1.6" height="1.4" fill="#8aa8d8"/><rect x="9.8" y="6.0" width="1.6" height="1.4" fill="#8aa8d8"/><rect x="9.8" y="8.2" width="1.6" height="1.4" fill="#8aa8d8"/><rect x="9.8" y="10.4" width="1.6" height="1.4" fill="#8aa8d8"/><rect x="9.8" y="10.4" width="1.6" height="1.4" fill="#e05030"/></svg><div style="position:absolute;left:1771.6px;top:942.24px;font:normal 11px 'Liberation Sans', sans-serif;line-height:12.29px;color:#000;white-space:pre;z-index:5;transform:scaleX(0.8800);transform-origin:0 0;">DTCTRLREFSAL</div><div style="position:absolute;left:1709px;top:950px;width:193px;height:17px;background:#f0f0f0;z-index:6;"></div><div style="position:absolute;left:1727px;top:951px;width:119px;height:14px;background:#cdcdcd;z-index:7;"></div><svg style="position:absolute;left:1713px;top:953px;z-index:8;" width="8" height="11" viewBox="0 0 8 11"><path d="M6.5 1L2 5.5L6.5 10" fill="none" stroke="#606060" stroke-width="1.6"/></svg><svg style="position:absolute;left:1888px;top:953px;z-index:8;" width="8" height="11" viewBox="0 0 8 11"><path d="M1.5 1L6 5.5L1.5 10" fill="none" stroke="#606060" stroke-width="1.6"/></svg><div style="position:absolute;left:1708px;top:967px;width:195px;height:1px;background:#a6a6a6;z-index:8;"></div><svg style="position:absolute;left:1709px;top:974px;z-index:4;" width="13" height="13" viewBox="0 0 13 13"><rect x=".5" y=".5" width="12" height="12" fill="#fff" stroke="#333"/><path d="M2.5 6.5L5 9.5L10.5 3" fill="none" stroke="#333" stroke-width="1.3"/></svg><div style="position:absolute;left:1723.5px;top:974.64px;font:normal 12px 'Liberation Sans', sans-serif;line-height:13.40px;color:#000;white-space:pre;z-index:5;transform:scaleX(0.8599);transform-origin:0 0;">Criar campo</div><svg style="position:absolute;left:1709px;top:990px;z-index:4;" width="13" height="13" viewBox="0 0 13 13"><rect x=".5" y=".5" width="12" height="12" fill="#fff" stroke="#333"/></svg><div style="position:absolute;left:1723.5px;top:990.64px;font:normal 12px 'Liberation Sans', sans-serif;line-height:13.40px;color:#000;white-space:pre;z-index:5;transform:scaleX(0.9030);transform-origin:0 0;">Criar rótulo</div><svg style="position:absolute;left:1709px;top:1006px;z-index:4;" width="13" height="13" viewBox="0 0 13 13"><rect x=".5" y=".5" width="12" height="12" fill="#fff" stroke="#333"/></svg><div style="position:absolute;left:1723.5px;top:1006.64px;font:normal 12px 'Liberation Sans', sans-serif;line-height:13.40px;color:#000;white-space:pre;z-index:5;transform:scaleX(0.8902);transform-origin:0 0;">Ordenar por nome</div><svg style="position:absolute;left:0;top:42px;z-index:0;pointer-events:none" width="1920" height="998"><defs><pattern id="dz" width="6" height="6" patternUnits="userSpaceOnUse"><rect x="0" y="0" width="1" height="1" fill="rgba(0,0,0,0.06)"/><rect x="3" y="1" width="1" height="1" fill="rgba(0,0,0,0.06)"/><rect x="1" y="3" width="1" height="1" fill="rgba(0,0,0,0.06)"/><rect x="4" y="4" width="1" height="1" fill="rgba(0,0,0,0.06)"/></pattern></defs><rect width="1920" height="998" fill="url(#dz)"/></svg>
</body></html>
